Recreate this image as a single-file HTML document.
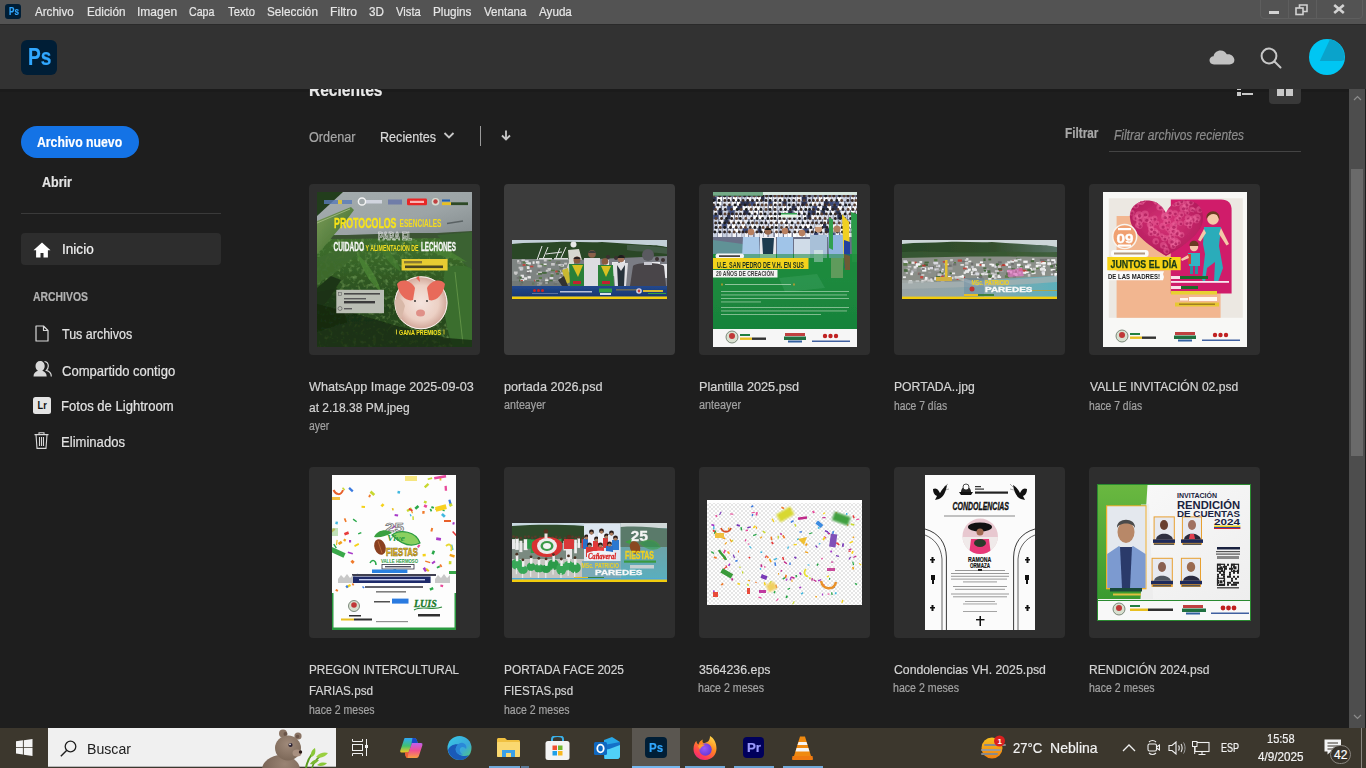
<!DOCTYPE html>
<html><head><meta charset="utf-8">
<style>
*{margin:0;padding:0;box-sizing:border-box}
html,body{width:1366px;height:768px;overflow:hidden;background:#1e1e1e;font-family:"Liberation Sans",sans-serif;position:relative}
.a{position:absolute}
.t{position:absolute;white-space:nowrap;line-height:1;transform-origin:0 0;-webkit-text-stroke:0.2px currentColor}
/* menu */
#menu{z-index:6;left:0;top:0;width:1366px;height:24px;background:#535353}
#menu .t{color:#e8e8e8;font-size:12px;top:6px}
#hdr{z-index:5;left:0;top:24px;width:1366px;height:65px;background:#323232;border-top:1px solid #2a2a2a}
.card{position:absolute;width:171px;height:171px;background:#2e2e2e;border-radius:4px;overflow:hidden}
.card.hov{background:#3c3c3c}
.img{position:absolute;overflow:hidden}
.fn{position:absolute;color:#d6d6d6;font-size:12.6px;line-height:21px;white-space:nowrap}
.meta{position:absolute;color:#9a9a9a;font-size:11.5px;white-space:nowrap;line-height:1}
.side{color:#e2e2e2;font-size:13px}
#tb{left:0;top:728px;width:1366px;height:40px;background:#3c372d}
</style></head><body>

<!-- MENU BAR -->
<div id="menu" class="a">
  <div class="a" style="left:5px;top:4px;width:16px;height:15px;background:#001e36;border-radius:3px"></div>
  <!-- window controls -->
  <div class="a" style="left:1260px;top:-2px;width:103px;height:21px;border:1px solid #5e5e5e;border-radius:0 0 4px 4px"></div>
  <div class="a" style="left:1288px;top:0;width:1px;height:18px;background:#5e5e5e"></div>
  <div class="a" style="left:1316px;top:0;width:1px;height:18px;background:#5e5e5e"></div>
  <div class="a" style="left:1269px;top:11px;width:10px;height:3px;background:#d2d2d2"></div>
  <svg class="a" style="left:1295px;top:4px" width="14" height="12" viewBox="0 0 14 12"><rect x="1" y="4" width="7" height="6.5" fill="none" stroke="#d2d2d2" stroke-width="1.6"/><path d="M4.5 4V1h7.5v6.5H8" fill="none" stroke="#d2d2d2" stroke-width="1.6"/></svg>
  <svg class="a" style="left:1333px;top:4px" width="12" height="10" viewBox="0 0 12 10"><path d="M1.2 1l9.6 8M10.8 1L1.2 9" stroke="#d2d2d2" stroke-width="2.6"/></svg>
</div>

<!-- HEADER -->
<div id="hdr" class="a">
  <div class="a" style="left:21px;top:15px;width:36px;height:35px;background:#001e36;border-radius:6px"></div>
  <!-- cloud -->
  <svg class="a" style="left:1209px;top:23px" width="26" height="17" viewBox="0 0 26 17"><path d="M5 16.5C2 16.5 0.5 14.5 0.5 12.3 0.5 10 2.3 8.3 4.6 8.2 5.2 4.8 8 2.5 11.6 2.5c2.8 0 5 1.5 6.2 3.8 0.5-0.1 0.9-0.1 1.3-0.1 3.5 0 6.3 2.7 6.3 5.9 0 2.9-2.1 4.4-4.8 4.4z" fill="#c2c2c2"/></svg>
  <!-- search -->
  <svg class="a" style="left:1259px;top:21px" width="24" height="24" viewBox="0 0 24 24"><circle cx="10" cy="10" r="7.4" fill="none" stroke="#c8c8c8" stroke-width="2"/><path d="M15.5 15.5L21.5 21.5" stroke="#c8c8c8" stroke-width="2" stroke-linecap="round"/></svg>
  <!-- avatar -->
  <svg class="a" style="left:1309px;top:14px" width="36" height="36" viewBox="0 0 36 36"><circle cx="18" cy="18" r="18" fill="#00c6f3"/><path d="M21 0.3L10.8 22H32.5L35 21A18 18 0 0 0 21 0.3z" fill="#0aa3cb"/></svg>
</div>

<!-- CONTENT -->
<div id="content">
  <div class="a" style="left:0;top:89px;width:1349px;height:3px;background:#1b1b1b"></div>
  <!-- title partially hidden -->
  <!-- list/grid icons -->
  <div class="a" style="left:1237px;top:92px;width:4px;height:4px;background:#c8c8c8"></div>
  <div class="a" style="left:1242px;top:93px;width:11px;height:2px;background:#c8c8c8"></div>
  <div class="a" style="left:1237px;top:87px;width:4px;height:3px;background:#c8c8c8"></div>
  <div class="a" style="left:1269px;top:80px;width:32px;height:24px;background:#383838;border-radius:4px"></div>
  <div class="a" style="left:1277px;top:89px;width:7px;height:7px;background:#c8c8c8"></div>
  <div class="a" style="left:1286px;top:89px;width:7px;height:7px;background:#c8c8c8"></div>

  <!-- sidebar -->
  <div class="a" style="left:21px;top:126px;width:118px;height:32px;background:#1473e6;border-radius:16px"></div>
  <div class="a" style="left:21px;top:213px;width:200px;height:1px;background:#3a3a3a"></div>
  <div class="a" style="left:21px;top:233px;width:200px;height:32px;background:#2d2d2d;border-radius:4px"></div>
  <svg class="a" style="left:33px;top:242px" width="18" height="16" viewBox="0 0 18 16"><path d="M9 0.5L0.5 8.2h2.6V15.5h4.4v-4.6h3v4.6h4.4V8.2h2.6z" fill="#fff"/></svg>
  <svg class="a" style="left:35px;top:325px" width="14" height="17" viewBox="0 0 14 17"><path d="M1 1h7.5L13 5.5V16H1z M8.5 1v4.5H13" fill="none" stroke="#d8d8d8" stroke-width="1.2" stroke-linejoin="round"/></svg>
  <svg class="a" style="left:33px;top:360px" width="19" height="17" viewBox="0 0 19 17"><path d="M0.5 16.5c0-3.5 2-5 4.5-5.8-1.6-1-2.5-2.8-2.5-4.8 0-3 2-5 4.6-5s4.6 2 4.6 5c0 2-0.9 3.8-2.5 4.8 2.5 0.8 4.5 2.3 4.5 5.8z" fill="#d8d8d8"/><path d="M11.5 1.5c2.3 0.3 3.8 2.2 3.8 4.6 0 1.8-0.8 3.3-2 4.3 2.6 0.8 5 2.5 5 6" fill="none" stroke="#d8d8d8" stroke-width="1.2"/></svg>
  <svg class="a" style="left:33px;top:397px" width="18" height="17" viewBox="0 0 18 17"><rect x="0" y="0" width="18" height="17" rx="2.5" fill="#e4e4e4"/><text x="4.6" y="11.8" font-family="Liberation Sans" font-weight="700" font-size="10" fill="#111" textLength="9.2" lengthAdjust="spacingAndGlyphs">Lr</text></svg>
  <svg class="a" style="left:34px;top:432px" width="15" height="17" viewBox="0 0 15 17"><path d="M0.5 2.6h14M5 2.5V0.8h5v1.7M2 2.6l1 13.8h9l1-13.8M5.5 5v9M7.5 5v9M9.5 5v9" fill="none" stroke="#d8d8d8" stroke-width="1.1"/></svg>

  <!-- toolbar -->
  <svg class="a" style="left:443px;top:131px" width="12" height="9" viewBox="0 0 12 9"><path d="M1.5 2l4.5 4.5 4.5-4.5" fill="none" stroke="#c8c8c8" stroke-width="1.8"/></svg>
  <div class="a" style="left:480px;top:126px;width:1px;height:20px;background:#9a9a9a"></div>
  <svg class="a" style="left:501px;top:130px" width="10" height="11" viewBox="0 0 10 11"><path d="M5 0.5v9M1 5.5l4 4 4-4" fill="none" stroke="#c8c8c8" stroke-width="1.8"/></svg>
  <div class="a" style="left:1109px;top:151px;width:192px;height:1px;background:#444"></div>

  <!-- scrollbar -->
  <div class="a" style="left:1349px;top:89px;width:16px;height:639px;background:#4d4d4d"></div>
  <div class="a" style="left:1351px;top:169px;width:12px;height:287px;background:#6a6a6a"></div>
  <svg class="a" style="left:1353px;top:95px" width="9" height="6" viewBox="0 0 9 6"><path d="M1 5l3.5-3.5L8 5" fill="none" stroke="#8c8c8c" stroke-width="1.2"/></svg>
  <svg class="a" style="left:1353px;top:714px" width="9" height="6" viewBox="0 0 9 6"><path d="M1 1l3.5 3.5L8 1" fill="none" stroke="#8c8c8c" stroke-width="1.2"/></svg>

  <!-- ROW 1 -->
  <div class="card" style="left:309px;top:184px"></div>
  <div class="card hov" style="left:504px;top:184px"></div>
  <div class="card" style="left:699px;top:184px"></div>
  <div class="card" style="left:894px;top:184px"></div>
  <div class="card" style="left:1089px;top:184px"></div>
  <div id="t1" class="img" style="left:317px;top:192px;width:155px;height:155px;background:#2a4020"><svg width="155" height="155" viewBox="0 0 155 155">
<defs>
<linearGradient id="t1sky" x1="0" y1="0" x2="1" y2="1"><stop offset="0" stop-color="#a4acae"/><stop offset="0.6" stop-color="#9ca4a6"/><stop offset="1" stop-color="#848c8e"/></linearGradient>
<linearGradient id="t1gr" x1="0" y1="0" x2="0" y2="1"><stop offset="0" stop-color="#4a7434"/><stop offset="0.4" stop-color="#3a6a2a"/><stop offset="0.75" stop-color="#24441a"/><stop offset="1" stop-color="#2e5222"/></linearGradient>
<linearGradient id="t1leaf" x1="0" y1="0" x2="1" y2="1"><stop offset="0" stop-color="#7a9a58"/><stop offset="1" stop-color="#3a6a2a"/></linearGradient>
<radialGradient id="t1pig" cx="0.5" cy="0.5" r="0.55"><stop offset="0" stop-color="#f4e4de"/><stop offset="0.6" stop-color="#ecd0c4"/><stop offset="1" stop-color="#c8988a"/></radialGradient>
<filter id="t1n" x="0" y="0" width="100%" height="100%"><feTurbulence type="fractalNoise" baseFrequency="0.25" numOctaves="2" seed="3"/><feColorMatrix values="0 0 0 0 0.35  0 0 0 0 0.6  0 0 0 0 0.2  0 0 0 -2.2 1.1"/></filter>
<filter id="t1b"><feGaussianBlur stdDeviation="0.35"/></filter>
</defs>
<g filter="url(#t1b)">
<rect width="155" height="155" fill="url(#t1gr)"/>
<rect width="155" height="155" filter="url(#t1n)" opacity="0.55"/>
<rect width="155" height="43" fill="url(#t1sky)"/>
<path d="M0 44 L30 43 L60 42 L90 41 L120 41 L155 39 L155 46 L0 47z" fill="#3a5232"/>
<path d="M0 0H26L0 24z" fill="#243c1e"/>
<path d="M0 29 L34 15 L37 18 L28 30 L16 44 L6 56 L0 62z" fill="url(#t1leaf)"/>
<path d="M0 31 L33 17" stroke="#a8c088" stroke-width="0.8"/>
<path d="M0 66 L30 54 L40 62 L22 78 L0 92z" fill="#3e6a2e" opacity="0.9"/>
<path d="M0 96 L14 84 L24 88 L10 110 L0 118z" fill="#1e3618"/>
<path d="M120 43 L155 40 L155 80 L140 64z" fill="#3a6230"/>
<path d="M90 48 C110 50 130 56 150 70 C130 66 110 60 90 48z" fill="#4a8234" opacity="0.8"/>
<path d="M40 62 C50 70 60 84 64 100 C54 92 46 80 40 62z" fill="#4e8a36" opacity="0.7"/>
<path d="M60 50 C70 56 80 66 84 80 C74 74 66 64 60 50z" fill="#467e30" opacity="0.7"/>
<path d="M0 100 L20 96 L30 130 L0 140z" fill="#1a3214" opacity="0.7"/>
<path d="M128 76 C138 72 155 74 155 78 L155 155 L136 155 C126 128 124 100 128 76z" fill="#3a6e2e"/>
<path d="M138 80 L146 152" stroke="#6a9a4a" stroke-width="0.8"/>
<path d="M0 112 L40 122 L80 134 L130 146 L155 148 V155 H0z" fill="#16280f" opacity="0.75"/>
<!-- logos -->
<rect x="7" y="8" width="28" height="4" fill="#5a7ab8" opacity="0.8"/>
<rect x="21" y="8" width="4" height="4" fill="#d8c040"/>
<circle cx="45" cy="9.5" r="3.6" fill="none" stroke="#f4f4f4" stroke-width="1.5"/>
<rect x="49" y="8" width="16" height="3.5" fill="#d8dce8" opacity="0.85"/>
<rect x="71" y="7.5" width="14" height="5" fill="#5060a8" opacity="0.6"/>
<rect x="90" y="6.6" width="20" height="6.6" rx="1.2" fill="#e82828"/>
<rect x="93" y="8.8" width="14" height="2.2" fill="#ffd8d8" opacity="0.8"/>
<circle cx="118.5" cy="9.8" r="3.8" fill="#d8dcd0"/><circle cx="118.5" cy="9.5" r="2.2" fill="#c04040"/>
<rect x="125" y="7.5" width="8" height="2" fill="#2060b0"/>
<rect x="125" y="10.3" width="9" height="2.8" fill="#e8c020"/>
<rect x="134" y="10.3" width="17" height="2.8" fill="#2e4a28"/>
<!-- title -->
<text x="17" y="35.5" font-family="Liberation Sans" font-weight="700" font-size="15.5" fill="#f8e41a" stroke="#f8e41a" stroke-width="0.3" textLength="62.5" lengthAdjust="spacingAndGlyphs">PROTOCOLOS</text>
<text x="82.5" y="35" font-family="Liberation Sans" font-weight="700" font-size="11.5" fill="#f4dc20" textLength="42" lengthAdjust="spacingAndGlyphs">ESENCIALES</text>
<text x="61" y="48" font-family="Liberation Sans" font-weight="700" font-size="11" fill="none" stroke="#e8e8e8" stroke-width="0.7" textLength="34" lengthAdjust="spacingAndGlyphs">PARA EL</text>
<path d="M130 31.5 L146 29" stroke="#5a6264" stroke-width="1.6"/>
<text x="16.5" y="58.8" font-family="Liberation Sans" font-weight="700" font-size="12" fill="#f8f8f8" stroke="#f8f8f8" stroke-width="0.3" textLength="30.5" lengthAdjust="spacingAndGlyphs">CUIDADO</text>
<text x="48.5" y="58.5" font-family="Liberation Sans" font-weight="700" font-size="8.5" fill="#f4dc20" textLength="53" lengthAdjust="spacingAndGlyphs">Y ALIMENTACIÓN DE</text>
<text x="104" y="58.8" font-family="Liberation Sans" font-weight="700" font-size="12" fill="#f8f8f8" stroke="#f8f8f8" stroke-width="0.3" textLength="35" lengthAdjust="spacingAndGlyphs">LECHONES</text>
<!-- yellow box -->
<rect x="84.6" y="67" width="46" height="11.5" fill="#e8cc30"/>
<rect x="87" y="69" width="18" height="2.4" fill="#8a7a30"/>
<rect x="88" y="73.5" width="38" height="2.6" fill="#4a4420"/>
<!-- grey box -->
<rect x="19.3" y="97.8" width="47.7" height="23.4" fill="#babeb4"/>
<rect x="21.5" y="100.5" width="3" height="3" fill="none" stroke="#666" stroke-width="0.6"/>
<rect x="27" y="101" width="36" height="1.6" fill="#4a4a4a"/>
<rect x="27" y="106" width="22" height="1.4" fill="#5a5a5a"/>
<rect x="27" y="109" width="31" height="2.4" fill="#3a3a3a"/>
<circle cx="23" cy="116.5" r="2" fill="none" stroke="#555" stroke-width="0.6"/>
<rect x="27" y="116" width="8" height="1.4" fill="#5a5a5a"/>
<!-- pig -->
<circle cx="104" cy="110.8" r="26.5" fill="url(#t1pig)"/>
<circle cx="104" cy="110.8" r="26" fill="none" stroke="#f8f4f0" stroke-width="1"/>
<path d="M80 92 C84 86 94 88 98 96 L96 108 C90 110 82 104 80 92z" fill="#e86a5a"/>
<path d="M128 92 C124 86 114 88 110 96 L112 108 C118 110 126 104 128 92z" fill="#e86a5a"/>
<path d="M99 86 L102 84 L103 90z" fill="#e86050"/>
<path d="M78 108 C82 104 86 108 88 114 L84 128 C80 124 78 116 78 108z" fill="#d8b8a8"/>
<ellipse cx="103.5" cy="121" rx="4.5" ry="3.5" fill="#e09088"/>
<circle cx="98" cy="109" r="0.9" fill="#222"/>
<circle cx="110" cy="109" r="0.9" fill="#222"/>
<!-- gana premios -->
<rect x="79" y="137.5" width="1" height="5" fill="#c8c030"/><rect x="126.5" y="137.5" width="1" height="5" fill="#c8c030"/>
<text x="82" y="143.3" font-family="Liberation Sans" font-weight="700" font-size="8" fill="#f4e020" textLength="42" lengthAdjust="spacingAndGlyphs">GANA PREMIOS</text>
</g>
</svg>
</div>
  <div id="t2" class="img" style="left:512px;top:240px;width:155px;height:59px;background:#5a6a60"><svg width="155" height="59" viewBox="0 0 155 59">
<defs>
<linearGradient id="t2band" x1="0" y1="0" x2="0" y2="1"><stop offset="0" stop-color="#22488e"/><stop offset="1" stop-color="#183670"/></linearGradient>
<filter id="t2b"><feGaussianBlur stdDeviation="0.4"/></filter>
<filter id="t2n" x="0" y="0" width="100%" height="100%"><feTurbulence type="fractalNoise" baseFrequency="0.5" numOctaves="2" seed="5"/><feColorMatrix values="0 0 0 0 0.95  0 0 0 0 0.95  0 0 0 0 0.95  0 0 0 -1.6 1.0"/></filter>
</defs>
<g filter="url(#t2b)">
<rect width="155" height="59" fill="#8a9088"/>
<rect width="155" height="8" fill="#c4d0d8"/>
<path d="M0 4 C15 2 30 3 45 2 C60 1 75 3 90 2 C105 3 120 4 135 5 C145 5 150 6 155 7 V24 H0z" fill="#2c4628"/>
<path d="M115 5 C130 5 140 6 155 8 V14 C140 12 128 12 115 10z" fill="#5a6e62" opacity="0.5"/>
<rect y="19" width="60" height="27" fill="#7e8482"/>
<rect x="15.5" y="36.1" width="3.4" height="2.4" fill="#e8e8e8"/><rect x="13.8" y="22.7" width="2.5" height="2.3" fill="#e8e8e8"/><rect x="31.9" y="24.3" width="2.6" height="2.0" fill="#5a7a48"/><rect x="36.5" y="19.4" width="2.6" height="1.7" fill="#5a7a48"/><rect x="48.6" y="39.2" width="3.7" height="2.3" fill="#d8d8e0"/><rect x="47.6" y="25.4" width="3.7" height="2.0" fill="#4a6a40"/><rect x="33.8" y="29.7" width="2.7" height="2.0" fill="#c8c8c8"/><rect x="7.0" y="39.5" width="3.6" height="2.6" fill="#4a6a40"/><rect x="33.3" y="37.7" width="2.3" height="2.2" fill="#a0a0a0"/><rect x="10.6" y="24.1" width="3.0" height="1.8" fill="#c04840"/><rect x="36.3" y="28.9" width="2.3" height="2.0" fill="#c8c8c8"/><rect x="14.1" y="23.9" width="2.7" height="1.6" fill="#4a6a40"/><rect x="57.2" y="28.7" width="3.4" height="2.5" fill="#e8e8e8"/><rect x="8.5" y="39.2" width="3.7" height="2.2" fill="#e8e8e8"/><rect x="24.8" y="40.7" width="3.8" height="2.4" fill="#c8c8c8"/><rect x="51.2" y="28.4" width="3.4" height="1.7" fill="#d8d8e0"/><rect x="36.2" y="37.1" width="2.4" height="2.2" fill="#707070"/><rect x="35.5" y="28.0" width="3.5" height="1.9" fill="#c8c8c8"/><rect x="9.9" y="36.1" width="2.2" height="1.7" fill="#e8e8e8"/><rect x="38.6" y="32.9" width="3.1" height="1.5" fill="#a0a0a0"/><rect x="20.6" y="21.3" width="2.0" height="2.6" fill="#e8e8e8"/><rect x="18.1" y="25.7" width="3.2" height="1.6" fill="#c04840"/><rect x="22.0" y="39.9" width="2.0" height="1.9" fill="#c04840"/><rect x="58.2" y="31.9" width="2.9" height="2.2" fill="#c8c8c8"/><rect x="1.9" y="31.5" width="3.8" height="2.3" fill="#c8c8c8"/><rect x="41.0" y="40.2" width="2.5" height="2.1" fill="#a0a0a0"/><rect x="14.7" y="26.2" width="2.4" height="1.9" fill="#e8e8e8"/><rect x="23.9" y="21.2" width="3.5" height="2.2" fill="#e8e8e8"/><rect x="46.4" y="23.8" width="3.0" height="2.1" fill="#c8c8c8"/><rect x="17.4" y="29.9" width="2.3" height="2.4" fill="#e8e8e8"/><rect x="49.4" y="24.5" width="2.6" height="1.9" fill="#e8e8e8"/><rect x="7.7" y="28.0" width="2.9" height="2.5" fill="#d8d8e0"/><rect x="2.6" y="32.4" width="2.3" height="2.4" fill="#c8c8c8"/><rect x="53.6" y="32.6" width="2.3" height="1.5" fill="#c8c8c8"/><rect x="52.1" y="22.7" width="3.0" height="1.9" fill="#c8c8c8"/><rect x="48.1" y="24.3" width="3.4" height="2.2" fill="#d8d8e0"/><rect x="31.2" y="42.0" width="2.9" height="2.1" fill="#707070"/><rect x="50.4" y="41.4" width="2.2" height="1.7" fill="#c04840"/><rect x="48.7" y="32.3" width="2.6" height="2.6" fill="#c8c8c8"/><rect x="5.2" y="20.3" width="2.1" height="2.3" fill="#e8e8e8"/><rect x="43.0" y="40.7" width="4.0" height="2.4" fill="#a0a0a0"/><rect x="37.3" y="39.8" width="3.4" height="1.8" fill="#4a6a40"/><rect x="6.6" y="26.7" width="4.0" height="2.0" fill="#c8c8c8"/><rect x="47.1" y="30.3" width="2.0" height="1.5" fill="#c8c8c8"/><rect x="19.9" y="42.4" width="2.5" height="2.4" fill="#5a7a48"/><rect x="25.0" y="43.8" width="3.5" height="2.0" fill="#c8c8c8"/><rect x="27.7" y="41.6" width="3.1" height="1.7" fill="#a0a0a0"/><rect x="28.6" y="23.8" width="3.1" height="1.5" fill="#5a7a48"/><rect x="10.7" y="21.6" width="3.2" height="1.8" fill="#5a7a48"/><rect x="29.8" y="32.0" width="3.7" height="1.7" fill="#4a6a40"/><rect x="38.9" y="29.7" width="3.9" height="1.5" fill="#5a7a48"/><rect x="8.6" y="40.0" width="2.3" height="1.6" fill="#c04840"/><rect x="55.6" y="25.4" width="3.0" height="2.2" fill="#c8c8c8"/><rect x="31.8" y="19.2" width="2.9" height="2.3" fill="#c8c8c8"/><rect x="13.2" y="20.3" width="3.4" height="2.0" fill="#d8d8e0"/><rect x="44.4" y="21.5" width="3.8" height="2.5" fill="#5a7a48"/><rect x="49.9" y="36.0" width="3.4" height="2.2" fill="#707070"/><rect x="15.4" y="22.3" width="3.5" height="2.2" fill="#e8e8e8"/><rect x="38.5" y="34.3" width="3.0" height="2.4" fill="#5a7a48"/><rect x="22.9" y="39.4" width="3.0" height="2.1" fill="#a0a0a0"/><rect x="56.0" y="30.1" width="3.9" height="1.9" fill="#4a6a40"/><rect x="54.8" y="36.1" width="2.8" height="1.6" fill="#c04840"/><rect x="24.9" y="39.4" width="3.6" height="2.6" fill="#a0a0a0"/><rect x="24.6" y="33.1" width="3.5" height="1.6" fill="#c8c8c8"/><rect x="8.7" y="27.1" width="2.6" height="2.6" fill="#c8c8c8"/><rect x="56.0" y="26.4" width="2.4" height="2.6" fill="#e8e8e8"/><rect x="6.8" y="22.2" width="2.1" height="1.9" fill="#c8c8c8"/><rect x="9.5" y="19.4" width="3.4" height="1.6" fill="#c8c8c8"/><rect x="33.9" y="41.1" width="3.3" height="2.3" fill="#4a6a40"/><rect x="47.8" y="40.3" width="2.3" height="1.6" fill="#707070"/><rect x="31.1" y="32.0" width="3.6" height="1.7" fill="#4a6a40"/><rect x="25.6" y="29.5" width="2.5" height="1.8" fill="#707070"/><rect x="33.2" y="41.7" width="2.6" height="2.3" fill="#e8e8e8"/><rect x="39.1" y="23.0" width="3.7" height="2.6" fill="#c8c8c8"/><rect x="48.5" y="24.5" width="2.6" height="1.6" fill="#a0a0a0"/><rect x="6.3" y="36.6" width="3.2" height="2.0" fill="#4a6a40"/><rect x="14.0" y="27.3" width="2.7" height="1.5" fill="#5a7a48"/><rect x="5.3" y="21.5" width="3.6" height="2.4" fill="#a0a0a0"/><rect x="25.3" y="22.5" width="2.0" height="2.1" fill="#c8c8c8"/><rect x="9.1" y="41.6" width="2.0" height="1.9" fill="#4a6a40"/><rect x="44.8" y="21.7" width="3.5" height="2.1" fill="#707070"/><rect x="56.6" y="39.0" width="3.2" height="2.3" fill="#c04840"/><rect x="33.1" y="39.4" width="3.2" height="1.9" fill="#e8e8e8"/><rect x="47.4" y="27.5" width="2.9" height="1.8" fill="#707070"/><rect x="24.1" y="39.9" width="3.2" height="2.1" fill="#4a6a40"/><rect x="26.4" y="32.4" width="3.5" height="2.3" fill="#4a6a40"/><rect x="53.5" y="33.0" width="3.1" height="1.7" fill="#c8c8c8"/><rect x="26.1" y="31.5" width="3.8" height="1.5" fill="#c8c8c8"/><rect x="44.4" y="30.5" width="3.7" height="1.7" fill="#4a6a40"/><rect x="25.9" y="33.2" width="2.1" height="1.9" fill="#5a7a48"/><rect x="44.1" y="33.1" width="2.8" height="1.5" fill="#4a6a40"/><rect x="26.8" y="37.1" width="3.2" height="1.9" fill="#5a7a48"/><rect x="7.9" y="43.0" width="2.2" height="2.6" fill="#707070"/><rect x="26.9" y="42.4" width="3.0" height="2.1" fill="#e8e8e8"/><rect x="47.9" y="35.0" width="2.5" height="1.6" fill="#a0a0a0"/><rect x="56.1" y="40.8" width="2.9" height="1.5" fill="#5a7a48"/><rect x="12.1" y="37.3" width="3.0" height="2.6" fill="#e8e8e8"/><rect x="47.6" y="37.0" width="2.0" height="2.1" fill="#c8c8c8"/><rect x="41.7" y="43.0" width="3.3" height="2.0" fill="#707070"/><rect x="14.9" y="30.7" width="2.2" height="2.3" fill="#e8e8e8"/><rect x="31.6" y="23.5" width="3.1" height="1.6" fill="#e8e8e8"/><rect x="37.5" y="37.0" width="3.8" height="2.2" fill="#d8d8e0"/><rect x="8.6" y="34.7" width="3.3" height="1.7" fill="#e8e8e8"/><rect x="14.4" y="32.1" width="3.6" height="2.3" fill="#707070"/><rect x="4.7" y="37.0" width="3.0" height="1.7" fill="#707070"/><rect x="14.7" y="26.7" width="2.9" height="2.3" fill="#e8e8e8"/><rect x="26.5" y="24.9" width="3.3" height="2.4" fill="#c8c8c8"/><rect x="43.2" y="30.6" width="2.4" height="1.8" fill="#c04840"/><rect x="48.4" y="34.0" width="2.0" height="2.4" fill="#707070"/><rect x="25.4" y="25.0" width="2.9" height="2.3" fill="#c8c8c8"/><rect y="41" width="60" height="5" fill="#6a7270" opacity="0.6"/>
<!-- signature -->
<path d="M25 20 L30 6 M31 19 L36 7 M34 14 C40 13 44 13 50 12 M44 18 L48 8 M49 18 L54 7" stroke="#e8e8e8" stroke-width="1" fill="none"/>
<rect x="27" y="18" width="13" height="1.5" fill="#dddddd"/><rect x="42" y="18" width="14" height="1.5" fill="#dddddd"/>
<!-- cyclist -->
<circle cx="61.5" cy="4.5" r="3" fill="#e8e8e8"/>
<path d="M56 10 L67 9 L70 20 L64 28 L52 36 L57 22z" fill="#d8d8d0"/>
<path d="M50 30 L56 28 L59 42 L54 44z" fill="#c8b830"/>
<path d="M46 40 L52 36 L56 46 L50 46z" fill="#303030"/>
<!-- crowd bg -->
<path d="M62 20 L155 16 V46 H62z" fill="#7a7c84"/>
<g fill="#e8e8ec"><rect x="100" y="22" width="6" height="14"/><rect x="108" y="20" width="5" height="12"/><rect x="92" y="20" width="5" height="10"/><rect x="140" y="22" width="8" height="14"/><rect x="148" y="24" width="7" height="14"/></g>
<g fill="#3a3030"><circle cx="96" cy="17" r="2"/><circle cx="104" cy="18" r="2"/><circle cx="111" cy="17" r="2"/><circle cx="145" cy="19" r="2"/><circle cx="151" cy="20" r="2"/></g>
<!-- people -->
<path d="M57 24 L73 24 L74 46 L58 46z" fill="#2a8038"/>
<path d="M60 25 L66 37 L71 25z" fill="#d8c020"/>
<circle cx="65" cy="20" r="3.5" fill="#8a5a40"/><path d="M61.5 19 C62 16 68 16 68.5 19z" fill="#2a2020"/>
<rect x="61" y="41" width="8" height="3" fill="#c02030"/>
<path d="M72 18 L88 18 L89 46 L72 46z" fill="#dcdce0"/>
<circle cx="80" cy="14" r="3.8" fill="#8a6048"/><path d="M76 13 C77 10 83 10 84 13z" fill="#3a3a3a"/>
<path d="M86 25 L101 25 L102 46 L86 46z" fill="#2a8038"/>
<path d="M89 26 L94 37 L99 26z" fill="#d8c020"/>
<circle cx="93" cy="21.5" r="3.3" fill="#8a5a40"/>
<rect x="90" y="41" width="8" height="3" fill="#c02030"/>
<path d="M101 23 L116 23 L114 46 L103 46z" fill="#e0e0e4"/>
<path d="M105 25 L109 31 L113 25 L112 46 L106 46z" fill="#28303a"/>
<circle cx="109" cy="19" r="3.2" fill="#a07058"/><path d="M105.5 18 C106 14 112 14 112.5 18z" fill="#1a1a1a"/>
<path d="M121 26 C124 22 148 22 152 26 L154 46 H118z" fill="#4a4448"/>
<circle cx="136" cy="15" r="6" fill="#5a5a60"/>
<rect x="132" y="22" width="8" height="3" fill="#c8c8d0"/>
<!-- band -->
<rect y="46" width="155" height="10.6" fill="url(#t2band)"/>
<circle cx="22.5" cy="50.5" r="1.5" fill="#d02020"/><circle cx="26.5" cy="50.5" r="1.5" fill="#d02020"/><circle cx="30.5" cy="50.5" r="1.5" fill="#d02020"/>
<rect x="20" y="53" width="26" height="1" fill="#5a70a0"/>
<rect x="48" y="51" width="32" height="1.5" fill="#b8c0d8"/>
<rect x="87" y="48.5" width="13" height="4" fill="#30a040"/>
<rect x="88" y="53" width="11" height="2" fill="#d8e0f0"/>
<rect x="104" y="49.5" width="24" height="0.8" fill="#b09030"/>
<circle cx="127" cy="51" r="2.8" fill="#d8d8e8"/><circle cx="127" cy="51" r="1.4" fill="#c04040"/>
<rect x="131" y="50" width="20" height="2" fill="#d8b830"/><rect x="136" y="53" width="18" height="1" fill="#30a040"/>
<rect y="56.6" width="155" height="2.4" fill="#f2cc10"/>
</g>
</svg>
</div>
  <div id="t3" class="img" style="left:713px;top:192px;width:144px;height:155px;background:#2a8a40"><svg width="144" height="155" viewBox="0 0 144 155">
<defs>
<linearGradient id="t3g" x1="0" y1="0" x2="0" y2="1"><stop offset="0" stop-color="#48a860"/><stop offset="0.45" stop-color="#1e8c40"/><stop offset="1" stop-color="#168038"/></linearGradient>
<filter id="t3b"><feGaussianBlur stdDeviation="0.35"/></filter>
</defs>
<g filter="url(#t3b)">
<rect width="144" height="155" fill="url(#t3g)"/>
<rect width="144" height="62" fill="#6a7088"/><rect x="-1.5" y="5.0" width="4.4" height="4" fill="#2a3050"/><circle cx="0.7" cy="4.0" r="1.4" fill="#5a4030"/><rect x="4.1" y="5.0" width="5.0" height="4" fill="#ffffff"/><circle cx="6.6" cy="4.0" r="1.4" fill="#3a2a20"/><rect x="9.9" y="5.0" width="3.5" height="4" fill="#f4f4f8"/><circle cx="11.6" cy="4.0" r="1.4" fill="#1a1a1a"/><rect x="14.7" y="5.0" width="3.9" height="4" fill="#f4f4f8"/><circle cx="16.7" cy="4.0" r="1.4" fill="#3a2a20"/><rect x="20.0" y="5.0" width="4.4" height="4" fill="#ffffff"/><circle cx="22.2" cy="4.0" r="1.4" fill="#5a4030"/><rect x="25.3" y="5.0" width="3.1" height="4" fill="#e8ecf4"/><circle cx="26.8" cy="4.0" r="1.4" fill="#5a4030"/><rect x="29.4" y="5.0" width="4.3" height="4" fill="#c8d0e0"/><circle cx="31.6" cy="4.0" r="1.4" fill="#2a2020"/><rect x="33.9" y="5.0" width="4.6" height="4" fill="#f4f4f8"/><circle cx="36.3" cy="4.0" r="1.4" fill="#2a2020"/><rect x="39.3" y="5.0" width="4.1" height="4" fill="#e8ecf4"/><circle cx="41.3" cy="4.0" r="1.4" fill="#5a4030"/><rect x="43.6" y="5.0" width="4.3" height="4" fill="#ffffff"/><circle cx="45.7" cy="4.0" r="1.4" fill="#3a2a20"/><rect x="48.0" y="5.0" width="3.4" height="4" fill="#2a3050"/><circle cx="49.7" cy="4.0" r="1.4" fill="#2a2020"/><rect x="51.6" y="5.0" width="4.0" height="4" fill="#d8dce8"/><circle cx="53.6" cy="4.0" r="1.4" fill="#3a2a20"/><rect x="56.1" y="5.0" width="3.3" height="4" fill="#ffffff"/><circle cx="57.7" cy="4.0" r="1.4" fill="#1a1a1a"/><rect x="59.9" y="5.0" width="3.9" height="4" fill="#e8ecf4"/><circle cx="61.9" cy="4.0" r="1.4" fill="#5a4030"/><rect x="64.4" y="5.0" width="3.1" height="4" fill="#f4f4f8"/><circle cx="65.9" cy="4.0" r="1.4" fill="#5a4030"/><rect x="67.4" y="5.0" width="3.1" height="4" fill="#ffffff"/><circle cx="69.0" cy="4.0" r="1.4" fill="#3a2a20"/><rect x="71.4" y="5.0" width="3.6" height="4" fill="#c8d0e0"/><circle cx="73.3" cy="4.0" r="1.4" fill="#2a2020"/><rect x="75.4" y="5.0" width="3.3" height="4" fill="#e8ecf4"/><circle cx="77.0" cy="4.0" r="1.4" fill="#1a1a1a"/><rect x="79.2" y="5.0" width="4.2" height="4" fill="#e8ecf4"/><circle cx="81.3" cy="4.0" r="1.4" fill="#2a2020"/><rect x="83.7" y="5.0" width="4.8" height="4" fill="#f4f4f8"/><circle cx="86.1" cy="4.0" r="1.4" fill="#5a4030"/><rect x="89.1" y="5.0" width="4.4" height="4" fill="#2a3050"/><circle cx="91.3" cy="4.0" r="1.4" fill="#3a2a20"/><rect x="94.0" y="5.0" width="5.0" height="4" fill="#c8d0e0"/><circle cx="96.5" cy="4.0" r="1.4" fill="#2a2020"/><rect x="100.4" y="5.0" width="4.0" height="4" fill="#e8ecf4"/><circle cx="102.3" cy="4.0" r="1.4" fill="#3a2a20"/><rect x="105.7" y="5.0" width="3.5" height="4" fill="#ffffff"/><circle cx="107.5" cy="4.0" r="1.4" fill="#5a4030"/><rect x="110.4" y="5.0" width="4.5" height="4" fill="#ffffff"/><circle cx="112.7" cy="4.0" r="1.4" fill="#1a1a1a"/><rect x="115.1" y="5.0" width="3.5" height="4" fill="#e8ecf4"/><circle cx="116.8" cy="4.0" r="1.4" fill="#5a4030"/><rect x="119.0" y="5.0" width="3.8" height="4" fill="#d8dce8"/><circle cx="120.8" cy="4.0" r="1.4" fill="#3a2a20"/><rect x="124.2" y="5.0" width="4.5" height="4" fill="#ffffff"/><circle cx="126.5" cy="4.0" r="1.4" fill="#1a1a1a"/><rect x="128.9" y="5.0" width="4.3" height="4" fill="#c8d0e0"/><circle cx="131.1" cy="4.0" r="1.4" fill="#5a4030"/><rect x="133.3" y="5.0" width="3.4" height="4" fill="#d8dce8"/><circle cx="135.0" cy="4.0" r="1.4" fill="#3a2a20"/><rect x="138.0" y="5.0" width="4.2" height="4" fill="#e8ecf4"/><circle cx="140.1" cy="4.0" r="1.4" fill="#5a4030"/><rect x="142.7" y="5.0" width="4.1" height="4" fill="#e8ecf4"/><circle cx="144.7" cy="4.0" r="1.4" fill="#2a2020"/><rect x="-1.6" y="9.5" width="4.4" height="4" fill="#e8ecf4"/><circle cx="0.6" cy="8.5" r="1.4" fill="#1a1a1a"/><rect x="3.8" y="9.5" width="4.7" height="4" fill="#ffffff"/><circle cx="6.1" cy="8.5" r="1.4" fill="#1a1a1a"/><rect x="9.5" y="9.5" width="4.5" height="4" fill="#d8dce8"/><circle cx="11.8" cy="8.5" r="1.4" fill="#3a2a20"/><rect x="14.2" y="9.5" width="3.2" height="4" fill="#f4f4f8"/><circle cx="15.8" cy="8.5" r="1.4" fill="#2a2020"/><rect x="18.4" y="9.5" width="4.6" height="4" fill="#f4f4f8"/><circle cx="20.6" cy="8.5" r="1.4" fill="#2a2020"/><rect x="23.9" y="9.5" width="3.3" height="4" fill="#ffffff"/><circle cx="25.5" cy="8.5" r="1.4" fill="#1a1a1a"/><rect x="27.8" y="9.5" width="4.8" height="4" fill="#2a3050"/><circle cx="30.1" cy="8.5" r="1.4" fill="#3a2a20"/><rect x="32.8" y="9.5" width="3.8" height="4" fill="#2a3050"/><circle cx="34.7" cy="8.5" r="1.4" fill="#2a2020"/><rect x="37.5" y="9.5" width="4.0" height="4" fill="#3a4a7a"/><circle cx="39.5" cy="8.5" r="1.4" fill="#2a2020"/><rect x="42.7" y="9.5" width="3.0" height="4" fill="#ffffff"/><circle cx="44.2" cy="8.5" r="1.4" fill="#2a2020"/><rect x="46.3" y="9.5" width="4.1" height="4" fill="#d8dce8"/><circle cx="48.4" cy="8.5" r="1.4" fill="#3a2a20"/><rect x="50.8" y="9.5" width="4.4" height="4" fill="#e8ecf4"/><circle cx="53.0" cy="8.5" r="1.4" fill="#2a2020"/><rect x="55.6" y="9.5" width="3.3" height="4" fill="#3a4a7a"/><circle cx="57.2" cy="8.5" r="1.4" fill="#1a1a1a"/><rect x="60.1" y="9.5" width="4.6" height="4" fill="#ffffff"/><circle cx="62.4" cy="8.5" r="1.4" fill="#2a2020"/><rect x="65.5" y="9.5" width="3.1" height="4" fill="#ffffff"/><circle cx="67.1" cy="8.5" r="1.4" fill="#1a1a1a"/><rect x="70.1" y="9.5" width="3.6" height="4" fill="#2a3050"/><circle cx="71.9" cy="8.5" r="1.4" fill="#3a2a20"/><rect x="73.8" y="9.5" width="4.6" height="4" fill="#c8d0e0"/><circle cx="76.1" cy="8.5" r="1.4" fill="#1a1a1a"/><rect x="78.5" y="9.5" width="4.3" height="4" fill="#e8ecf4"/><circle cx="80.7" cy="8.5" r="1.4" fill="#2a2020"/><rect x="83.8" y="9.5" width="4.3" height="4" fill="#d8dce8"/><circle cx="86.0" cy="8.5" r="1.4" fill="#5a4030"/><rect x="88.8" y="9.5" width="4.9" height="4" fill="#2a3050"/><circle cx="91.3" cy="8.5" r="1.4" fill="#5a4030"/><rect x="94.4" y="9.5" width="4.0" height="4" fill="#d8dce8"/><circle cx="96.5" cy="8.5" r="1.4" fill="#2a2020"/><rect x="98.8" y="9.5" width="3.1" height="4" fill="#ffffff"/><circle cx="100.4" cy="8.5" r="1.4" fill="#3a2a20"/><rect x="102.3" y="9.5" width="4.2" height="4" fill="#e8ecf4"/><circle cx="104.4" cy="8.5" r="1.4" fill="#5a4030"/><rect x="107.2" y="9.5" width="3.5" height="4" fill="#e8ecf4"/><circle cx="108.9" cy="8.5" r="1.4" fill="#5a4030"/><rect x="111.0" y="9.5" width="4.8" height="4" fill="#2a3050"/><circle cx="113.4" cy="8.5" r="1.4" fill="#2a2020"/><rect x="116.5" y="9.5" width="4.0" height="4" fill="#3a4a7a"/><circle cx="118.5" cy="8.5" r="1.4" fill="#3a2a20"/><rect x="121.7" y="9.5" width="4.3" height="4" fill="#3a4a7a"/><circle cx="123.8" cy="8.5" r="1.4" fill="#1a1a1a"/><rect x="126.3" y="9.5" width="4.8" height="4" fill="#e8ecf4"/><circle cx="128.7" cy="8.5" r="1.4" fill="#5a4030"/><rect x="132.4" y="9.5" width="4.9" height="4" fill="#c8d0e0"/><circle cx="134.8" cy="8.5" r="1.4" fill="#2a2020"/><rect x="137.6" y="9.5" width="3.4" height="4" fill="#d8dce8"/><circle cx="139.3" cy="8.5" r="1.4" fill="#3a2a20"/><rect x="141.1" y="9.5" width="3.4" height="4" fill="#ffffff"/><circle cx="142.8" cy="8.5" r="1.4" fill="#5a4030"/><rect x="145.6" y="9.5" width="3.9" height="4" fill="#f4f4f8"/><circle cx="147.5" cy="8.5" r="1.4" fill="#3a2a20"/><rect x="-1.4" y="14.0" width="3.7" height="4" fill="#2a3050"/><circle cx="0.5" cy="13.0" r="1.4" fill="#3a2a20"/><rect x="2.7" y="14.0" width="4.9" height="4" fill="#e8ecf4"/><circle cx="5.1" cy="13.0" r="1.4" fill="#1a1a1a"/><rect x="9.0" y="14.0" width="4.9" height="4" fill="#d8dce8"/><circle cx="11.5" cy="13.0" r="1.4" fill="#3a2a20"/><rect x="14.3" y="14.0" width="4.4" height="4" fill="#3a4a7a"/><circle cx="16.5" cy="13.0" r="1.4" fill="#3a2a20"/><rect x="20.1" y="14.0" width="3.9" height="4" fill="#ffffff"/><circle cx="22.0" cy="13.0" r="1.4" fill="#1a1a1a"/><rect x="25.0" y="14.0" width="4.3" height="4" fill="#2a3050"/><circle cx="27.2" cy="13.0" r="1.4" fill="#2a2020"/><rect x="29.6" y="14.0" width="4.9" height="4" fill="#f4f4f8"/><circle cx="32.1" cy="13.0" r="1.4" fill="#1a1a1a"/><rect x="34.6" y="14.0" width="4.0" height="4" fill="#f4f4f8"/><circle cx="36.6" cy="13.0" r="1.4" fill="#5a4030"/><rect x="39.6" y="14.0" width="3.5" height="4" fill="#f4f4f8"/><circle cx="41.4" cy="13.0" r="1.4" fill="#3a2a20"/><rect x="43.3" y="14.0" width="3.6" height="4" fill="#ffffff"/><circle cx="45.1" cy="13.0" r="1.4" fill="#2a2020"/><rect x="47.4" y="14.0" width="3.3" height="4" fill="#d8dce8"/><circle cx="49.1" cy="13.0" r="1.4" fill="#5a4030"/><rect x="51.5" y="14.0" width="3.1" height="4" fill="#f4f4f8"/><circle cx="53.0" cy="13.0" r="1.4" fill="#5a4030"/><rect x="55.9" y="14.0" width="3.5" height="4" fill="#ffffff"/><circle cx="57.7" cy="13.0" r="1.4" fill="#5a4030"/><rect x="60.7" y="14.0" width="3.0" height="4" fill="#ffffff"/><circle cx="62.3" cy="13.0" r="1.4" fill="#2a2020"/><rect x="64.4" y="14.0" width="4.7" height="4" fill="#c8d0e0"/><circle cx="66.8" cy="13.0" r="1.4" fill="#3a2a20"/><rect x="69.3" y="14.0" width="4.0" height="4" fill="#ffffff"/><circle cx="71.3" cy="13.0" r="1.4" fill="#5a4030"/><rect x="74.0" y="14.0" width="4.6" height="4" fill="#e8ecf4"/><circle cx="76.3" cy="13.0" r="1.4" fill="#1a1a1a"/><rect x="78.8" y="14.0" width="3.6" height="4" fill="#2a3050"/><circle cx="80.6" cy="13.0" r="1.4" fill="#2a2020"/><rect x="83.8" y="14.0" width="3.1" height="4" fill="#f4f4f8"/><circle cx="85.3" cy="13.0" r="1.4" fill="#2a2020"/><rect x="87.9" y="14.0" width="3.4" height="4" fill="#e8ecf4"/><circle cx="89.6" cy="13.0" r="1.4" fill="#2a2020"/><rect x="91.5" y="14.0" width="4.2" height="4" fill="#e8ecf4"/><circle cx="93.6" cy="13.0" r="1.4" fill="#5a4030"/><rect x="95.9" y="14.0" width="3.2" height="4" fill="#c8d0e0"/><circle cx="97.6" cy="13.0" r="1.4" fill="#1a1a1a"/><rect x="99.8" y="14.0" width="4.4" height="4" fill="#3a4a7a"/><circle cx="102.0" cy="13.0" r="1.4" fill="#5a4030"/><rect x="104.3" y="14.0" width="4.7" height="4" fill="#f4f4f8"/><circle cx="106.6" cy="13.0" r="1.4" fill="#2a2020"/><rect x="110.0" y="14.0" width="4.2" height="4" fill="#2a3050"/><circle cx="112.1" cy="13.0" r="1.4" fill="#3a2a20"/><rect x="114.3" y="14.0" width="3.7" height="4" fill="#ffffff"/><circle cx="116.1" cy="13.0" r="1.4" fill="#5a4030"/><rect x="119.2" y="14.0" width="4.8" height="4" fill="#2a3050"/><circle cx="121.6" cy="13.0" r="1.4" fill="#3a2a20"/><rect x="125.0" y="14.0" width="4.3" height="4" fill="#ffffff"/><circle cx="127.2" cy="13.0" r="1.4" fill="#2a2020"/><rect x="130.8" y="14.0" width="3.8" height="4" fill="#c8d0e0"/><circle cx="132.7" cy="13.0" r="1.4" fill="#1a1a1a"/><rect x="134.6" y="14.0" width="3.7" height="4" fill="#ffffff"/><circle cx="136.4" cy="13.0" r="1.4" fill="#2a2020"/><rect x="139.4" y="14.0" width="4.3" height="4" fill="#f4f4f8"/><circle cx="141.6" cy="13.0" r="1.4" fill="#5a4030"/><rect x="144.0" y="14.0" width="5.0" height="4" fill="#ffffff"/><circle cx="146.5" cy="13.0" r="1.4" fill="#5a4030"/><rect x="0.6" y="18.5" width="3.7" height="4" fill="#f4f4f8"/><circle cx="2.5" cy="17.5" r="1.4" fill="#5a4030"/><rect x="5.3" y="18.5" width="3.7" height="4" fill="#2a3050"/><circle cx="7.1" cy="17.5" r="1.4" fill="#1a1a1a"/><rect x="9.8" y="18.5" width="5.0" height="4" fill="#c8d0e0"/><circle cx="12.3" cy="17.5" r="1.4" fill="#2a2020"/><rect x="16.3" y="18.5" width="4.5" height="4" fill="#3a4a7a"/><circle cx="18.5" cy="17.5" r="1.4" fill="#3a2a20"/><rect x="22.2" y="18.5" width="4.0" height="4" fill="#d8dce8"/><circle cx="24.2" cy="17.5" r="1.4" fill="#1a1a1a"/><rect x="26.4" y="18.5" width="3.5" height="4" fill="#e8ecf4"/><circle cx="28.1" cy="17.5" r="1.4" fill="#5a4030"/><rect x="31.0" y="18.5" width="4.5" height="4" fill="#2a3050"/><circle cx="33.3" cy="17.5" r="1.4" fill="#1a1a1a"/><rect x="35.8" y="18.5" width="4.7" height="4" fill="#f4f4f8"/><circle cx="38.1" cy="17.5" r="1.4" fill="#5a4030"/><rect x="40.9" y="18.5" width="4.1" height="4" fill="#ffffff"/><circle cx="42.9" cy="17.5" r="1.4" fill="#2a2020"/><rect x="46.1" y="18.5" width="3.7" height="4" fill="#ffffff"/><circle cx="48.0" cy="17.5" r="1.4" fill="#1a1a1a"/><rect x="50.9" y="18.5" width="4.5" height="4" fill="#c8d0e0"/><circle cx="53.1" cy="17.5" r="1.4" fill="#5a4030"/><rect x="55.6" y="18.5" width="3.1" height="4" fill="#d8dce8"/><circle cx="57.1" cy="17.5" r="1.4" fill="#1a1a1a"/><rect x="59.5" y="18.5" width="5.0" height="4" fill="#f4f4f8"/><circle cx="62.0" cy="17.5" r="1.4" fill="#3a2a20"/><rect x="65.8" y="18.5" width="4.1" height="4" fill="#d8dce8"/><circle cx="67.9" cy="17.5" r="1.4" fill="#2a2020"/><rect x="70.0" y="18.5" width="4.8" height="4" fill="#f4f4f8"/><circle cx="72.4" cy="17.5" r="1.4" fill="#1a1a1a"/><rect x="75.5" y="18.5" width="3.8" height="4" fill="#2a3050"/><circle cx="77.4" cy="17.5" r="1.4" fill="#2a2020"/><rect x="80.6" y="18.5" width="4.5" height="4" fill="#e8ecf4"/><circle cx="82.8" cy="17.5" r="1.4" fill="#1a1a1a"/><rect x="86.2" y="18.5" width="3.9" height="4" fill="#f4f4f8"/><circle cx="88.1" cy="17.5" r="1.4" fill="#3a2a20"/><rect x="91.0" y="18.5" width="3.7" height="4" fill="#d8dce8"/><circle cx="92.8" cy="17.5" r="1.4" fill="#1a1a1a"/><rect x="95.0" y="18.5" width="3.3" height="4" fill="#3a4a7a"/><circle cx="96.6" cy="17.5" r="1.4" fill="#1a1a1a"/><rect x="98.4" y="18.5" width="4.2" height="4" fill="#2a3050"/><circle cx="100.5" cy="17.5" r="1.4" fill="#3a2a20"/><rect x="102.9" y="18.5" width="4.5" height="4" fill="#ffffff"/><circle cx="105.1" cy="17.5" r="1.4" fill="#2a2020"/><rect x="108.4" y="18.5" width="3.7" height="4" fill="#2a3050"/><circle cx="110.3" cy="17.5" r="1.4" fill="#1a1a1a"/><rect x="112.1" y="18.5" width="4.7" height="4" fill="#e8ecf4"/><circle cx="114.5" cy="17.5" r="1.4" fill="#1a1a1a"/><rect x="117.9" y="18.5" width="3.8" height="4" fill="#f4f4f8"/><circle cx="119.8" cy="17.5" r="1.4" fill="#2a2020"/><rect x="123.2" y="18.5" width="3.5" height="4" fill="#2a3050"/><circle cx="124.9" cy="17.5" r="1.4" fill="#5a4030"/><rect x="127.4" y="18.5" width="4.9" height="4" fill="#e8ecf4"/><circle cx="129.9" cy="17.5" r="1.4" fill="#2a2020"/><rect x="133.3" y="18.5" width="3.7" height="4" fill="#e8ecf4"/><circle cx="135.1" cy="17.5" r="1.4" fill="#5a4030"/><rect x="138.0" y="18.5" width="3.9" height="4" fill="#ffffff"/><circle cx="139.9" cy="17.5" r="1.4" fill="#3a2a20"/><rect x="142.5" y="18.5" width="3.5" height="4" fill="#d8dce8"/><circle cx="144.3" cy="17.5" r="1.4" fill="#5a4030"/><rect x="0.3" y="23.0" width="4.8" height="4" fill="#3a4a7a"/><circle cx="2.7" cy="22.0" r="1.4" fill="#1a1a1a"/><rect x="5.9" y="23.0" width="3.3" height="4" fill="#d8dce8"/><circle cx="7.5" cy="22.0" r="1.4" fill="#1a1a1a"/><rect x="10.2" y="23.0" width="3.6" height="4" fill="#c8d0e0"/><circle cx="12.0" cy="22.0" r="1.4" fill="#5a4030"/><rect x="14.1" y="23.0" width="3.3" height="4" fill="#2a3050"/><circle cx="15.8" cy="22.0" r="1.4" fill="#3a2a20"/><rect x="17.7" y="23.0" width="3.2" height="4" fill="#ffffff"/><circle cx="19.4" cy="22.0" r="1.4" fill="#2a2020"/><rect x="21.9" y="23.0" width="3.2" height="4" fill="#f4f4f8"/><circle cx="23.5" cy="22.0" r="1.4" fill="#3a2a20"/><rect x="26.0" y="23.0" width="3.2" height="4" fill="#e8ecf4"/><circle cx="27.5" cy="22.0" r="1.4" fill="#2a2020"/><rect x="29.5" y="23.0" width="3.9" height="4" fill="#d8dce8"/><circle cx="31.4" cy="22.0" r="1.4" fill="#2a2020"/><rect x="34.0" y="23.0" width="4.9" height="4" fill="#d8dce8"/><circle cx="36.4" cy="22.0" r="1.4" fill="#1a1a1a"/><rect x="40.2" y="23.0" width="3.8" height="4" fill="#ffffff"/><circle cx="42.1" cy="22.0" r="1.4" fill="#2a2020"/><rect x="45.4" y="23.0" width="4.5" height="4" fill="#ffffff"/><circle cx="47.7" cy="22.0" r="1.4" fill="#3a2a20"/><rect x="50.0" y="23.0" width="4.3" height="4" fill="#d8dce8"/><circle cx="52.1" cy="22.0" r="1.4" fill="#1a1a1a"/><rect x="55.4" y="23.0" width="4.4" height="4" fill="#ffffff"/><circle cx="57.6" cy="22.0" r="1.4" fill="#3a2a20"/><rect x="60.3" y="23.0" width="3.7" height="4" fill="#ffffff"/><circle cx="62.2" cy="22.0" r="1.4" fill="#1a1a1a"/><rect x="64.6" y="23.0" width="4.6" height="4" fill="#f4f4f8"/><circle cx="66.9" cy="22.0" r="1.4" fill="#1a1a1a"/><rect x="70.1" y="23.0" width="4.0" height="4" fill="#d8dce8"/><circle cx="72.1" cy="22.0" r="1.4" fill="#3a2a20"/><rect x="75.2" y="23.0" width="3.3" height="4" fill="#e8ecf4"/><circle cx="76.9" cy="22.0" r="1.4" fill="#2a2020"/><rect x="78.9" y="23.0" width="4.4" height="4" fill="#c8d0e0"/><circle cx="81.1" cy="22.0" r="1.4" fill="#2a2020"/><rect x="83.8" y="23.0" width="4.7" height="4" fill="#e8ecf4"/><circle cx="86.2" cy="22.0" r="1.4" fill="#2a2020"/><rect x="89.5" y="23.0" width="3.9" height="4" fill="#ffffff"/><circle cx="91.5" cy="22.0" r="1.4" fill="#1a1a1a"/><rect x="94.5" y="23.0" width="3.1" height="4" fill="#2a3050"/><circle cx="96.1" cy="22.0" r="1.4" fill="#1a1a1a"/><rect x="98.3" y="23.0" width="4.5" height="4" fill="#f4f4f8"/><circle cx="100.6" cy="22.0" r="1.4" fill="#3a2a20"/><rect x="103.1" y="23.0" width="3.4" height="4" fill="#f4f4f8"/><circle cx="104.8" cy="22.0" r="1.4" fill="#1a1a1a"/><rect x="106.5" y="23.0" width="4.5" height="4" fill="#d8dce8"/><circle cx="108.8" cy="22.0" r="1.4" fill="#5a4030"/><rect x="111.4" y="23.0" width="3.7" height="4" fill="#d8dce8"/><circle cx="113.3" cy="22.0" r="1.4" fill="#3a2a20"/><rect x="115.6" y="23.0" width="4.2" height="4" fill="#d8dce8"/><circle cx="117.7" cy="22.0" r="1.4" fill="#1a1a1a"/><rect x="120.5" y="23.0" width="3.7" height="4" fill="#d8dce8"/><circle cx="122.3" cy="22.0" r="1.4" fill="#3a2a20"/><rect x="124.6" y="23.0" width="4.5" height="4" fill="#2a3050"/><circle cx="126.8" cy="22.0" r="1.4" fill="#2a2020"/><rect x="130.4" y="23.0" width="3.5" height="4" fill="#c8d0e0"/><circle cx="132.1" cy="22.0" r="1.4" fill="#1a1a1a"/><rect x="134.7" y="23.0" width="4.6" height="4" fill="#d8dce8"/><circle cx="137.0" cy="22.0" r="1.4" fill="#5a4030"/><rect x="139.4" y="23.0" width="4.2" height="4" fill="#c8d0e0"/><circle cx="141.5" cy="22.0" r="1.4" fill="#3a2a20"/><rect x="144.8" y="23.0" width="4.2" height="4" fill="#3a4a7a"/><circle cx="146.9" cy="22.0" r="1.4" fill="#2a2020"/><rect x="0.7" y="27.5" width="4.6" height="4" fill="#c8d0e0"/><circle cx="3.0" cy="26.5" r="1.4" fill="#5a4030"/><rect x="6.3" y="27.5" width="4.3" height="4" fill="#f4f4f8"/><circle cx="8.5" cy="26.5" r="1.4" fill="#3a2a20"/><rect x="11.6" y="27.5" width="3.9" height="4" fill="#2a3050"/><circle cx="13.5" cy="26.5" r="1.4" fill="#1a1a1a"/><rect x="16.6" y="27.5" width="4.0" height="4" fill="#f4f4f8"/><circle cx="18.7" cy="26.5" r="1.4" fill="#2a2020"/><rect x="21.8" y="27.5" width="3.3" height="4" fill="#f4f4f8"/><circle cx="23.5" cy="26.5" r="1.4" fill="#5a4030"/><rect x="25.2" y="27.5" width="4.3" height="4" fill="#f4f4f8"/><circle cx="27.3" cy="26.5" r="1.4" fill="#1a1a1a"/><rect x="30.5" y="27.5" width="4.7" height="4" fill="#e8ecf4"/><circle cx="32.8" cy="26.5" r="1.4" fill="#5a4030"/><rect x="36.6" y="27.5" width="4.1" height="4" fill="#e8ecf4"/><circle cx="38.7" cy="26.5" r="1.4" fill="#2a2020"/><rect x="41.8" y="27.5" width="4.7" height="4" fill="#c8d0e0"/><circle cx="44.1" cy="26.5" r="1.4" fill="#1a1a1a"/><rect x="47.2" y="27.5" width="4.8" height="4" fill="#d8dce8"/><circle cx="49.6" cy="26.5" r="1.4" fill="#1a1a1a"/><rect x="53.2" y="27.5" width="3.3" height="4" fill="#e8ecf4"/><circle cx="54.9" cy="26.5" r="1.4" fill="#1a1a1a"/><rect x="56.8" y="27.5" width="3.3" height="4" fill="#f4f4f8"/><circle cx="58.5" cy="26.5" r="1.4" fill="#3a2a20"/><rect x="60.1" y="27.5" width="3.7" height="4" fill="#f4f4f8"/><circle cx="62.0" cy="26.5" r="1.4" fill="#1a1a1a"/><rect x="64.9" y="27.5" width="4.0" height="4" fill="#f4f4f8"/><circle cx="66.9" cy="26.5" r="1.4" fill="#2a2020"/><rect x="69.1" y="27.5" width="4.1" height="4" fill="#ffffff"/><circle cx="71.2" cy="26.5" r="1.4" fill="#3a2a20"/><rect x="74.6" y="27.5" width="4.2" height="4" fill="#f4f4f8"/><circle cx="76.7" cy="26.5" r="1.4" fill="#3a2a20"/><rect x="78.9" y="27.5" width="4.9" height="4" fill="#e8ecf4"/><circle cx="81.4" cy="26.5" r="1.4" fill="#1a1a1a"/><rect x="84.3" y="27.5" width="4.5" height="4" fill="#e8ecf4"/><circle cx="86.5" cy="26.5" r="1.4" fill="#1a1a1a"/><rect x="89.9" y="27.5" width="4.5" height="4" fill="#e8ecf4"/><circle cx="92.1" cy="26.5" r="1.4" fill="#1a1a1a"/><rect x="94.7" y="27.5" width="4.6" height="4" fill="#d8dce8"/><circle cx="97.0" cy="26.5" r="1.4" fill="#3a2a20"/><rect x="100.8" y="27.5" width="3.2" height="4" fill="#c8d0e0"/><circle cx="102.4" cy="26.5" r="1.4" fill="#5a4030"/><rect x="104.7" y="27.5" width="4.4" height="4" fill="#d8dce8"/><circle cx="106.9" cy="26.5" r="1.4" fill="#3a2a20"/><rect x="110.1" y="27.5" width="3.9" height="4" fill="#f4f4f8"/><circle cx="112.1" cy="26.5" r="1.4" fill="#5a4030"/><rect x="115.4" y="27.5" width="3.2" height="4" fill="#3a4a7a"/><circle cx="117.0" cy="26.5" r="1.4" fill="#5a4030"/><rect x="119.9" y="27.5" width="4.9" height="4" fill="#d8dce8"/><circle cx="122.3" cy="26.5" r="1.4" fill="#2a2020"/><rect x="125.7" y="27.5" width="3.0" height="4" fill="#d8dce8"/><circle cx="127.2" cy="26.5" r="1.4" fill="#1a1a1a"/><rect x="129.5" y="27.5" width="4.4" height="4" fill="#f4f4f8"/><circle cx="131.7" cy="26.5" r="1.4" fill="#2a2020"/><rect x="135.2" y="27.5" width="5.0" height="4" fill="#c8d0e0"/><circle cx="137.7" cy="26.5" r="1.4" fill="#2a2020"/><rect x="141.1" y="27.5" width="3.7" height="4" fill="#ffffff"/><circle cx="142.9" cy="26.5" r="1.4" fill="#5a4030"/><rect x="146.0" y="27.5" width="4.0" height="4" fill="#e8ecf4"/><circle cx="148.0" cy="26.5" r="1.4" fill="#1a1a1a"/><rect x="0.9" y="32.0" width="3.6" height="4" fill="#c8d0e0"/><circle cx="2.7" cy="31.0" r="1.4" fill="#3a2a20"/><rect x="4.8" y="32.0" width="3.8" height="4" fill="#e8ecf4"/><circle cx="6.7" cy="31.0" r="1.4" fill="#1a1a1a"/><rect x="9.7" y="32.0" width="3.8" height="4" fill="#3a4a7a"/><circle cx="11.6" cy="31.0" r="1.4" fill="#1a1a1a"/><rect x="14.3" y="32.0" width="3.1" height="4" fill="#f4f4f8"/><circle cx="15.9" cy="31.0" r="1.4" fill="#3a2a20"/><rect x="18.8" y="32.0" width="3.9" height="4" fill="#ffffff"/><circle cx="20.7" cy="31.0" r="1.4" fill="#3a2a20"/><rect x="23.7" y="32.0" width="3.9" height="4" fill="#d8dce8"/><circle cx="25.6" cy="31.0" r="1.4" fill="#1a1a1a"/><rect x="28.1" y="32.0" width="4.2" height="4" fill="#ffffff"/><circle cx="30.2" cy="31.0" r="1.4" fill="#5a4030"/><rect x="33.4" y="32.0" width="4.3" height="4" fill="#c8d0e0"/><circle cx="35.5" cy="31.0" r="1.4" fill="#1a1a1a"/><rect x="38.0" y="32.0" width="3.4" height="4" fill="#ffffff"/><circle cx="39.6" cy="31.0" r="1.4" fill="#3a2a20"/><rect x="41.5" y="32.0" width="4.4" height="4" fill="#e8ecf4"/><circle cx="43.7" cy="31.0" r="1.4" fill="#5a4030"/><rect x="46.5" y="32.0" width="4.1" height="4" fill="#e8ecf4"/><circle cx="48.6" cy="31.0" r="1.4" fill="#1a1a1a"/><rect x="50.7" y="32.0" width="4.2" height="4" fill="#d8dce8"/><circle cx="52.9" cy="31.0" r="1.4" fill="#2a2020"/><rect x="56.2" y="32.0" width="4.1" height="4" fill="#f4f4f8"/><circle cx="58.3" cy="31.0" r="1.4" fill="#3a2a20"/><rect x="61.4" y="32.0" width="4.0" height="4" fill="#ffffff"/><circle cx="63.4" cy="31.0" r="1.4" fill="#3a2a20"/><rect x="66.4" y="32.0" width="4.4" height="4" fill="#c8d0e0"/><circle cx="68.6" cy="31.0" r="1.4" fill="#5a4030"/><rect x="71.2" y="32.0" width="4.4" height="4" fill="#ffffff"/><circle cx="73.4" cy="31.0" r="1.4" fill="#2a2020"/><rect x="76.6" y="32.0" width="4.9" height="4" fill="#e8ecf4"/><circle cx="79.1" cy="31.0" r="1.4" fill="#1a1a1a"/><rect x="83.0" y="32.0" width="4.3" height="4" fill="#d8dce8"/><circle cx="85.1" cy="31.0" r="1.4" fill="#5a4030"/><rect x="87.6" y="32.0" width="4.5" height="4" fill="#f4f4f8"/><circle cx="89.9" cy="31.0" r="1.4" fill="#1a1a1a"/><rect x="92.5" y="32.0" width="4.9" height="4" fill="#ffffff"/><circle cx="94.9" cy="31.0" r="1.4" fill="#2a2020"/><rect x="97.8" y="32.0" width="3.3" height="4" fill="#d8dce8"/><circle cx="99.5" cy="31.0" r="1.4" fill="#3a2a20"/><rect x="101.3" y="32.0" width="4.3" height="4" fill="#c8d0e0"/><circle cx="103.4" cy="31.0" r="1.4" fill="#3a2a20"/><rect x="106.7" y="32.0" width="3.3" height="4" fill="#ffffff"/><circle cx="108.4" cy="31.0" r="1.4" fill="#2a2020"/><rect x="110.1" y="32.0" width="3.1" height="4" fill="#2a3050"/><circle cx="111.7" cy="31.0" r="1.4" fill="#3a2a20"/><rect x="113.5" y="32.0" width="3.8" height="4" fill="#d8dce8"/><circle cx="115.4" cy="31.0" r="1.4" fill="#5a4030"/><rect x="118.5" y="32.0" width="5.0" height="4" fill="#f4f4f8"/><circle cx="120.9" cy="31.0" r="1.4" fill="#5a4030"/><rect x="124.4" y="32.0" width="3.9" height="4" fill="#e8ecf4"/><circle cx="126.3" cy="31.0" r="1.4" fill="#5a4030"/><rect x="128.8" y="32.0" width="4.3" height="4" fill="#f4f4f8"/><circle cx="131.0" cy="31.0" r="1.4" fill="#3a2a20"/><rect x="133.3" y="32.0" width="5.0" height="4" fill="#f4f4f8"/><circle cx="135.8" cy="31.0" r="1.4" fill="#5a4030"/><rect x="139.5" y="32.0" width="3.7" height="4" fill="#e8ecf4"/><circle cx="141.3" cy="31.0" r="1.4" fill="#5a4030"/><rect x="143.5" y="32.0" width="4.6" height="4" fill="#c8d0e0"/><circle cx="145.9" cy="31.0" r="1.4" fill="#2a2020"/><rect x="0.9" y="36.5" width="4.0" height="4" fill="#e8ecf4"/><circle cx="3.0" cy="35.5" r="1.4" fill="#1a1a1a"/><rect x="5.7" y="36.5" width="3.2" height="4" fill="#d8dce8"/><circle cx="7.3" cy="35.5" r="1.4" fill="#5a4030"/><rect x="9.5" y="36.5" width="4.3" height="4" fill="#d8dce8"/><circle cx="11.7" cy="35.5" r="1.4" fill="#1a1a1a"/><rect x="15.2" y="36.5" width="4.6" height="4" fill="#e8ecf4"/><circle cx="17.5" cy="35.5" r="1.4" fill="#2a2020"/><rect x="20.9" y="36.5" width="4.5" height="4" fill="#ffffff"/><circle cx="23.2" cy="35.5" r="1.4" fill="#3a2a20"/><rect x="26.1" y="36.5" width="3.5" height="4" fill="#d8dce8"/><circle cx="27.9" cy="35.5" r="1.4" fill="#5a4030"/><rect x="30.0" y="36.5" width="4.9" height="4" fill="#3a4a7a"/><circle cx="32.4" cy="35.5" r="1.4" fill="#5a4030"/><rect x="35.5" y="36.5" width="3.7" height="4" fill="#c8d0e0"/><circle cx="37.3" cy="35.5" r="1.4" fill="#3a2a20"/><rect x="39.6" y="36.5" width="4.7" height="4" fill="#e8ecf4"/><circle cx="41.9" cy="35.5" r="1.4" fill="#1a1a1a"/><rect x="45.3" y="36.5" width="3.1" height="4" fill="#2a3050"/><circle cx="46.8" cy="35.5" r="1.4" fill="#1a1a1a"/><rect x="48.5" y="36.5" width="3.2" height="4" fill="#ffffff"/><circle cx="50.1" cy="35.5" r="1.4" fill="#5a4030"/><rect x="52.2" y="36.5" width="4.7" height="4" fill="#e8ecf4"/><circle cx="54.5" cy="35.5" r="1.4" fill="#5a4030"/><rect x="57.2" y="36.5" width="3.5" height="4" fill="#d8dce8"/><circle cx="59.0" cy="35.5" r="1.4" fill="#3a2a20"/><rect x="61.0" y="36.5" width="4.5" height="4" fill="#f4f4f8"/><circle cx="63.3" cy="35.5" r="1.4" fill="#1a1a1a"/><rect x="66.4" y="36.5" width="4.1" height="4" fill="#c8d0e0"/><circle cx="68.5" cy="35.5" r="1.4" fill="#5a4030"/><rect x="71.2" y="36.5" width="4.8" height="4" fill="#3a4a7a"/><circle cx="73.6" cy="35.5" r="1.4" fill="#3a2a20"/><rect x="76.2" y="36.5" width="4.2" height="4" fill="#c8d0e0"/><circle cx="78.3" cy="35.5" r="1.4" fill="#5a4030"/><rect x="80.7" y="36.5" width="4.6" height="4" fill="#f4f4f8"/><circle cx="83.0" cy="35.5" r="1.4" fill="#3a2a20"/><rect x="85.3" y="36.5" width="4.3" height="4" fill="#f4f4f8"/><circle cx="87.5" cy="35.5" r="1.4" fill="#1a1a1a"/><rect x="90.5" y="36.5" width="4.2" height="4" fill="#3a4a7a"/><circle cx="92.6" cy="35.5" r="1.4" fill="#2a2020"/><rect x="96.1" y="36.5" width="3.6" height="4" fill="#f4f4f8"/><circle cx="97.9" cy="35.5" r="1.4" fill="#1a1a1a"/><rect x="101.0" y="36.5" width="4.5" height="4" fill="#f4f4f8"/><circle cx="103.2" cy="35.5" r="1.4" fill="#3a2a20"/><rect x="106.9" y="36.5" width="4.6" height="4" fill="#e8ecf4"/><circle cx="109.2" cy="35.5" r="1.4" fill="#2a2020"/><rect x="112.0" y="36.5" width="4.0" height="4" fill="#2a3050"/><circle cx="114.0" cy="35.5" r="1.4" fill="#2a2020"/><rect x="116.0" y="36.5" width="4.8" height="4" fill="#f4f4f8"/><circle cx="118.4" cy="35.5" r="1.4" fill="#5a4030"/><rect x="121.6" y="36.5" width="4.2" height="4" fill="#e8ecf4"/><circle cx="123.7" cy="35.5" r="1.4" fill="#5a4030"/><rect x="126.9" y="36.5" width="4.8" height="4" fill="#ffffff"/><circle cx="129.3" cy="35.5" r="1.4" fill="#1a1a1a"/><rect x="132.9" y="36.5" width="4.4" height="4" fill="#e8ecf4"/><circle cx="135.1" cy="35.5" r="1.4" fill="#1a1a1a"/><rect x="137.8" y="36.5" width="4.4" height="4" fill="#f4f4f8"/><circle cx="140.0" cy="35.5" r="1.4" fill="#3a2a20"/><rect x="143.1" y="36.5" width="4.7" height="4" fill="#ffffff"/><circle cx="145.4" cy="35.5" r="1.4" fill="#3a2a20"/><rect x="-0.4" y="41.0" width="4.6" height="4" fill="#c8d0e0"/><circle cx="1.9" cy="40.0" r="1.4" fill="#1a1a1a"/><rect x="4.8" y="41.0" width="4.3" height="4" fill="#f4f4f8"/><circle cx="6.9" cy="40.0" r="1.4" fill="#1a1a1a"/><rect x="9.6" y="41.0" width="4.0" height="4" fill="#c8d0e0"/><circle cx="11.6" cy="40.0" r="1.4" fill="#2a2020"/><rect x="14.3" y="41.0" width="4.3" height="4" fill="#d8dce8"/><circle cx="16.5" cy="40.0" r="1.4" fill="#3a2a20"/><rect x="19.4" y="41.0" width="3.7" height="4" fill="#f4f4f8"/><circle cx="21.2" cy="40.0" r="1.4" fill="#5a4030"/><rect x="24.1" y="41.0" width="4.3" height="4" fill="#e8ecf4"/><circle cx="26.3" cy="40.0" r="1.4" fill="#3a2a20"/><rect x="28.4" y="41.0" width="3.0" height="4" fill="#c8d0e0"/><circle cx="29.9" cy="40.0" r="1.4" fill="#2a2020"/><rect x="31.6" y="41.0" width="3.5" height="4" fill="#f4f4f8"/><circle cx="33.4" cy="40.0" r="1.4" fill="#3a2a20"/><rect x="35.9" y="41.0" width="4.3" height="4" fill="#d8dce8"/><circle cx="38.0" cy="40.0" r="1.4" fill="#3a2a20"/><rect x="41.6" y="41.0" width="4.7" height="4" fill="#e8ecf4"/><circle cx="43.9" cy="40.0" r="1.4" fill="#3a2a20"/><rect x="46.5" y="41.0" width="3.7" height="4" fill="#e8ecf4"/><circle cx="48.3" cy="40.0" r="1.4" fill="#1a1a1a"/><rect x="50.6" y="41.0" width="3.8" height="4" fill="#f4f4f8"/><circle cx="52.5" cy="40.0" r="1.4" fill="#3a2a20"/><rect x="55.7" y="41.0" width="4.7" height="4" fill="#d8dce8"/><circle cx="58.1" cy="40.0" r="1.4" fill="#2a2020"/><rect x="61.8" y="41.0" width="3.5" height="4" fill="#ffffff"/><circle cx="63.5" cy="40.0" r="1.4" fill="#5a4030"/><rect x="65.6" y="41.0" width="4.2" height="4" fill="#e8ecf4"/><circle cx="67.7" cy="40.0" r="1.4" fill="#2a2020"/><rect x="70.9" y="41.0" width="3.1" height="4" fill="#f4f4f8"/><circle cx="72.5" cy="40.0" r="1.4" fill="#5a4030"/><rect x="74.3" y="41.0" width="4.3" height="4" fill="#ffffff"/><circle cx="76.4" cy="40.0" r="1.4" fill="#3a2a20"/><rect x="79.9" y="41.0" width="4.0" height="4" fill="#ffffff"/><circle cx="81.9" cy="40.0" r="1.4" fill="#3a2a20"/><rect x="84.1" y="41.0" width="4.7" height="4" fill="#ffffff"/><circle cx="86.5" cy="40.0" r="1.4" fill="#2a2020"/><rect x="89.4" y="41.0" width="3.2" height="4" fill="#ffffff"/><circle cx="91.0" cy="40.0" r="1.4" fill="#5a4030"/><rect x="93.1" y="41.0" width="3.9" height="4" fill="#f4f4f8"/><circle cx="95.0" cy="40.0" r="1.4" fill="#2a2020"/><rect x="97.3" y="41.0" width="3.6" height="4" fill="#d8dce8"/><circle cx="99.1" cy="40.0" r="1.4" fill="#3a2a20"/><rect x="101.0" y="41.0" width="3.7" height="4" fill="#3a4a7a"/><circle cx="102.9" cy="40.0" r="1.4" fill="#1a1a1a"/><rect x="105.4" y="41.0" width="5.0" height="4" fill="#d8dce8"/><circle cx="107.9" cy="40.0" r="1.4" fill="#1a1a1a"/><rect x="111.4" y="41.0" width="4.0" height="4" fill="#d8dce8"/><circle cx="113.4" cy="40.0" r="1.4" fill="#3a2a20"/><rect x="116.8" y="41.0" width="4.6" height="4" fill="#3a4a7a"/><circle cx="119.1" cy="40.0" r="1.4" fill="#5a4030"/><rect x="122.7" y="41.0" width="3.2" height="4" fill="#f4f4f8"/><circle cx="124.3" cy="40.0" r="1.4" fill="#1a1a1a"/><rect x="127.2" y="41.0" width="4.6" height="4" fill="#d8dce8"/><circle cx="129.5" cy="40.0" r="1.4" fill="#1a1a1a"/><rect x="132.7" y="41.0" width="5.0" height="4" fill="#ffffff"/><circle cx="135.2" cy="40.0" r="1.4" fill="#1a1a1a"/><rect x="137.8" y="41.0" width="3.8" height="4" fill="#ffffff"/><circle cx="139.7" cy="40.0" r="1.4" fill="#3a2a20"/><rect x="142.3" y="41.0" width="4.6" height="4" fill="#e8ecf4"/><circle cx="144.6" cy="40.0" r="1.4" fill="#1a1a1a"/><rect width="144" height="3" fill="#d8e8e0"/>
<rect x="0" y="0" width="50" height="4" fill="#5a9a70" opacity="0.8"/>
<rect x="68" y="21.5" width="16" height="4" fill="#e8f4e8"/>
<rect x="68" y="21" width="16" height="1.5" fill="#30a050"/>
<path d="M0 48 L30 52 L30 62 L0 62z" fill="#5aa8a0" opacity="0.6"/>
<!-- officials -->
<g>
<path d="M30 45 L46 45 L47 66 L29 66z" fill="#a8c8e8"/><circle cx="38" cy="40" r="3.3" fill="#b88060"/>
<path d="M47 45 L63 45 L63 66 L47 66z" fill="#e8e8ec"/><path d="M49 46 L61 46 L60 62 L50 62z" fill="#1e3a50"/><circle cx="55" cy="39.5" r="3.3" fill="#9a6a50"/><path d="M51.5 38 C52 35 58 35 58.5 38z" fill="#1a1a1a"/>
<path d="M64 45 L80 45 L80 66 L64 66z" fill="#a0c4e8"/><circle cx="72" cy="39" r="3.3" fill="#b88060"/>
<path d="M81 47 L97 47 L97 66 L81 66z" fill="#d0dce8"/><circle cx="89" cy="41" r="3.3" fill="#b88060"/>
<path d="M97 43 L114 43 L114 66 L97 66z" fill="#a8c0d8"/><circle cx="105.5" cy="37" r="3.6" fill="#c89878"/><path d="M102 35 C102 32 109 32 109 35z" fill="#e0e0e0"/>
<path d="M115 43 L133 43 L132 66 L116 66z" fill="#90b4e0"/><circle cx="124" cy="37" r="3.6" fill="#b08060"/>
<rect x="118" y="66" width="12" height="20" fill="#b0b080"/>
<rect x="101" y="58" width="9" height="12" fill="#c8dce0"/>
<path d="M129 22 L136 30 L137 76 L131 76z" fill="#f0d020"/>
<path d="M131 48 L137 50 L137 76 L131 76z" fill="#2040a0"/>
<path d="M131 62 L137 64 L137 78 L132 78z" fill="#d02030"/>
<path d="M116 25 L120 28 L120 58 L116 56z" fill="#30a050"/>
<path d="M138 20 L144 22 L144 70 L139 70z" fill="#2a9a48"/>
</g>
<path d="M0 62 H144 V86 H0z" fill="#1e8a3c" opacity="0.55"/>
<rect x="2.5" y="61.6" width="28.5" height="5" rx="2.5" fill="#f4f4f4"/>
<rect x="6" y="63.3" width="21" height="1.6" fill="#303030"/>
<rect x="0" y="66" width="95.5" height="11" fill="#f2d21e"/>
<text x="4" y="75.5" font-family="Liberation Sans" font-weight="700" font-size="9.5" fill="#1a3020" textLength="87" lengthAdjust="spacingAndGlyphs">U.E. SAN PEDRO DE  V.H. EN SUS</text>
<rect x="0" y="78" width="64.5" height="7.5" fill="#f4f4f4"/>
<text x="3" y="84.3" font-family="Liberation Sans" font-weight="700" font-size="6.8" fill="#3a3a3a" textLength="58" lengthAdjust="spacingAndGlyphs">20 AÑOS DE CREACIÓN</text>
<path d="M66 86 L104 82 L112 96 L72 100z" fill="#40a060" opacity="0.45"/>
<g fill="#d8ecd8" opacity="0.6">
<rect x="8" y="91.5" width="2" height="2" fill="#f0a020"/><rect x="12" y="92" width="66" height="1"/><rect x="80" y="91.5" width="2" height="2" fill="#f0a020"/>
<rect x="8" y="99" width="128" height="0.9"/><rect x="8" y="102.5" width="126" height="0.9"/><rect x="8" y="106" width="128" height="0.9"/><rect x="8" y="109.5" width="40" height="0.9"/>
<rect x="8" y="115" width="128" height="0.9"/><rect x="8" y="118.5" width="126" height="0.9"/><rect x="8" y="122" width="100" height="0.9"/>
</g>
<rect y="137" width="144" height="18" fill="#f6f6f6"/>
<circle cx="19" cy="145" r="6" fill="#d8e0d0" stroke="#607060" stroke-width="0.8"/><circle cx="19" cy="144" r="3" fill="#c03838"/>
<rect x="27" y="142" width="10" height="2" fill="#208040"/><rect x="27" y="145.5" width="12" height="2.4" fill="#e8c020"/><rect x="39" y="145.5" width="14" height="2.4" fill="#303030"/>
<rect x="72" y="141" width="20" height="3" fill="#c04040"/><rect x="71" y="144.5" width="22" height="3.5" fill="#207040"/><rect x="75" y="148.5" width="14" height="2" fill="#3060a0"/>
<circle cx="112" cy="144" r="2.2" fill="#c02020"/><circle cx="117.5" cy="144" r="2.2" fill="#c02020"/><circle cx="123" cy="144" r="2.2" fill="#c02020"/>
<rect x="99" y="148.5" width="38" height="1.5" fill="#4060a0"/>
</g>
</svg></div>
  <div id="t4" class="img" style="left:902px;top:240px;width:155px;height:59px;background:#607a70"><svg width="155" height="59" viewBox="0 0 155 59">
<defs>
<linearGradient id="t4w" x1="0" y1="0" x2="1" y2="0"><stop offset="0" stop-color="#98a2a4"/><stop offset="0.5" stop-color="#8ca6ac"/><stop offset="1" stop-color="#5cb0bc"/></linearGradient>
<linearGradient id="t4h" x1="0" y1="0" x2="1" y2="0"><stop offset="0" stop-color="#2a4828"/><stop offset="0.6" stop-color="#34502e"/><stop offset="1" stop-color="#5a7468"/></linearGradient>
<filter id="t4b"><feGaussianBlur stdDeviation="0.3"/></filter>
</defs>
<g filter="url(#t4b)">
<rect width="155" height="59" fill="url(#t4w)"/>
<rect width="155" height="7" fill="#ccd6d8"/>
<path d="M0 4 C15 2 30 3 45 2 C60 1 75 3 90 2 C105 3 120 4 135 5 C145 5 150 6 155 7 V24 H0z" fill="url(#t4h)"/>
<path d="M0 12 C30 10 60 14 90 12 C110 11 130 13 155 12 V24 H0z" fill="#3a5a32" opacity="0.8"/>
<path d="M0 18 C40 17 80 16 155 17 V36 C110 38 60 42 0 43z" fill="#8a8e88"/>
<rect x="73.6" y="31.6" width="2.4" height="1.5" fill="#c8c8c8"/><rect x="42.5" y="33.3" width="3.5" height="2.2" fill="#707070"/><rect x="22.5" y="21.6" width="4.3" height="1.6" fill="#4a6a40"/><rect x="11.6" y="26.1" width="3.0" height="2.6" fill="#e8e8e8"/><rect x="9.4" y="30.4" width="2.2" height="2.8" fill="#d8d8e0"/><rect x="17.4" y="21.0" width="2.8" height="2.3" fill="#e8e8e8"/><rect x="108.0" y="20.4" width="4.0" height="2.0" fill="#c8c8c8"/><rect x="92.4" y="25.4" width="2.1" height="2.4" fill="#d8d8e0"/><rect x="151.3" y="24.0" width="2.9" height="2.4" fill="#707070"/><rect x="17.6" y="26.1" width="3.3" height="2.6" fill="#a0a0a0"/><rect x="4.4" y="28.6" width="3.3" height="1.8" fill="#c8c8c8"/><rect x="60.2" y="20.6" width="3.4" height="1.7" fill="#707070"/><rect x="5.7" y="25.9" width="3.6" height="1.6" fill="#c8c8c8"/><rect x="32.4" y="28.4" width="4.4" height="2.1" fill="#d8d8e0"/><rect x="26.0" y="26.8" width="2.5" height="2.5" fill="#5a7a48"/><rect x="1.0" y="36.3" width="2.9" height="1.8" fill="#e8e8e8"/><rect x="6.2" y="41.3" width="4.5" height="2.2" fill="#e8e8e8"/><rect x="50.0" y="35.9" width="3.6" height="1.8" fill="#a0a0a0"/><rect x="74.0" y="23.5" width="4.4" height="2.7" fill="#e8e8e8"/><rect x="45.2" y="24.6" width="4.4" height="2.2" fill="#707070"/><rect x="109.2" y="22.8" width="2.6" height="2.4" fill="#707070"/><rect x="20.4" y="28.1" width="2.6" height="2.1" fill="#d8d8e0"/><rect x="86.8" y="36.0" width="4.4" height="2.5" fill="#c8c8c8"/><rect x="91.2" y="33.4" width="3.5" height="2.0" fill="#c8c8c8"/><rect x="114.1" y="18.4" width="3.8" height="2.7" fill="#4a6a40"/><rect x="139.1" y="27.4" width="4.0" height="2.0" fill="#e8e8e8"/><rect x="54.7" y="37.8" width="3.7" height="2.2" fill="#b83830"/><rect x="19.3" y="34.1" width="3.0" height="1.8" fill="#c8c8c8"/><rect x="50.2" y="21.4" width="2.2" height="1.9" fill="#707070"/><rect x="117.7" y="34.8" width="2.9" height="1.5" fill="#a0a0a0"/><rect x="68.8" y="31.4" width="2.9" height="1.8" fill="#f4f4f4"/><rect x="146.3" y="23.3" width="2.7" height="1.8" fill="#c8c8c8"/><rect x="34.2" y="29.6" width="3.7" height="1.7" fill="#a0a0a0"/><rect x="94.0" y="23.3" width="3.1" height="2.6" fill="#4a6a40"/><rect x="35.3" y="34.9" width="3.0" height="2.4" fill="#707070"/><rect x="150.7" y="29.1" width="2.9" height="2.5" fill="#f4f4f4"/><rect x="77.5" y="24.0" width="2.3" height="1.8" fill="#c04840"/><rect x="39.0" y="35.5" width="2.7" height="2.7" fill="#c04840"/><rect x="60.3" y="36.8" width="2.8" height="1.7" fill="#b83830"/><rect x="130.6" y="31.6" width="3.0" height="2.3" fill="#f4f4f4"/><rect x="63.1" y="25.8" width="3.0" height="2.5" fill="#e8e8e8"/><rect x="31.8" y="39.7" width="3.3" height="1.6" fill="#4a6a40"/><rect x="135.4" y="24.5" width="3.8" height="1.9" fill="#e8e8e8"/><rect x="134.1" y="22.1" width="4.2" height="1.5" fill="#f4f4f4"/><rect x="2.0" y="21.4" width="3.8" height="1.9" fill="#e8e8e8"/><rect x="28.5" y="37.4" width="3.5" height="1.6" fill="#707070"/><rect x="83.1" y="28.3" width="3.6" height="2.5" fill="#a0a0a0"/><rect x="98.5" y="30.0" width="3.0" height="2.0" fill="#a0a0a0"/><rect x="110.8" y="34.9" width="3.2" height="2.6" fill="#707070"/><rect x="148.2" y="25.2" width="3.0" height="2.3" fill="#4a6a40"/><rect x="130.1" y="18.4" width="2.3" height="1.6" fill="#e8e8e8"/><rect x="1.3" y="20.3" width="3.7" height="2.3" fill="#d8d8e0"/><rect x="148.9" y="33.5" width="2.1" height="1.8" fill="#d8d8e0"/><rect x="73.7" y="33.1" width="3.1" height="2.2" fill="#f4f4f4"/><rect x="37.5" y="31.1" width="4.4" height="2.8" fill="#4a6a40"/><rect x="144.7" y="22.7" width="4.3" height="2.3" fill="#707070"/><rect x="1.9" y="29.2" width="3.8" height="2.6" fill="#4a6a40"/><rect x="52.7" y="36.3" width="4.5" height="2.1" fill="#f4f4f4"/><rect x="96.8" y="24.9" width="2.6" height="2.0" fill="#c04840"/><rect x="19.7" y="39.9" width="3.9" height="1.8" fill="#c8c8c8"/><rect x="15.9" y="32.8" width="2.4" height="2.2" fill="#c04840"/><rect x="89.5" y="23.8" width="2.9" height="2.8" fill="#f4f4f4"/><rect x="77.9" y="21.4" width="3.0" height="1.8" fill="#f4f4f4"/><rect x="56.9" y="37.7" width="2.7" height="1.9" fill="#707070"/><rect x="61.6" y="31.5" width="2.2" height="2.4" fill="#e8e8e8"/><rect x="38.8" y="39.8" width="3.7" height="1.7" fill="#c8c8c8"/><rect x="43.8" y="23.6" width="2.5" height="2.3" fill="#b83830"/><rect x="91.4" y="36.5" width="3.1" height="2.7" fill="#c8c8c8"/><rect x="72.1" y="32.4" width="3.9" height="1.8" fill="#a0a0a0"/><rect x="112.6" y="30.0" width="3.5" height="2.4" fill="#c8c8c8"/><rect x="47.5" y="37.1" width="4.0" height="2.0" fill="#d8d8e0"/><rect x="139.9" y="31.9" width="3.1" height="1.9" fill="#f4f4f4"/><rect x="64.1" y="18.2" width="2.3" height="1.9" fill="#e8e8e8"/><rect x="18.9" y="27.2" width="3.2" height="2.3" fill="#d8d8e0"/><rect x="22.6" y="37.6" width="4.3" height="2.7" fill="#a0a0a0"/><rect x="56.9" y="37.1" width="3.9" height="2.2" fill="#4a6a40"/><rect x="40.4" y="37.9" width="2.3" height="2.3" fill="#e8e8e8"/><rect x="129.9" y="29.4" width="3.1" height="1.5" fill="#a0a0a0"/><rect x="55.7" y="19.5" width="4.3" height="2.2" fill="#c04840"/><rect x="130.6" y="27.8" width="3.4" height="2.6" fill="#c8c8c8"/><rect x="139.6" y="31.2" width="3.3" height="2.3" fill="#d8d8e0"/><rect x="34.1" y="35.7" width="3.9" height="2.2" fill="#4a6a40"/><rect x="105.0" y="30.3" width="2.9" height="1.9" fill="#e8e8e8"/><rect x="19.1" y="40.4" width="2.4" height="2.3" fill="#e8e8e8"/><rect x="149.8" y="20.9" width="4.1" height="2.6" fill="#d8d8e0"/><rect x="34.6" y="32.6" width="2.7" height="2.2" fill="#707070"/><rect x="116.5" y="31.7" width="2.7" height="2.5" fill="#c8c8c8"/><rect x="26.3" y="31.7" width="2.9" height="1.6" fill="#a0a0a0"/><rect x="64.3" y="29.6" width="3.3" height="2.2" fill="#d8d8e0"/><rect x="140.2" y="32.6" width="2.8" height="2.7" fill="#e8e8e8"/><rect x="49.3" y="32.5" width="3.8" height="1.8" fill="#e8e8e8"/><rect x="148.8" y="20.1" width="3.1" height="2.6" fill="#707070"/><rect x="154.8" y="25.3" width="4.3" height="1.9" fill="#e8e8e8"/><rect x="148.7" y="29.0" width="3.2" height="1.8" fill="#f4f4f4"/><rect x="10.5" y="28.8" width="4.2" height="2.7" fill="#a0a0a0"/><rect x="104.4" y="32.4" width="3.8" height="2.8" fill="#4a6a40"/><rect x="105.1" y="21.3" width="3.2" height="2.1" fill="#e8e8e8"/><rect x="31.3" y="21.8" width="3.6" height="1.9" fill="#d8d8e0"/><rect x="106.0" y="26.1" width="3.0" height="1.8" fill="#d8d8e0"/><rect x="141.6" y="29.0" width="2.4" height="2.2" fill="#e8e8e8"/><rect x="50.3" y="21.8" width="2.6" height="2.4" fill="#a0a0a0"/><rect x="137.9" y="18.9" width="4.3" height="2.3" fill="#707070"/><rect x="86.2" y="37.1" width="3.2" height="2.7" fill="#e8e8e8"/><rect x="42.7" y="23.5" width="4.1" height="1.8" fill="#e8e8e8"/><rect x="25.3" y="39.5" width="4.2" height="2.4" fill="#c8c8c8"/><rect x="6.4" y="21.6" width="2.5" height="2.1" fill="#5a7a48"/><rect x="28.3" y="38.4" width="2.0" height="2.5" fill="#e8e8e8"/><rect x="46.3" y="27.2" width="4.3" height="2.6" fill="#a0a0a0"/><rect x="13.6" y="24.4" width="4.0" height="2.7" fill="#e8e8e8"/><rect x="51.8" y="22.0" width="2.2" height="1.8" fill="#5a7a48"/><rect x="40.8" y="21.0" width="3.6" height="1.7" fill="#c04840"/><rect x="115.1" y="26.3" width="4.5" height="2.0" fill="#d8d8e0"/><rect x="141.7" y="20.7" width="2.7" height="2.4" fill="#5a7a48"/><rect x="39.8" y="28.7" width="2.0" height="1.6" fill="#e8e8e8"/><rect x="35.4" y="33.3" width="4.2" height="2.7" fill="#c8c8c8"/><rect x="107.9" y="30.8" width="2.2" height="2.7" fill="#e8e8e8"/><rect x="69.0" y="33.3" width="4.1" height="1.9" fill="#f4f4f4"/><rect x="112.8" y="33.8" width="2.8" height="2.0" fill="#f4f4f4"/><rect x="110.6" y="19.9" width="2.2" height="1.7" fill="#b83830"/><rect x="153.3" y="24.9" width="2.9" height="1.9" fill="#f4f4f4"/><rect x="16.7" y="24.0" width="2.1" height="1.7" fill="#d8d8e0"/><rect x="111.3" y="33.0" width="3.8" height="1.8" fill="#e8e8e8"/><rect x="152.5" y="29.8" width="2.4" height="2.5" fill="#a0a0a0"/><rect x="13.6" y="40.5" width="3.6" height="1.6" fill="#e8e8e8"/><rect x="116.3" y="26.4" width="2.3" height="1.7" fill="#a0a0a0"/><rect x="66.2" y="20.6" width="3.1" height="1.6" fill="#e8e8e8"/><rect x="73.4" y="32.6" width="3.9" height="2.4" fill="#d8d8e0"/><rect x="25.7" y="27.3" width="2.2" height="2.6" fill="#e8e8e8"/><rect x="152.4" y="33.9" width="2.2" height="2.7" fill="#d8d8e0"/><rect x="120.6" y="29.6" width="3.2" height="2.6" fill="#c04840"/><rect x="84.9" y="30.3" width="3.5" height="2.7" fill="#4a6a40"/><rect x="51.1" y="23.3" width="3.2" height="2.2" fill="#707070"/><rect x="11.2" y="21.7" width="3.5" height="1.7" fill="#c04840"/><rect x="136.7" y="21.7" width="3.5" height="2.0" fill="#c8c8c8"/><rect x="27.6" y="26.0" width="4.5" height="2.1" fill="#707070"/><rect x="143.3" y="19.3" width="4.3" height="1.6" fill="#d8d8e0"/><rect x="122.3" y="30.5" width="3.4" height="2.1" fill="#b83830"/><rect x="70.8" y="32.2" width="2.0" height="2.3" fill="#707070"/><rect x="134.3" y="27.3" width="2.4" height="1.8" fill="#5a7a48"/><rect x="9.6" y="21.6" width="3.0" height="2.3" fill="#e8e8e8"/><rect x="69.3" y="26.2" width="2.4" height="1.6" fill="#d8d8e0"/><rect x="16.2" y="32.9" width="2.7" height="2.2" fill="#707070"/><rect x="32.2" y="38.6" width="2.5" height="2.1" fill="#c8c8c8"/><rect x="120.6" y="31.7" width="3.6" height="2.2" fill="#e8e8e8"/><rect x="89.0" y="32.6" width="2.9" height="1.7" fill="#c8c8c8"/><rect x="128.8" y="29.6" width="2.1" height="1.8" fill="#f4f4f4"/><rect x="75.1" y="37.0" width="2.8" height="1.5" fill="#f4f4f4"/><rect x="77.8" y="34.3" width="2.2" height="2.8" fill="#5a7a48"/><rect x="79.8" y="24.3" width="2.4" height="1.5" fill="#d8d8e0"/><rect x="138.0" y="28.1" width="3.2" height="2.4" fill="#e8e8e8"/><rect x="116.9" y="28.4" width="3.6" height="2.6" fill="#c04840"/><rect x="27.6" y="26.8" width="3.4" height="2.5" fill="#d8d8e0"/><rect x="16.1" y="25.2" width="4.1" height="2.0" fill="#5a7a48"/><rect x="123.0" y="31.4" width="3.7" height="1.7" fill="#f4f4f4"/><rect x="21.0" y="27.5" width="2.8" height="2.4" fill="#d8d8e0"/><rect x="21.9" y="23.5" width="4.0" height="2.5" fill="#4a6a40"/><rect x="90.4" y="34.4" width="2.3" height="2.3" fill="#d8d8e0"/><rect x="41.6" y="32.8" width="3.6" height="1.9" fill="#c8c8c8"/><rect x="138.9" y="21.3" width="3.7" height="2.6" fill="#c04840"/><rect x="138.6" y="22.5" width="4.2" height="1.8" fill="#e8e8e8"/><rect x="23.0" y="36.9" width="2.5" height="2.5" fill="#f4f4f4"/><rect x="96.3" y="28.6" width="3.9" height="2.2" fill="#b83830"/><rect x="18.2" y="36.0" width="2.9" height="2.5" fill="#c04840"/><rect x="125.2" y="23.7" width="4.0" height="2.6" fill="#c8c8c8"/><rect x="111.4" y="28.4" width="2.8" height="2.1" fill="#f4f4f4"/><rect x="138.6" y="28.4" width="3.3" height="2.1" fill="#e8e8e8"/><rect x="100.3" y="24.4" width="3.3" height="1.7" fill="#b83830"/><rect x="121.3" y="20.6" width="4.4" height="2.3" fill="#f4f4f4"/><rect x="14.0" y="23.2" width="4.2" height="2.4" fill="#f4f4f4"/><rect x="63.1" y="22.0" width="3.4" height="2.6" fill="#c8c8c8"/><rect x="149.2" y="19.2" width="4.1" height="2.0" fill="#f4f4f4"/><rect x="68.9" y="22.7" width="2.3" height="2.3" fill="#707070"/><rect x="86.9" y="34.7" width="3.1" height="2.2" fill="#5a7a48"/><rect x="20.7" y="27.7" width="3.6" height="1.8" fill="#f4f4f4"/><rect x="35.2" y="24.7" width="4.3" height="2.6" fill="#707070"/><rect x="63.0" y="30.2" width="4.0" height="2.7" fill="#e8e8e8"/><rect x="118.0" y="25.7" width="2.9" height="1.5" fill="#5a7a48"/><rect x="32.1" y="19.1" width="3.3" height="2.4" fill="#5a7a48"/><rect x="102.9" y="35.3" width="4.2" height="2.5" fill="#5a7a48"/><rect x="129.5" y="31.4" width="2.1" height="2.8" fill="#e8e8e8"/><rect x="66.0" y="28.6" width="2.8" height="2.2" fill="#f4f4f4"/><rect x="102.6" y="23.8" width="3.6" height="2.1" fill="#e8e8e8"/><rect x="71.2" y="29.0" width="3.8" height="2.0" fill="#d8d8e0"/><rect x="81.4" y="30.6" width="4.0" height="2.0" fill="#d8d8e0"/><rect x="153.2" y="32.7" width="2.9" height="1.9" fill="#5a7a48"/><rect x="128.0" y="27.8" width="2.0" height="2.2" fill="#e8e8e8"/><rect x="81.6" y="29.8" width="2.4" height="1.9" fill="#4a6a40"/><rect x="89.8" y="37.1" width="2.1" height="2.0" fill="#707070"/><rect x="90.1" y="35.5" width="2.2" height="2.2" fill="#f4f4f4"/><rect x="92.9" y="30.1" width="4.0" height="2.2" fill="#c8c8c8"/><rect x="86.2" y="35.8" width="3.0" height="2.1" fill="#4a6a40"/><rect x="129.2" y="30.6" width="3.3" height="2.1" fill="#4a6a40"/><rect x="96.2" y="28.3" width="3.7" height="2.0" fill="#4a6a40"/><rect x="114.9" y="23.8" width="3.7" height="2.2" fill="#f4f4f4"/><rect x="46.1" y="35.9" width="2.7" height="2.0" fill="#f4f4f4"/><rect x="86.3" y="34.9" width="2.2" height="1.9" fill="#4a6a40"/><rect x="123.0" y="25.4" width="4.5" height="2.8" fill="#f4f4f4"/><rect x="115.3" y="18.8" width="4.2" height="1.7" fill="#d8d8e0"/><rect x="70.0" y="28.1" width="4.3" height="2.5" fill="#e8e8e8"/><rect x="3.7" y="32.2" width="2.3" height="1.6" fill="#c8c8c8"/><rect x="8.3" y="32.7" width="2.6" height="2.5" fill="#f4f4f4"/><rect x="56.5" y="35.9" width="2.1" height="2.6" fill="#e8e8e8"/><rect x="150.5" y="30.2" width="3.3" height="2.4" fill="#707070"/><rect x="22.6" y="38.7" width="2.5" height="1.8" fill="#e8e8e8"/><rect x="110.6" y="19.2" width="4.2" height="1.6" fill="#a0a0a0"/><rect x="79.7" y="24.1" width="3.2" height="2.5" fill="#f4f4f4"/><rect x="36.1" y="24.6" width="2.3" height="2.7" fill="#d8d8e0"/><rect x="33.2" y="37.5" width="2.8" height="1.9" fill="#e8e8e8"/><rect x="20.1" y="29.5" width="4.2" height="2.1" fill="#f4f4f4"/><rect x="61.0" y="27.6" width="3.7" height="1.7" fill="#c04840"/><rect x="154.7" y="23.4" width="3.6" height="1.6" fill="#e8e8e8"/><rect x="125.3" y="29.1" width="3.4" height="2.0" fill="#4a6a40"/><rect x="79.8" y="32.8" width="2.8" height="2.6" fill="#c8c8c8"/><rect x="95.5" y="36.2" width="3.6" height="1.8" fill="#e8e8e8"/><rect x="128.7" y="20.2" width="3.4" height="2.0" fill="#4a6a40"/><rect x="27.9" y="39.6" width="2.4" height="2.0" fill="#c8c8c8"/><rect x="20.2" y="24.7" width="3.4" height="1.7" fill="#b83830"/><rect x="58.0" y="35.8" width="3.9" height="2.1" fill="#f4f4f4"/><rect x="79.0" y="33.2" width="3.7" height="1.5" fill="#e8e8e8"/><rect x="154.4" y="26.3" width="2.3" height="2.5" fill="#4a6a40"/><rect x="48.1" y="19.1" width="2.8" height="2.2" fill="#c8c8c8"/><rect x="1.3" y="23.0" width="4.1" height="2.8" fill="#5a7a48"/><rect x="76.5" y="35.9" width="3.9" height="2.3" fill="#707070"/><rect x="145.3" y="22.3" width="3.8" height="2.7" fill="#f4f4f4"/><rect x="59.6" y="34.9" width="2.1" height="2.5" fill="#f4f4f4"/><rect x="19.6" y="28.1" width="3.1" height="1.7" fill="#707070"/><rect x="28.8" y="40.5" width="2.8" height="1.5" fill="#e8e8e8"/><rect x="82.9" y="33.3" width="3.0" height="1.8" fill="#e8e8e8"/><rect x="153.7" y="29.1" width="2.6" height="2.1" fill="#4a6a40"/><rect x="100.2" y="24.3" width="4.0" height="1.6" fill="#b83830"/><rect x="109.4" y="28.2" width="4.3" height="1.9" fill="#4a6a40"/><rect x="112.0" y="19.7" width="3.7" height="2.0" fill="#e8e8e8"/><rect x="140.7" y="25.5" width="2.8" height="1.6" fill="#f4f4f4"/><rect x="95.0" y="32.3" width="2.4" height="1.9" fill="#4a6a40"/><rect x="81.3" y="27.4" width="3.1" height="1.5" fill="#4a6a40"/><rect x="140.3" y="22.0" width="3.6" height="2.4" fill="#f4f4f4"/><rect x="58.4" y="24.1" width="3.5" height="1.6" fill="#e8e8e8"/><rect x="6.7" y="40.0" width="3.4" height="2.1" fill="#e8e8e8"/><rect x="86.4" y="18.6" width="2.8" height="1.8" fill="#4a6a40"/><rect x="87.4" y="23.6" width="3.0" height="1.6" fill="#f4f4f4"/><rect x="153.9" y="23.6" width="3.6" height="2.7" fill="#4a6a40"/><rect x="81.4" y="18.4" width="2.2" height="2.6" fill="#4a6a40"/><rect x="108.6" y="21.0" width="3.4" height="1.5" fill="#e8e8e8"/><rect x="96.0" y="25.3" width="2.9" height="2.6" fill="#c8c8c8"/><rect x="31.8" y="21.8" width="4.4" height="2.7" fill="#d8d8e0"/><rect x="95.9" y="21.3" width="3.8" height="2.1" fill="#707070"/><rect x="32.4" y="37.1" width="2.7" height="2.6" fill="#e8e8e8"/><rect x="103.2" y="21.9" width="2.2" height="1.8" fill="#a0a0a0"/><rect x="125.8" y="34.0" width="2.6" height="2.7" fill="#c8c8c8"/><rect x="103.3" y="23.4" width="2.7" height="2.1" fill="#f4f4f4"/><rect x="113.0" y="30.3" width="2.1" height="2.5" fill="#4a6a40"/><rect x="152.5" y="33.0" width="3.0" height="2.2" fill="#f4f4f4"/><rect x="39.0" y="30.3" width="2.6" height="2.2" fill="#c8c8c8"/><rect x="34.0" y="25.3" width="2.1" height="1.8" fill="#c8c8c8"/><rect x="95.7" y="34.8" width="2.2" height="2.7" fill="#e8e8e8"/><rect x="47.7" y="32.4" width="2.2" height="1.8" fill="#4a6a40"/><rect x="142.3" y="18.8" width="2.9" height="2.0" fill="#707070"/><rect x="146.0" y="23.6" width="2.6" height="1.6" fill="#e8e8e8"/><rect x="133.7" y="24.8" width="2.6" height="2.6" fill="#f4f4f4"/><rect x="62.8" y="19.3" width="2.9" height="1.8" fill="#c8c8c8"/>
<rect x="43" y="20" width="2.5" height="20" fill="#e0c030"/><rect x="34" y="37" width="16" height="4" fill="#d0b040"/>
<path d="M0 40 C40 42 70 44 155 36 V42 C100 46 50 48 0 49z" fill="#a8b0b0" opacity="0.7"/>
<path d="M55 36 L80 44 L75 46 L52 38z" fill="#c0c4c4" opacity="0.7"/>
<path d="M105 30 L120 28 L122 36 L106 37z" fill="#e070c0" opacity="0.7"/>
<rect x="62" y="38" width="20" height="19" fill="#4a7aa0" opacity="0.3"/>
<text x="69.5" y="44.8" font-family="Liberation Sans" font-weight="700" font-size="7" fill="#f0d020" textLength="12" lengthAdjust="spacingAndGlyphs">MSc.</text>
<text x="83" y="45" font-family="Liberation Sans" font-weight="700" font-size="8" fill="#f0d020" stroke="#f0d020" stroke-width="0.2" textLength="24" lengthAdjust="spacingAndGlyphs">PATRICIO</text>
<text x="83" y="51.5" font-family="Liberation Sans" font-weight="700" font-size="8" fill="#f8f8f8" stroke="#f8f8f8" stroke-width="0.35" textLength="47.5" lengthAdjust="spacingAndGlyphs">PAREDES</text>
<circle cx="70" cy="49" r="2.5" fill="#c03030"/>
<rect x="62" y="54" width="14" height="2" fill="#e8c020"/><rect x="76" y="54" width="16" height="2" fill="#3a8040"/>
<rect x="130" y="50" width="25" height="0.8" fill="#c0a030"/>
<rect y="56.6" width="155" height="2.4" fill="#f2cc10"/>
</g>
</svg></div>
  <div id="t5" class="img" style="left:1103px;top:192px;width:144px;height:155px;background:#f0d8c8"><svg width="144" height="155" viewBox="0 0 144 155">
<defs>
<radialGradient id="t5h" cx="0.5" cy="0.4" r="0.6"><stop offset="0" stop-color="#d83478"/><stop offset="1" stop-color="#b01a5a"/></radialGradient>
<clipPath id="t5hc"><path d="M63 64 C50 56 28 42 27 26 C26 14 36 8 46 8.5 C54 9 60 15 63 21 C66 14 72 8.5 82 8.5 C94 8 101 16 100 28 C99 42 78 56 63 64z"/></clipPath>
<filter id="t5b"><feGaussianBlur stdDeviation="0.3"/></filter>
</defs>
<g filter="url(#t5b)">
<rect width="144" height="155" fill="#f8f8f6"/>
<rect x="5.8" y="6.3" width="134" height="119.5" fill="#ece8e2"/>
<rect x="13.6" y="24" width="104" height="101.8" fill="#f2b690"/>
<path d="M67.8 7.4 H118 Q128.6 7.4 128.6 18 V101.5 H67.8z" fill="#d01c6a"/>
<path d="M63 64 C50 56 28 42 27 26 C26 14 36 8 46 8.5 C54 9 60 15 63 21 C66 14 72 8.5 82 8.5 C94 8 101 16 100 28 C99 42 78 56 63 64z" fill="url(#t5h)"/>
<g clip-path="url(#t5hc)"><circle cx="72.1" cy="49.0" r="3.6" fill="#f06aa0" opacity="0.45"/><circle cx="72.6" cy="49.8" r="1.6" fill="#a01050" opacity="0.6"/><circle cx="34.4" cy="33.2" r="2.5" fill="#f06aa0" opacity="0.45"/><circle cx="34.9" cy="34.0" r="1.1" fill="#a01050" opacity="0.6"/><circle cx="66.2" cy="39.3" r="2.0" fill="#f06aa0" opacity="0.45"/><circle cx="66.7" cy="40.1" r="0.9" fill="#a01050" opacity="0.6"/><circle cx="42.0" cy="22.2" r="3.8" fill="#f06aa0" opacity="0.45"/><circle cx="42.5" cy="23.0" r="1.7" fill="#a01050" opacity="0.6"/><circle cx="82.7" cy="15.3" r="3.6" fill="#f06aa0" opacity="0.45"/><circle cx="83.2" cy="16.1" r="1.6" fill="#a01050" opacity="0.6"/><circle cx="90.5" cy="18.1" r="2.4" fill="#f06aa0" opacity="0.45"/><circle cx="91.0" cy="18.9" r="1.1" fill="#a01050" opacity="0.6"/><circle cx="65.9" cy="45.3" r="2.4" fill="#f06aa0" opacity="0.45"/><circle cx="66.4" cy="46.1" r="1.1" fill="#a01050" opacity="0.6"/><circle cx="48.1" cy="26.9" r="2.3" fill="#f06aa0" opacity="0.45"/><circle cx="48.6" cy="27.7" r="1.0" fill="#a01050" opacity="0.6"/><circle cx="36.8" cy="9.8" r="2.6" fill="#f06aa0" opacity="0.45"/><circle cx="37.3" cy="10.6" r="1.2" fill="#a01050" opacity="0.6"/><circle cx="76.2" cy="25.6" r="2.6" fill="#f06aa0" opacity="0.45"/><circle cx="76.7" cy="26.4" r="1.2" fill="#a01050" opacity="0.6"/><circle cx="86.6" cy="33.9" r="2.6" fill="#f06aa0" opacity="0.45"/><circle cx="87.1" cy="34.7" r="1.2" fill="#a01050" opacity="0.6"/><circle cx="61.6" cy="46.9" r="2.1" fill="#f06aa0" opacity="0.45"/><circle cx="62.1" cy="47.7" r="1.0" fill="#a01050" opacity="0.6"/><circle cx="53.1" cy="39.6" r="2.0" fill="#f06aa0" opacity="0.45"/><circle cx="53.6" cy="40.4" r="0.9" fill="#a01050" opacity="0.6"/><circle cx="96.7" cy="17.4" r="3.5" fill="#f06aa0" opacity="0.45"/><circle cx="97.2" cy="18.2" r="1.6" fill="#a01050" opacity="0.6"/><circle cx="51.5" cy="26.6" r="3.0" fill="#f06aa0" opacity="0.45"/><circle cx="52.0" cy="27.4" r="1.4" fill="#a01050" opacity="0.6"/><circle cx="83.4" cy="12.3" r="3.5" fill="#f06aa0" opacity="0.45"/><circle cx="83.9" cy="13.1" r="1.6" fill="#a01050" opacity="0.6"/><circle cx="32.7" cy="25.8" r="3.2" fill="#f06aa0" opacity="0.45"/><circle cx="33.2" cy="26.6" r="1.4" fill="#a01050" opacity="0.6"/><circle cx="93.9" cy="25.7" r="3.8" fill="#f06aa0" opacity="0.45"/><circle cx="94.4" cy="26.5" r="1.7" fill="#a01050" opacity="0.6"/><circle cx="66.3" cy="24.1" r="2.6" fill="#f06aa0" opacity="0.45"/><circle cx="66.8" cy="24.9" r="1.2" fill="#a01050" opacity="0.6"/><circle cx="39.1" cy="10.5" r="2.3" fill="#f06aa0" opacity="0.45"/><circle cx="39.6" cy="11.3" r="1.0" fill="#a01050" opacity="0.6"/><circle cx="38.0" cy="8.8" r="4.0" fill="#f06aa0" opacity="0.45"/><circle cx="38.5" cy="9.6" r="1.8" fill="#a01050" opacity="0.6"/><circle cx="65.5" cy="29.5" r="2.5" fill="#f06aa0" opacity="0.45"/><circle cx="66.0" cy="30.3" r="1.1" fill="#a01050" opacity="0.6"/><circle cx="70.0" cy="53.9" r="2.9" fill="#f06aa0" opacity="0.45"/><circle cx="70.5" cy="54.7" r="1.3" fill="#a01050" opacity="0.6"/><circle cx="62.5" cy="54.6" r="2.3" fill="#f06aa0" opacity="0.45"/><circle cx="63.0" cy="55.4" r="1.0" fill="#a01050" opacity="0.6"/><circle cx="72.6" cy="51.7" r="2.2" fill="#f06aa0" opacity="0.45"/><circle cx="73.1" cy="52.5" r="1.0" fill="#a01050" opacity="0.6"/><circle cx="58.2" cy="14.7" r="3.7" fill="#f06aa0" opacity="0.45"/><circle cx="58.7" cy="15.5" r="1.7" fill="#a01050" opacity="0.6"/><circle cx="47.8" cy="32.3" r="4.0" fill="#f06aa0" opacity="0.45"/><circle cx="48.3" cy="33.1" r="1.8" fill="#a01050" opacity="0.6"/><circle cx="59.6" cy="34.3" r="3.5" fill="#f06aa0" opacity="0.45"/><circle cx="60.1" cy="35.1" r="1.6" fill="#a01050" opacity="0.6"/><circle cx="61.4" cy="22.9" r="2.8" fill="#f06aa0" opacity="0.45"/><circle cx="61.9" cy="23.7" r="1.3" fill="#a01050" opacity="0.6"/><circle cx="36.8" cy="27.9" r="4.0" fill="#f06aa0" opacity="0.45"/><circle cx="37.3" cy="28.7" r="1.8" fill="#a01050" opacity="0.6"/><circle cx="62.9" cy="25.6" r="2.2" fill="#f06aa0" opacity="0.45"/><circle cx="63.4" cy="26.4" r="1.0" fill="#a01050" opacity="0.6"/><circle cx="90.2" cy="27.0" r="3.6" fill="#f06aa0" opacity="0.45"/><circle cx="90.7" cy="27.8" r="1.6" fill="#a01050" opacity="0.6"/><circle cx="75.1" cy="50.1" r="2.7" fill="#f06aa0" opacity="0.45"/><circle cx="75.6" cy="50.9" r="1.2" fill="#a01050" opacity="0.6"/><circle cx="78.1" cy="22.3" r="3.0" fill="#f06aa0" opacity="0.45"/><circle cx="78.6" cy="23.1" r="1.3" fill="#a01050" opacity="0.6"/><circle cx="74.1" cy="39.7" r="2.0" fill="#f06aa0" opacity="0.45"/><circle cx="74.6" cy="40.5" r="0.9" fill="#a01050" opacity="0.6"/><circle cx="66.5" cy="20.5" r="3.3" fill="#f06aa0" opacity="0.45"/><circle cx="67.0" cy="21.3" r="1.5" fill="#a01050" opacity="0.6"/><circle cx="60.3" cy="53.4" r="3.3" fill="#f06aa0" opacity="0.45"/><circle cx="60.8" cy="54.2" r="1.5" fill="#a01050" opacity="0.6"/><circle cx="85.0" cy="26.2" r="3.3" fill="#f06aa0" opacity="0.45"/><circle cx="85.5" cy="27.0" r="1.5" fill="#a01050" opacity="0.6"/><circle cx="64.3" cy="36.7" r="2.3" fill="#f06aa0" opacity="0.45"/><circle cx="64.8" cy="37.5" r="1.0" fill="#a01050" opacity="0.6"/><circle cx="61.3" cy="46.1" r="3.4" fill="#f06aa0" opacity="0.45"/><circle cx="61.8" cy="46.9" r="1.5" fill="#a01050" opacity="0.6"/><circle cx="80.0" cy="16.0" r="3.6" fill="#f06aa0" opacity="0.45"/><circle cx="80.5" cy="16.8" r="1.6" fill="#a01050" opacity="0.6"/><circle cx="69.0" cy="44.6" r="2.8" fill="#f06aa0" opacity="0.45"/><circle cx="69.5" cy="45.4" r="1.3" fill="#a01050" opacity="0.6"/><circle cx="72.2" cy="50.9" r="3.3" fill="#f06aa0" opacity="0.45"/><circle cx="72.7" cy="51.7" r="1.5" fill="#a01050" opacity="0.6"/><circle cx="79.3" cy="7.6" r="2.3" fill="#f06aa0" opacity="0.45"/><circle cx="79.8" cy="8.4" r="1.0" fill="#a01050" opacity="0.6"/><circle cx="58.6" cy="43.7" r="2.4" fill="#f06aa0" opacity="0.45"/><circle cx="59.1" cy="44.5" r="1.1" fill="#a01050" opacity="0.6"/><circle cx="76.8" cy="42.6" r="2.1" fill="#f06aa0" opacity="0.45"/><circle cx="77.3" cy="43.4" r="0.9" fill="#a01050" opacity="0.6"/><circle cx="60.9" cy="19.1" r="2.1" fill="#f06aa0" opacity="0.45"/><circle cx="61.4" cy="19.9" r="0.9" fill="#a01050" opacity="0.6"/><circle cx="35.9" cy="24.4" r="2.4" fill="#f06aa0" opacity="0.45"/><circle cx="36.4" cy="25.2" r="1.1" fill="#a01050" opacity="0.6"/><circle cx="40.3" cy="8.1" r="2.9" fill="#f06aa0" opacity="0.45"/><circle cx="40.8" cy="8.9" r="1.3" fill="#a01050" opacity="0.6"/><circle cx="54.1" cy="41.5" r="3.2" fill="#f06aa0" opacity="0.45"/><circle cx="54.6" cy="42.3" r="1.4" fill="#a01050" opacity="0.6"/><circle cx="46.6" cy="29.8" r="2.2" fill="#f06aa0" opacity="0.45"/><circle cx="47.1" cy="30.6" r="1.0" fill="#a01050" opacity="0.6"/><circle cx="87.5" cy="27.7" r="2.1" fill="#f06aa0" opacity="0.45"/><circle cx="88.0" cy="28.5" r="0.9" fill="#a01050" opacity="0.6"/><circle cx="71.4" cy="11.5" r="3.1" fill="#f06aa0" opacity="0.45"/><circle cx="71.9" cy="12.3" r="1.4" fill="#a01050" opacity="0.6"/><circle cx="51.1" cy="39.7" r="3.9" fill="#f06aa0" opacity="0.45"/><circle cx="51.6" cy="40.5" r="1.8" fill="#a01050" opacity="0.6"/><circle cx="86.6" cy="30.3" r="3.6" fill="#f06aa0" opacity="0.45"/><circle cx="87.1" cy="31.1" r="1.6" fill="#a01050" opacity="0.6"/><circle cx="73.5" cy="27.4" r="2.3" fill="#f06aa0" opacity="0.45"/><circle cx="74.0" cy="28.2" r="1.0" fill="#a01050" opacity="0.6"/><circle cx="70.1" cy="38.7" r="3.9" fill="#f06aa0" opacity="0.45"/><circle cx="70.6" cy="39.5" r="1.8" fill="#a01050" opacity="0.6"/><circle cx="67.9" cy="41.7" r="2.3" fill="#f06aa0" opacity="0.45"/><circle cx="68.4" cy="42.5" r="1.0" fill="#a01050" opacity="0.6"/><circle cx="53.8" cy="31.0" r="2.5" fill="#f06aa0" opacity="0.45"/><circle cx="54.3" cy="31.8" r="1.1" fill="#a01050" opacity="0.6"/><circle cx="62.7" cy="30.1" r="2.6" fill="#f06aa0" opacity="0.45"/><circle cx="63.2" cy="30.9" r="1.2" fill="#a01050" opacity="0.6"/><circle cx="47.2" cy="33.7" r="2.2" fill="#f06aa0" opacity="0.45"/><circle cx="47.7" cy="34.5" r="1.0" fill="#a01050" opacity="0.6"/><circle cx="72.0" cy="31.7" r="2.6" fill="#f06aa0" opacity="0.45"/><circle cx="72.5" cy="32.5" r="1.2" fill="#a01050" opacity="0.6"/><circle cx="83.9" cy="20.2" r="2.5" fill="#f06aa0" opacity="0.45"/><circle cx="84.4" cy="21.0" r="1.1" fill="#a01050" opacity="0.6"/><circle cx="47.7" cy="41.3" r="2.9" fill="#f06aa0" opacity="0.45"/><circle cx="48.2" cy="42.1" r="1.3" fill="#a01050" opacity="0.6"/><circle cx="73.7" cy="41.0" r="3.5" fill="#f06aa0" opacity="0.45"/><circle cx="74.2" cy="41.8" r="1.6" fill="#a01050" opacity="0.6"/><circle cx="48.3" cy="36.9" r="2.7" fill="#f06aa0" opacity="0.45"/><circle cx="48.8" cy="37.7" r="1.2" fill="#a01050" opacity="0.6"/><circle cx="48.0" cy="36.7" r="2.9" fill="#f06aa0" opacity="0.45"/><circle cx="48.5" cy="37.5" r="1.3" fill="#a01050" opacity="0.6"/><circle cx="52.7" cy="49.2" r="3.2" fill="#f06aa0" opacity="0.45"/><circle cx="53.2" cy="50.0" r="1.4" fill="#a01050" opacity="0.6"/><circle cx="28.7" cy="20.6" r="2.9" fill="#f06aa0" opacity="0.45"/><circle cx="29.2" cy="21.4" r="1.3" fill="#a01050" opacity="0.6"/><circle cx="83.6" cy="30.8" r="3.2" fill="#f06aa0" opacity="0.45"/><circle cx="84.1" cy="31.6" r="1.4" fill="#a01050" opacity="0.6"/><circle cx="78.4" cy="42.7" r="3.0" fill="#f06aa0" opacity="0.45"/><circle cx="78.9" cy="43.5" r="1.3" fill="#a01050" opacity="0.6"/><circle cx="93.5" cy="28.4" r="2.8" fill="#f06aa0" opacity="0.45"/><circle cx="94.0" cy="29.2" r="1.3" fill="#a01050" opacity="0.6"/><circle cx="89.0" cy="17.4" r="2.6" fill="#f06aa0" opacity="0.45"/><circle cx="89.5" cy="18.2" r="1.2" fill="#a01050" opacity="0.6"/><circle cx="87.4" cy="9.8" r="3.7" fill="#f06aa0" opacity="0.45"/><circle cx="87.9" cy="10.6" r="1.7" fill="#a01050" opacity="0.6"/><circle cx="77.4" cy="31.1" r="2.6" fill="#f06aa0" opacity="0.45"/><circle cx="77.9" cy="31.9" r="1.2" fill="#a01050" opacity="0.6"/><circle cx="36.6" cy="33.7" r="3.1" fill="#f06aa0" opacity="0.45"/><circle cx="37.1" cy="34.5" r="1.4" fill="#a01050" opacity="0.6"/><circle cx="62.8" cy="25.2" r="2.3" fill="#f06aa0" opacity="0.45"/><circle cx="63.3" cy="26.0" r="1.0" fill="#a01050" opacity="0.6"/><circle cx="69.4" cy="53.1" r="2.1" fill="#f06aa0" opacity="0.45"/><circle cx="69.9" cy="53.9" r="1.0" fill="#a01050" opacity="0.6"/><circle cx="77.9" cy="8.8" r="3.7" fill="#f06aa0" opacity="0.45"/><circle cx="78.4" cy="9.6" r="1.7" fill="#a01050" opacity="0.6"/><circle cx="36.0" cy="23.0" r="3.8" fill="#f06aa0" opacity="0.45"/><circle cx="36.5" cy="23.8" r="1.7" fill="#a01050" opacity="0.6"/><circle cx="56.6" cy="15.3" r="3.2" fill="#f06aa0" opacity="0.45"/><circle cx="57.1" cy="16.1" r="1.5" fill="#a01050" opacity="0.6"/><circle cx="54.1" cy="10.2" r="2.1" fill="#f06aa0" opacity="0.45"/><circle cx="54.6" cy="11.0" r="1.0" fill="#a01050" opacity="0.6"/><circle cx="68.6" cy="49.1" r="3.8" fill="#f06aa0" opacity="0.45"/><circle cx="69.1" cy="49.9" r="1.7" fill="#a01050" opacity="0.6"/><circle cx="35.9" cy="31.0" r="2.6" fill="#f06aa0" opacity="0.45"/><circle cx="36.4" cy="31.8" r="1.2" fill="#a01050" opacity="0.6"/><circle cx="70.4" cy="34.4" r="3.9" fill="#f06aa0" opacity="0.45"/><circle cx="70.9" cy="35.2" r="1.7" fill="#a01050" opacity="0.6"/><circle cx="53.7" cy="9.2" r="3.4" fill="#f06aa0" opacity="0.45"/><circle cx="54.2" cy="10.0" r="1.5" fill="#a01050" opacity="0.6"/><circle cx="63.4" cy="58.8" r="3.1" fill="#f06aa0" opacity="0.45"/><circle cx="63.9" cy="59.6" r="1.4" fill="#a01050" opacity="0.6"/><circle cx="71.9" cy="21.3" r="3.1" fill="#f06aa0" opacity="0.45"/><circle cx="72.4" cy="22.1" r="1.4" fill="#a01050" opacity="0.6"/><circle cx="43.3" cy="27.5" r="3.5" fill="#f06aa0" opacity="0.45"/><circle cx="43.8" cy="28.3" r="1.6" fill="#a01050" opacity="0.6"/><circle cx="74.5" cy="10.9" r="3.3" fill="#f06aa0" opacity="0.45"/><circle cx="75.0" cy="11.7" r="1.5" fill="#a01050" opacity="0.6"/><circle cx="32.7" cy="13.2" r="3.2" fill="#f06aa0" opacity="0.45"/><circle cx="33.2" cy="14.0" r="1.4" fill="#a01050" opacity="0.6"/><circle cx="61.6" cy="24.8" r="3.6" fill="#f06aa0" opacity="0.45"/><circle cx="62.1" cy="25.6" r="1.6" fill="#a01050" opacity="0.6"/></g>
<!-- circle date -->
<circle cx="21.7" cy="44.5" r="12.7" fill="#f8f4ee"/>
<circle cx="21.7" cy="44.5" r="11.2" fill="#f0a070"/>
<text x="13.5" y="50.5" font-family="Liberation Sans" font-weight="700" font-size="12" fill="#ffffff" stroke="#fff" stroke-width="0.3" textLength="17" lengthAdjust="spacingAndGlyphs">09</text>
<rect x="15" y="36" width="13" height="2.2" fill="#fff"/><rect x="15" y="52.5" width="13" height="2.2" fill="#fff"/>
<rect x="8" y="58" width="37.6" height="7" rx="3" fill="#fbfbf8"/>
<rect x="11" y="60.5" width="31" height="2" fill="#b09880"/>
<!-- figures -->
<circle cx="110" cy="27" r="5.8" fill="#f4c8a8"/><path d="M103.5 27 C102 17 118 16 116.5 28 L114 23 C110 21 106 22 103.5 27z" fill="#6a3a20"/>
<path d="M101 35 L118 35 L116 54 L120 76 L115 90 L111 90 L112 70 L104 76 L102 90 L99 88 L102 62 L100 52z" fill="#2aacba"/>
<path d="M118 36 L126 52 L123.5 53.5 L116 42z" fill="#f4c8a8"/>
<path d="M101 37 L95 48 L97.5 49.5 L103 41z" fill="#f4c8a8"/>
<circle cx="91" cy="55" r="4.2" fill="#f4c8a8"/><path d="M86.5 54 C86 47 96 47 95.5 54z" fill="#6a3a20"/>
<path d="M85 61 L97 61 L97 74 L86 74z" fill="#30b4c4"/>
<rect x="85" y="62" width="3" height="10" fill="#d04030"/>
<rect x="87" y="74" width="3" height="8" fill="#2a90a0"/><rect x="92" y="74" width="3" height="8" fill="#2a90a0"/>
<path d="M85 63 L78 67 L79 69 L86 66z" fill="#f4c8a8"/>
<!-- banners -->
<rect x="4.3" y="65" width="73.4" height="13.2" fill="#f8d418"/>
<text x="7.5" y="76.3" font-family="Liberation Sans" font-weight="700" font-size="11" fill="#1a3a1a" stroke="#1a3a1a" stroke-width="0.25" textLength="67" lengthAdjust="spacingAndGlyphs">JUNTOS EL DÍA</text>
<path d="M2.5 79.3 L61 79.3 L60 82 L61 85 L60 88.2 L2.5 88.2 L3.5 84z" fill="#fafafa"/>
<text x="5" y="86.8" font-family="Liberation Sans" font-weight="700" font-size="8" fill="#222" textLength="52" lengthAdjust="spacingAndGlyphs">DE LAS MADRES!</text>
<rect x="68" y="84" width="9" height="3" fill="#f8e0e8"/><rect x="77" y="84" width="28" height="3" fill="#1a6a2a"/>
<rect x="68" y="89" width="58" height="1.8" fill="#f8e8f0"/>
<rect x="68" y="94" width="10" height="3" fill="#f8e0e8"/><rect x="78" y="94" width="17" height="3" fill="#1a6a2a"/>
<rect x="68" y="99" width="46" height="3.5" fill="#e8d030"/>
<rect x="77" y="106" width="8" height="2.5" fill="#fff8f0"/><rect x="86" y="105" width="28" height="4" fill="#fff8f0"/>
<rect x="72" y="110.5" width="44" height="4" fill="#e8c830"/>
<rect x="76" y="111.5" width="36" height="1.5" fill="#a08020"/>
<!-- footer logos -->
<circle cx="19" cy="144" r="6" fill="#d8e0d0" stroke="#607060" stroke-width="0.8"/><circle cx="19" cy="143" r="3" fill="#c03838"/>
<rect x="27" y="141" width="10" height="2" fill="#208040"/><rect x="27" y="144.5" width="12" height="2.4" fill="#e8c020"/><rect x="39" y="144.5" width="14" height="2.4" fill="#303030"/>
<rect x="72" y="140" width="20" height="3" fill="#c04040"/><rect x="71" y="143.5" width="22" height="3.5" fill="#207040"/><rect x="75" y="147.5" width="14" height="2" fill="#3060a0"/>
<circle cx="112" cy="143" r="2.2" fill="#c02020"/><circle cx="117.5" cy="143" r="2.2" fill="#c02020"/><circle cx="123" cy="143" r="2.2" fill="#c02020"/>
<rect x="99" y="147.5" width="38" height="1.5" fill="#4060a0"/>
</g>
</svg></div>


  <!-- ROW 2 -->
  <div class="card" style="left:309px;top:467px"></div>
  <div class="card" style="left:504px;top:467px"></div>
  <div class="card" style="left:699px;top:467px"></div>
  <div class="card" style="left:894px;top:467px"></div>
  <div class="card" style="left:1089px;top:467px"></div>
  <div id="u1" class="img" style="left:332px;top:475px;width:124px;height:155px;background:#f4f4f4"><svg width="124" height="155" viewBox="0 0 124 155">
<rect width="124" height="155" fill="#fdfdfd"/>
<rect x="64.7" y="93.6" width="3.0" height="2.4" fill="#40b8e0" transform="rotate(119 64.7 93.6)"/><rect x="92.6" y="29.3" width="3.1" height="2.6" fill="#e84a9a" transform="rotate(25 92.6 29.3)"/><rect x="68.3" y="16.2" width="2.7" height="2.6" fill="#40b8e0" transform="rotate(101 68.3 16.2)"/><rect x="118.4" y="24.4" width="5.1" height="2.2" fill="#3a7ae0" transform="rotate(74 118.4 24.4)"/><rect x="62.8" y="39.0" width="3.5" height="2.1" fill="#a83ac8" transform="rotate(9 62.8 39.0)"/><rect x="30.8" y="111.1" width="2.2" height="1.3" fill="#3a7ae0" transform="rotate(35 30.8 111.1)"/><rect x="16.1" y="76.4" width="5.2" height="1.7" fill="#a83ac8" transform="rotate(17 16.1 76.4)"/><rect x="6.3" y="114.9" width="2.1" height="2.4" fill="#f07a2a" transform="rotate(114 6.3 114.9)"/><rect x="90.4" y="35.9" width="2.3" height="2.8" fill="#f07a2a" transform="rotate(4 90.4 35.9)"/><rect x="104.4" y="62.3" width="4.8" height="2.7" fill="#a83ac8" transform="rotate(9 104.4 62.3)"/><rect x="114.8" y="10.8" width="4.9" height="2.3" fill="#e84a9a" transform="rotate(86 114.8 10.8)"/><rect x="67.2" y="63.0" width="2.8" height="2.7" fill="#c8d830" transform="rotate(29 67.2 63.0)"/><rect x="63.9" y="51.6" width="4.6" height="1.6" fill="#a83ac8" transform="rotate(148 63.9 51.6)"/><rect x="120.3" y="69.4" width="5.4" height="2.1" fill="#40b8e0" transform="rotate(76 120.3 69.4)"/><rect x="110.8" y="38.1" width="4.0" height="2.7" fill="#40b8e0" transform="rotate(42 110.8 38.1)"/><rect x="38.9" y="20.0" width="2.7" height="1.9" fill="#f07a2a" transform="rotate(106 38.9 20.0)"/><rect x="3.4" y="54.7" width="5.2" height="2.2" fill="#f2a21a" transform="rotate(140 3.4 54.7)"/><rect x="101.7" y="114.3" width="3.6" height="2.5" fill="#2aa84a" transform="rotate(156 101.7 114.3)"/><rect x="3.7" y="46.4" width="2.4" height="2.7" fill="#40b8e0" transform="rotate(11 3.7 46.4)"/><rect x="120.8" y="30.4" width="3.2" height="2.7" fill="#c8d830" transform="rotate(148 120.8 30.4)"/><rect x="120.9" y="47.0" width="2.0" height="2.4" fill="#a83ac8" transform="rotate(15 120.9 47.0)"/><rect x="92.9" y="92.1" width="4.2" height="2.6" fill="#a83ac8" transform="rotate(58 92.9 92.1)"/><rect x="61.3" y="32.9" width="2.4" height="1.6" fill="#e8c020" transform="rotate(76 61.3 32.9)"/><rect x="97.3" y="9.7" width="5.1" height="2.4" fill="#c8d830" transform="rotate(137 97.3 9.7)"/><rect x="19.1" y="64.9" width="2.6" height="2.1" fill="#a83ac8" transform="rotate(89 19.1 64.9)"/><rect x="108.3" y="32.7" width="5.3" height="1.3" fill="#2aa84a" transform="rotate(30 108.3 32.7)"/><rect x="99.1" y="33.5" width="2.8" height="1.6" fill="#2aa84a" transform="rotate(67 99.1 33.5)"/><rect x="78.8" y="38.9" width="2.3" height="1.3" fill="#40b8e0" transform="rotate(68 78.8 38.9)"/><rect x="21.1" y="108.0" width="2.3" height="1.7" fill="#f07a2a" transform="rotate(58 21.1 108.0)"/><rect x="119.5" y="86.2" width="3.1" height="2.6" fill="#c8d830" transform="rotate(93 119.5 86.2)"/><rect x="17.8" y="12.1" width="5.1" height="2.2" fill="#3a7ae0" transform="rotate(43 17.8 12.1)"/><rect x="26.4" y="100.6" width="4.9" height="1.9" fill="#3a7ae0" transform="rotate(170 26.4 100.6)"/><rect x="109.3" y="1.4" width="4.0" height="1.8" fill="#e8c020" transform="rotate(89 109.3 1.4)"/><rect x="52.5" y="30.1" width="3.1" height="2.6" fill="#f5d21a" transform="rotate(135 52.5 30.1)"/><rect x="108.6" y="109.4" width="2.8" height="2.2" fill="#e84a9a" transform="rotate(13 108.6 109.4)"/><rect x="81.7" y="41.2" width="3.8" height="1.4" fill="#c8d830" transform="rotate(87 81.7 41.2)"/><rect x="108.9" y="89.1" width="2.8" height="1.8" fill="#f07a2a" transform="rotate(60 108.9 89.1)"/><rect x="108.1" y="92.2" width="3.1" height="1.8" fill="#2aa84a" transform="rotate(154 108.1 92.2)"/><rect x="121.2" y="55.9" width="5.4" height="1.5" fill="#e83a3a" transform="rotate(48 121.2 55.9)"/><rect x="106.3" y="33.8" width="2.2" height="2.6" fill="#c8d830" transform="rotate(116 106.3 33.8)"/><rect x="100.3" y="3.9" width="4.5" height="1.7" fill="#c8d830" transform="rotate(165 100.3 3.9)"/><rect x="87.3" y="31.9" width="4.2" height="2.6" fill="#2aa84a" transform="rotate(138 87.3 31.9)"/><rect x="13.3" y="43.1" width="3.7" height="1.7" fill="#f07a2a" transform="rotate(66 13.3 43.1)"/><rect x="27.2" y="69.7" width="4.8" height="1.8" fill="#f5d21a" transform="rotate(153 27.2 69.7)"/><rect x="14.3" y="64.7" width="2.3" height="2.3" fill="#f2a21a" transform="rotate(122 14.3 64.7)"/><rect x="2.3" y="68.8" width="4.7" height="1.4" fill="#2aa84a" transform="rotate(56 2.3 68.8)"/><rect x="79.9" y="35.1" width="3.2" height="1.2" fill="#f2a21a" transform="rotate(69 79.9 35.1)"/><rect x="93.4" y="85.4" width="5.2" height="1.3" fill="#f07a2a" transform="rotate(17 93.4 85.4)"/><rect x="80.2" y="34.4" width="5.3" height="2.4" fill="#c8d830" transform="rotate(150 80.2 34.4)"/><rect x="19.1" y="111.0" width="4.4" height="2.3" fill="#f5d21a" transform="rotate(152 19.1 111.0)"/><rect x="118.1" y="78.7" width="5.1" height="2.4" fill="#f2a21a" transform="rotate(19 118.1 78.7)"/><rect x="94.9" y="92.9" width="3.7" height="1.9" fill="#e8c020" transform="rotate(47 94.9 92.9)"/><rect x="29.6" y="58.2" width="3.4" height="1.4" fill="#2aa84a" transform="rotate(156 29.6 58.2)"/><rect x="103.1" y="76.3" width="3.6" height="2.5" fill="#2aa84a" transform="rotate(112 103.1 76.3)"/><rect x="103.5" y="87.2" width="3.6" height="1.9" fill="#a83ac8" transform="rotate(146 103.5 87.2)"/><rect x="5.7" y="64.9" width="5.3" height="1.2" fill="#e8c020" transform="rotate(97 5.7 64.9)"/><rect x="93.8" y="81.3" width="3.1" height="2.5" fill="#f5d21a" transform="rotate(177 93.8 81.3)"/><rect x="29.6" y="30.8" width="3.5" height="1.9" fill="#f5d21a" transform="rotate(4 29.6 30.8)"/><rect x="17.1" y="58.9" width="4.5" height="2.7" fill="#e83a3a" transform="rotate(160 17.1 58.9)"/><rect x="21.5" y="43.6" width="4.4" height="1.4" fill="#2aa84a" transform="rotate(36 21.5 43.6)"/><rect x="88.4" y="70.4" width="3.1" height="2.0" fill="#e84a9a" transform="rotate(126 88.4 70.4)"/><rect x="11.1" y="12.2" width="3.1" height="1.6" fill="#c8d830" transform="rotate(46 11.1 12.2)"/><rect x="99.7" y="31.1" width="2.6" height="2.0" fill="#2aa84a" transform="rotate(19 99.7 31.1)"/><rect x="95.0" y="26.4" width="2.6" height="2.7" fill="#c8d830" transform="rotate(111 95.0 26.4)"/><rect x="101.2" y="53.3" width="3.5" height="2.0" fill="#f07a2a" transform="rotate(105 101.2 53.3)"/><rect x="77.4" y="33.0" width="4.0" height="1.8" fill="#e83a3a" transform="rotate(28 77.4 33.0)"/><rect x="20.3" y="84.7" width="3.2" height="2.8" fill="#f07a2a" transform="rotate(42 20.3 84.7)"/><rect x="16.5" y="112.0" width="2.1" height="2.4" fill="#3a7ae0" transform="rotate(142 16.5 112.0)"/><rect x="10.5" y="68.0" width="3.8" height="2.7" fill="#f2a21a" transform="rotate(146 10.5 68.0)"/><rect x="39.4" y="15.6" width="5.0" height="2.7" fill="#c8d830" transform="rotate(41 39.4 15.6)"/>
<path d="M1.5 15 C4 20 9 21 11 15" stroke="#e8602a" stroke-width="2" fill="none"/>
<rect x="73" y="1" width="12" height="5" fill="#f4e060" opacity="0.8"/>
<rect x="102" y="2" width="12" height="2.5" fill="#e84aa0" transform="rotate(-10 102 2)"/>
<rect x="103" y="32" width="11" height="5" fill="#f8d020" transform="rotate(-15 103 32)"/>
<rect x="0" y="72" width="15" height="5" fill="#3aa84a" transform="rotate(25 0 72)"/>
<rect x="0" y="53" width="6" height="8" fill="#9ad08a" opacity="0.6"/>
<path d="M114 71 C117 68 121 70 119 76" stroke="#e8d830" stroke-width="1.8" fill="none"/>
<rect x="117" y="96" width="7" height="3" fill="#3aa84a"/>
<rect x="0" y="22" width="8" height="3" fill="#f4c040"/>
<rect x="112" y="45" width="7" height="2" fill="#e8602a"/>
<path d="M38 88 C40 84 44 85 44 90" stroke="#2aa84a" stroke-width="1.5" fill="none"/>

<!-- logo -->
<text x="53" y="57" font-family="Liberation Sans" font-weight="700" font-size="13" fill="#e8e8e8" stroke="#707070" stroke-width="0.6" textLength="19" lengthAdjust="spacingAndGlyphs">25</text>
<path d="M42 62 C46 54 56 54 60 58 C54 61 48 63 42 62z" fill="#3aa040"/>
<path d="M60 60 C68 54 84 56 88 68 C80 72 70 70 60 60z" fill="#8ad060" stroke="#2a9a40" stroke-width="1.2"/>
<ellipse cx="48" cy="72" rx="5.5" ry="8" fill="#8a4020" transform="rotate(-20 48 72)"/>
<path d="M46 66 L50 78" stroke="#c07040" stroke-width="0.8"/>
<text x="55" y="66" font-family="Liberation Serif" font-style="italic" font-weight="700" font-size="8" fill="#2a9a40" textLength="18" lengthAdjust="spacingAndGlyphs">Vive</text>
<text x="54" y="81" font-family="Liberation Sans" font-weight="700" font-size="11" fill="#f4c820" stroke="#6a5010" stroke-width="0.5" textLength="32" lengthAdjust="spacingAndGlyphs">FIESTAS</text>
<text x="49" y="88" font-family="Liberation Sans" font-weight="700" font-size="5.5" fill="#2a9a40" textLength="37" lengthAdjust="spacingAndGlyphs">VALLE HERMOSO</text>
<rect x="50" y="89.5" width="32" height="4.5" fill="#ffffff" stroke="#303040" stroke-width="0.8"/>
<rect x="53" y="91" width="26" height="1.4" fill="#505060"/>
<rect x="40" y="94.5" width="35.4" height="3.5" fill="#2a80e0"/>
<rect x="20" y="99" width="84" height="2" fill="#404050"/>
<rect x="21" y="101.5" width="77.6" height="6.5" fill="#1e2a6a"/>
<rect x="27" y="104" width="66" height="1.4" fill="#c8d0f0"/>
<path d="M6 104 L9 100 L12 103 L15 99 L18 103 L21 100 V108 H6z" fill="#c8c8c8"/>
<path d="M103 104 L106 100 L109 103 L112 99 L115 103 L118 100 V108 H103z" fill="#c8c8c8"/>
<rect x="33" y="111" width="58" height="2" fill="#606068"/>
<rect x="44" y="116" width="30" height="1.6" fill="#808080"/>
<rect x="0" y="118" width="1.5" height="37" fill="#2a9a40"/><rect x="122.5" y="118" width="1.5" height="37" fill="#2a9a40"/>
<rect x="0" y="152.5" width="124" height="2.5" fill="#2a9a40"/>
<circle cx="22" cy="131" r="5.5" fill="#d8e0d0" stroke="#607060" stroke-width="0.8"/><circle cx="22" cy="130" r="2.8" fill="#c03838"/>
<rect x="17" y="140" width="12" height="1.5" fill="#303030"/><rect x="9" y="143.5" width="13" height="2" fill="#e8c020"/><rect x="22" y="143.5" width="18" height="2" fill="#303030"/>
<rect x="60" y="123.6" width="16.5" height="5" fill="#2a7ae0"/>
<rect x="42" y="126" width="16" height="1.5" fill="#505050"/>
<text x="82" y="132" font-family="Liberation Serif" font-style="italic" font-weight="700" font-size="10" fill="#1a7a2a" stroke="#1a7a2a" stroke-width="0.3">LUIS</text>
<path d="M82 135 C90 130 100 136 110 132" stroke="#2a8a3a" stroke-width="1.2" fill="none"/>
<rect x="86" y="139" width="22" height="2.5" fill="#303030"/>
<rect x="44" y="146" width="32" height="1.2" fill="#909090"/>
</svg></div>
  <div id="u2" class="img" style="left:512px;top:523px;width:155px;height:59px;background:#70806a"><svg width="155" height="59" viewBox="0 0 155 59">
<defs>
<linearGradient id="u2w" x1="0" y1="0" x2="0" y2="1"><stop offset="0" stop-color="#7a9a98"/><stop offset="1" stop-color="#58b0c0"/></linearGradient>
<filter id="u2b"><feGaussianBlur stdDeviation="0.4"/></filter>
</defs>
<g filter="url(#u2b)">
<rect width="155" height="59" fill="#b8bcbc"/>
<rect width="72" height="6" fill="#c8d8e0"/>
<path d="M0 3 C20 2 40 1 72 3 V24 H0z" fill="#2e4a2c"/>
<rect y="20" width="72" height="20" fill="#7a8a80"/>
<rect x="0.0" y="16.1" width="3.1" height="10.0" fill="#e8e8e8"/><circle cx="1.5" cy="13.6" r="1.3" fill="#5a3a2a"/><rect x="3.3" y="15.6" width="3.5" height="11.3" fill="#f0f0f0"/><circle cx="4.8" cy="14.4" r="1.3" fill="#5a3a2a"/><rect x="7.3" y="17.7" width="3.1" height="11.4" fill="#e8e8e8"/><circle cx="8.8" cy="15.0" r="1.3" fill="#5a3a2a"/><rect x="11.7" y="16.2" width="3.9" height="10.9" fill="#f0f0f0"/><circle cx="13.2" cy="13.7" r="1.3" fill="#5a3a2a"/><rect x="15.2" y="16.2" width="3.7" height="9.5" fill="#2a9a48"/><circle cx="16.7" cy="13.6" r="1.3" fill="#5a3a2a"/><rect x="18.7" y="16.5" width="3.5" height="13.5" fill="#2a9a48"/><circle cx="20.2" cy="14.7" r="1.3" fill="#5a3a2a"/><rect x="21.9" y="16.6" width="2.6" height="12.5" fill="#2a9a48"/><circle cx="23.4" cy="13.8" r="1.3" fill="#5a3a2a"/><rect x="26.7" y="17.2" width="3.8" height="10.4" fill="#30a050"/><circle cx="28.2" cy="14.2" r="1.3" fill="#5a3a2a"/><rect x="31.4" y="15.5" width="3.4" height="11.7" fill="#e8e8e8"/><circle cx="32.9" cy="14.1" r="1.3" fill="#5a3a2a"/><rect x="35.1" y="16.5" width="2.8" height="9.8" fill="#30a050"/><circle cx="36.6" cy="14.6" r="1.3" fill="#5a3a2a"/><rect x="39.1" y="17.4" width="3.8" height="13.6" fill="#2a9a48"/><circle cx="40.6" cy="14.6" r="1.3" fill="#5a3a2a"/><rect x="42.8" y="15.9" width="2.8" height="9.2" fill="#2a9a48"/><circle cx="44.3" cy="14.0" r="1.3" fill="#5a3a2a"/><rect x="46.4" y="15.5" width="3.1" height="9.8" fill="#30a050"/><circle cx="47.9" cy="14.8" r="1.3" fill="#5a3a2a"/><rect x="51.4" y="17.9" width="2.7" height="9.6" fill="#e8e8e8"/><circle cx="52.9" cy="15.1" r="1.3" fill="#5a3a2a"/><rect x="55.1" y="16.7" width="3.9" height="9.7" fill="#e8e8e8"/><circle cx="56.6" cy="14.6" r="1.3" fill="#5a3a2a"/><rect x="59.0" y="16.8" width="2.9" height="9.5" fill="#2a9a48"/><circle cx="60.5" cy="13.7" r="1.3" fill="#5a3a2a"/><rect x="62.2" y="16.6" width="2.7" height="13.7" fill="#f0f0f0"/><circle cx="63.7" cy="14.5" r="1.3" fill="#5a3a2a"/><rect x="65.5" y="15.2" width="2.5" height="9.7" fill="#f0f0f0"/><circle cx="67.0" cy="14.3" r="1.3" fill="#5a3a2a"/><rect x="69.6" y="16.1" width="3.9" height="9.0" fill="#d83838"/><circle cx="71.1" cy="15.2" r="1.3" fill="#5a3a2a"/>
<rect y="36" width="72" height="20" fill="#c4c4c0"/>
<!-- big dress -->
<path d="M20 20 C24 12 46 12 50 20 C52 28 46 34 35 34 C24 34 18 28 20 20z" fill="#d83030"/>
<ellipse cx="35" cy="23" rx="10" ry="8" fill="#ececec"/>
<ellipse cx="35" cy="23" rx="6.5" ry="5" fill="#3a9a48"/>
<ellipse cx="35" cy="23" rx="4" ry="3" fill="#f4f4f4"/>
<circle cx="34" cy="8.5" r="2.3" fill="#5a3020"/><rect x="32.5" y="10.5" width="3" height="5" fill="#f0e0e0"/>
<rect x="52" y="16" width="10" height="10" fill="#d83838"/><rect x="54" y="26" width="6" height="10" fill="#e8e8e8"/><circle cx="57" cy="14" r="2.2" fill="#5a3020"/>
<ellipse cx="4.8" cy="41.2" rx="5.9" ry="5.5" fill="#38a858"/><rect x="3.8" y="32.2" width="2.5" height="6" fill="#f0f0f0"/><circle cx="4.8" cy="31.2" r="1.4" fill="#4a3020"/><rect x="3.8" y="45.2" width="1.3" height="6" fill="#e8e8e8"/><ellipse cx="10.9" cy="46.8" rx="4.9" ry="4.2" fill="#38a858"/><rect x="9.9" y="37.8" width="2.5" height="6" fill="#f0f0f0"/><circle cx="10.9" cy="36.8" r="1.4" fill="#4a3020"/><rect x="9.9" y="50.8" width="1.3" height="6" fill="#e8e8e8"/><ellipse cx="19.0" cy="43.8" rx="4.3" ry="4.2" fill="#30a050"/><rect x="18.0" y="34.8" width="2.5" height="6" fill="#f0f0f0"/><circle cx="19.0" cy="33.8" r="1.4" fill="#4a3020"/><rect x="18.0" y="47.8" width="1.3" height="6" fill="#e8e8e8"/><ellipse cx="26.8" cy="45.3" rx="5.0" ry="4.2" fill="#30a050"/><rect x="25.8" y="36.3" width="2.5" height="6" fill="#f0f0f0"/><circle cx="26.8" cy="35.3" r="1.4" fill="#4a3020"/><rect x="25.8" y="49.3" width="1.3" height="6" fill="#e8e8e8"/><ellipse cx="34.1" cy="45.9" rx="4.9" ry="4.1" fill="#2a9a48"/><rect x="33.1" y="36.9" width="2.5" height="6" fill="#f0f0f0"/><circle cx="34.1" cy="35.9" r="1.4" fill="#4a3020"/><rect x="33.1" y="49.9" width="1.3" height="6" fill="#e8e8e8"/><ellipse cx="41.4" cy="41.6" rx="5.5" ry="5.4" fill="#2a9a48"/><rect x="40.4" y="32.6" width="2.5" height="6" fill="#f0f0f0"/><circle cx="41.4" cy="31.6" r="1.4" fill="#4a3020"/><rect x="40.4" y="45.6" width="1.3" height="6" fill="#e8e8e8"/><ellipse cx="49.3" cy="46.0" rx="5.1" ry="6.0" fill="#38a858"/><rect x="48.3" y="37.0" width="2.5" height="6" fill="#f0f0f0"/><circle cx="49.3" cy="36.0" r="1.4" fill="#4a3020"/><rect x="48.3" y="50.0" width="1.3" height="6" fill="#e8e8e8"/><ellipse cx="56.5" cy="42.9" rx="4.8" ry="5.0" fill="#38a858"/><rect x="55.5" y="33.9" width="2.5" height="6" fill="#f0f0f0"/><circle cx="56.5" cy="32.9" r="1.4" fill="#4a3020"/><rect x="55.5" y="46.9" width="1.3" height="6" fill="#e8e8e8"/><ellipse cx="63.0" cy="44.7" rx="5.8" ry="5.5" fill="#30a050"/><rect x="62.0" y="35.7" width="2.5" height="6" fill="#f0f0f0"/><circle cx="63.0" cy="34.7" r="1.4" fill="#4a3020"/><rect x="62.0" y="48.7" width="1.3" height="6" fill="#e8e8e8"/>
<!-- band photo -->
<rect x="72" y="0.7" width="36.7" height="37.3" fill="#dce6f0"/>
<rect x="71.0" y="16.0" width="7" height="10" fill="#2a70c8"/><circle cx="74.5" cy="14.0" r="2.4" fill="#2a1a18"/><circle cx="74.5" cy="15.0" r="1.6" fill="#b08060"/><rect x="76.0" y="11.0" width="7" height="10" fill="#f0f0f8"/><circle cx="79.5" cy="9.0" r="2.4" fill="#2a1a18"/><circle cx="79.5" cy="10.0" r="1.6" fill="#b08060"/><rect x="81.0" y="18.0" width="7" height="10" fill="#e03838"/><circle cx="84.5" cy="16.0" r="2.4" fill="#2a1a18"/><circle cx="84.5" cy="17.0" r="1.6" fill="#b08060"/><rect x="86.0" y="10.0" width="7" height="10" fill="#f4f4f8"/><circle cx="89.5" cy="8.0" r="2.4" fill="#2a1a18"/><circle cx="89.5" cy="9.0" r="1.6" fill="#b08060"/><rect x="91.0" y="15.0" width="7" height="10" fill="#d83838"/><circle cx="94.5" cy="13.0" r="2.4" fill="#2a1a18"/><circle cx="94.5" cy="14.0" r="1.6" fill="#b08060"/><rect x="96.0" y="12.0" width="7" height="10" fill="#e8ecf4"/><circle cx="99.5" cy="10.0" r="2.4" fill="#2a1a18"/><circle cx="99.5" cy="11.0" r="1.6" fill="#b08060"/><rect x="100.0" y="17.0" width="7" height="10" fill="#2a78d0"/><circle cx="103.5" cy="15.0" r="2.4" fill="#2a1a18"/><circle cx="103.5" cy="16.0" r="1.6" fill="#b08060"/><rect x="74.0" y="24.0" width="7" height="10" fill="#d83838"/><circle cx="77.5" cy="22.0" r="2.4" fill="#2a1a18"/><circle cx="77.5" cy="23.0" r="1.6" fill="#b08060"/><rect x="85.0" y="24.0" width="7" height="10" fill="#e84040"/><circle cx="88.5" cy="22.0" r="2.4" fill="#2a1a18"/><circle cx="88.5" cy="23.0" r="1.6" fill="#b08060"/><rect x="94.0" y="23.0" width="7" height="10" fill="#2a70c8"/><circle cx="97.5" cy="21.0" r="2.4" fill="#2a1a18"/><circle cx="97.5" cy="22.0" r="1.6" fill="#b08060"/>
<path d="M75 30 C80 27 96 27 104 30 L104 37 L75 37z" fill="#f0f4f8"/>
<text x="76" y="36" font-family="Liberation Serif" font-style="italic" font-weight="700" font-size="9" fill="#d82020" stroke="#d82020" stroke-width="0.3" textLength="28" lengthAdjust="spacingAndGlyphs">Cañaveral</text>
<!-- right -->
<rect x="108.7" y="0" width="46.3" height="59" fill="url(#u2w)"/>
<rect x="108.7" y="0" width="46.3" height="5" fill="#d0d8d8"/>
<path d="M108.7 4 C125 3 140 4 155 6 V24 H108.7z" fill="#5a7a6a"/>
<text x="118.5" y="17.5" font-family="Liberation Sans" font-weight="700" font-size="14" fill="#f4f4f4" stroke="#f4f4f4" stroke-width="0.3" textLength="17.5" lengthAdjust="spacingAndGlyphs">25</text>
<ellipse cx="123" cy="24.5" rx="5" ry="6.5" fill="#8a4a20" transform="rotate(-25 123 24.5)"/>
<path d="M113 19 L120 16 L118 21z" fill="#3aa040"/>
<path d="M128 20 C134 16 144 16 148 24 C142 28 134 26 128 20z" fill="#2a9a48" opacity="0.6" stroke="#3aa040" stroke-width="1.4"/>
<text x="113" y="35.5" font-family="Liberation Sans" font-weight="700" font-size="10.5" fill="#f2d020" stroke="#f2d020" stroke-width="0.3" textLength="29" lengthAdjust="spacingAndGlyphs">FIESTAS</text>
<rect x="112" y="37.5" width="32" height="2.2" fill="#3a9a40"/>
<rect x="118" y="42" width="24" height="3.5" fill="#e0d8d8" opacity="0.8"/>
<!-- bottom overlay -->
<rect x="70" y="38" width="38.7" height="19" fill="#7aaab8"/>
<text x="69.5" y="44.8" font-family="Liberation Sans" font-weight="700" font-size="7" fill="#f0d020" textLength="12" lengthAdjust="spacingAndGlyphs">MSc.</text>
<text x="83" y="45" font-family="Liberation Sans" font-weight="700" font-size="8" fill="#f0d020" textLength="24" lengthAdjust="spacingAndGlyphs">PATRICIO</text>
<text x="83" y="51.5" font-family="Liberation Sans" font-weight="700" font-size="8" fill="#f8f8f8" stroke="#f8f8f8" stroke-width="0.3" textLength="47.5" lengthAdjust="spacingAndGlyphs">PAREDES</text>
<rect x="62" y="54" width="14" height="2" fill="#e8c020"/><rect x="76" y="54" width="16" height="2" fill="#3a8040"/>
<rect x="0" y="55" width="155" height="1.6" fill="#50a8d8"/>
<rect y="56.6" width="155" height="2.4" fill="#f2cc10"/>
</g>
</svg></div>
  <div id="u3" class="img" style="left:707px;top:500px;width:155px;height:105px;background:#f2f2f2"><svg width="155" height="105" viewBox="0 0 155 105">
<defs><pattern id="u3ck" width="4" height="4" patternUnits="userSpaceOnUse"><rect width="4" height="4" fill="#ffffff"/><rect width="2" height="2" fill="#e6e6e6"/><rect x="2" y="2" width="2" height="2" fill="#e6e6e6"/></pattern>
<filter id="u3b"><feGaussianBlur stdDeviation="0.9"/></filter></defs>
<rect width="155" height="105" fill="url(#u3ck)"/>
<rect width="155" height="3" fill="#ffffff"/><rect x="70.3" y="58.9" width="3.6" height="1.4" fill="#40b8e0" transform="rotate(154 70.3 58.9)"/><rect x="30.7" y="82.8" width="2.6" height="1.5" fill="#f5d21a" transform="rotate(17 30.7 82.8)"/><rect x="47.8" y="12.9" width="3.1" height="1.0" fill="#e84a9a" transform="rotate(174 47.8 12.9)"/><rect x="100.7" y="64.3" width="1.9" height="1.0" fill="#40b8e0" transform="rotate(11 100.7 64.3)"/><rect x="7.4" y="90.2" width="2.9" height="1.6" fill="#a83ac8" transform="rotate(79 7.4 90.2)"/><rect x="129.2" y="54.9" width="3.0" height="1.4" fill="#7a3ab8" transform="rotate(15 129.2 54.9)"/><rect x="100.9" y="43.9" width="2.8" height="1.7" fill="#f2a21a" transform="rotate(127 100.9 43.9)"/><rect x="49.6" y="26.5" width="2.2" height="1.1" fill="#f2a21a" transform="rotate(72 49.6 26.5)"/><rect x="129.8" y="41.9" width="3.7" height="1.7" fill="#e83a3a" transform="rotate(38 129.8 41.9)"/><rect x="109.0" y="45.1" width="2.8" height="1.2" fill="#7a3ab8" transform="rotate(49 109.0 45.1)"/><rect x="15.2" y="36.6" width="3.7" height="1.6" fill="#f2a21a" transform="rotate(24 15.2 36.6)"/><rect x="75.5" y="70.8" width="1.9" height="1.4" fill="#c02a8a" transform="rotate(139 75.5 70.8)"/><rect x="65.3" y="41.6" width="2.4" height="1.8" fill="#e83a3a" transform="rotate(49 65.3 41.6)"/><rect x="148.6" y="82.7" width="2.2" height="1.7" fill="#2aa84a" transform="rotate(34 148.6 82.7)"/><rect x="152.4" y="63.0" width="2.8" height="1.0" fill="#f5d21a" transform="rotate(38 152.4 63.0)"/><rect x="41.0" y="79.7" width="2.3" height="1.2" fill="#f2a21a" transform="rotate(13 41.0 79.7)"/><rect x="33.5" y="66.4" width="1.5" height="1.3" fill="#c8d830" transform="rotate(82 33.5 66.4)"/><rect x="146.8" y="51.4" width="2.8" height="1.7" fill="#f5d21a" transform="rotate(113 146.8 51.4)"/><rect x="48.9" y="26.4" width="2.9" height="1.6" fill="#f5d21a" transform="rotate(133 48.9 26.4)"/><rect x="144.0" y="23.3" width="3.7" height="1.7" fill="#c8d830" transform="rotate(14 144.0 23.3)"/><rect x="9.2" y="14.7" width="2.1" height="1.6" fill="#e84a9a" transform="rotate(46 9.2 14.7)"/><rect x="126.4" y="62.5" width="2.2" height="1.1" fill="#c02a8a" transform="rotate(176 126.4 62.5)"/><rect x="21.1" y="51.0" width="3.0" height="1.5" fill="#f2a21a" transform="rotate(50 21.1 51.0)"/><rect x="140.5" y="24.0" width="1.5" height="1.2" fill="#f07a2a" transform="rotate(45 140.5 24.0)"/><rect x="9.0" y="31.6" width="2.7" height="1.8" fill="#f2a21a" transform="rotate(65 9.0 31.6)"/><rect x="136.5" y="100.1" width="3.1" height="1.5" fill="#f5d21a" transform="rotate(106 136.5 100.1)"/><rect x="141.5" y="50.5" width="2.3" height="1.2" fill="#e83a3a" transform="rotate(4 141.5 50.5)"/><rect x="98.1" y="51.3" width="3.2" height="1.3" fill="#f2a21a" transform="rotate(14 98.1 51.3)"/><rect x="84.5" y="76.2" width="3.6" height="1.6" fill="#c02a8a" transform="rotate(23 84.5 76.2)"/><rect x="147.5" y="37.5" width="1.7" height="1.4" fill="#f2a21a" transform="rotate(157 147.5 37.5)"/><rect x="65.0" y="81.5" width="3.5" height="1.5" fill="#c8d830" transform="rotate(119 65.0 81.5)"/><rect x="64.9" y="36.4" width="3.6" height="1.6" fill="#f07a2a" transform="rotate(79 64.9 36.4)"/><rect x="128.6" y="12.2" width="1.6" height="1.5" fill="#f07a2a" transform="rotate(4 128.6 12.2)"/><rect x="146.6" y="15.1" width="3.0" height="1.4" fill="#e83a3a" transform="rotate(66 146.6 15.1)"/><rect x="23.6" y="64.0" width="2.7" height="1.6" fill="#a83ac8" transform="rotate(119 23.6 64.0)"/><rect x="68.7" y="91.4" width="2.3" height="1.5" fill="#2aa84a" transform="rotate(114 68.7 91.4)"/><rect x="123.4" y="78.0" width="2.0" height="1.2" fill="#2aa84a" transform="rotate(105 123.4 78.0)"/><rect x="128.4" y="87.2" width="3.1" height="1.8" fill="#3a7ae0" transform="rotate(148 128.4 87.2)"/><rect x="19.0" y="50.2" width="3.6" height="1.7" fill="#e84a9a" transform="rotate(113 19.0 50.2)"/><rect x="76.6" y="34.9" width="3.4" height="1.8" fill="#f07a2a" transform="rotate(58 76.6 34.9)"/><rect x="127.1" y="31.3" width="2.9" height="1.5" fill="#3a7ae0" transform="rotate(103 127.1 31.3)"/><rect x="48.7" y="81.6" width="1.5" height="1.1" fill="#f07a2a" transform="rotate(34 48.7 81.6)"/><rect x="118.2" y="30.1" width="3.3" height="1.6" fill="#7a3ab8" transform="rotate(21 118.2 30.1)"/><rect x="18.5" y="56.5" width="3.0" height="1.3" fill="#f2a21a" transform="rotate(123 18.5 56.5)"/><rect x="32.1" y="50.6" width="1.9" height="1.0" fill="#f07a2a" transform="rotate(96 32.1 50.6)"/><rect x="7.5" y="26.2" width="3.3" height="1.4" fill="#40b8e0" transform="rotate(90 7.5 26.2)"/><rect x="152.5" y="19.6" width="3.1" height="1.2" fill="#e84a9a" transform="rotate(168 152.5 19.6)"/><rect x="96.5" y="93.2" width="2.4" height="1.5" fill="#40b8e0" transform="rotate(143 96.5 93.2)"/><rect x="144.6" y="49.4" width="3.0" height="1.2" fill="#c02a8a" transform="rotate(156 144.6 49.4)"/><rect x="122.5" y="94.6" width="1.8" height="1.2" fill="#e84a9a" transform="rotate(176 122.5 94.6)"/><rect x="149.6" y="56.6" width="3.3" height="1.3" fill="#c02a8a" transform="rotate(154 149.6 56.6)"/><rect x="85.1" y="79.3" width="2.6" height="1.0" fill="#f2a21a" transform="rotate(77 85.1 79.3)"/><rect x="7.3" y="56.2" width="3.1" height="1.7" fill="#f07a2a" transform="rotate(27 7.3 56.2)"/><rect x="80.0" y="74.9" width="3.4" height="1.6" fill="#f07a2a" transform="rotate(104 80.0 74.9)"/><rect x="106.0" y="78.3" width="2.5" height="1.4" fill="#c02a8a" transform="rotate(101 106.0 78.3)"/><rect x="26.8" y="54.4" width="3.6" height="1.2" fill="#7a3ab8" transform="rotate(69 26.8 54.4)"/><rect x="129.6" y="92.3" width="2.0" height="1.7" fill="#40b8e0" transform="rotate(94 129.6 92.3)"/><rect x="88.5" y="23.7" width="2.7" height="1.4" fill="#c8d830" transform="rotate(68 88.5 23.7)"/><rect x="83.3" y="8.3" width="2.8" height="1.8" fill="#f2a21a" transform="rotate(88 83.3 8.3)"/><rect x="106.3" y="10.5" width="2.5" height="1.8" fill="#e84a9a" transform="rotate(48 106.3 10.5)"/><rect x="125.2" y="92.3" width="2.6" height="1.3" fill="#2aa84a" transform="rotate(76 125.2 92.3)"/><rect x="6.4" y="29.5" width="3.1" height="1.8" fill="#e83a3a" transform="rotate(35 6.4 29.5)"/><rect x="36.3" y="71.3" width="2.2" height="1.3" fill="#c8d830" transform="rotate(90 36.3 71.3)"/><rect x="77.5" y="61.1" width="3.5" height="1.5" fill="#c02a8a" transform="rotate(36 77.5 61.1)"/><rect x="82.1" y="46.8" width="2.4" height="1.3" fill="#40b8e0" transform="rotate(111 82.1 46.8)"/><rect x="83.3" y="88.7" width="2.7" height="1.2" fill="#2aa84a" transform="rotate(153 83.3 88.7)"/><rect x="94.4" y="88.0" width="2.0" height="1.6" fill="#a83ac8" transform="rotate(162 94.4 88.0)"/><rect x="49.7" y="34.9" width="3.6" height="1.2" fill="#2aa84a" transform="rotate(160 49.7 34.9)"/><rect x="22.2" y="27.5" width="3.2" height="1.2" fill="#f2a21a" transform="rotate(78 22.2 27.5)"/><rect x="144.1" y="57.2" width="3.1" height="1.2" fill="#7a3ab8" transform="rotate(123 144.1 57.2)"/><rect x="4.7" y="23.7" width="3.1" height="1.7" fill="#a83ac8" transform="rotate(21 4.7 23.7)"/><rect x="78.4" y="78.3" width="2.7" height="1.5" fill="#2aa84a" transform="rotate(145 78.4 78.3)"/><rect x="74.8" y="6.4" width="2.9" height="1.7" fill="#f07a2a" transform="rotate(26 74.8 6.4)"/><rect x="29.9" y="24.0" width="3.4" height="1.8" fill="#7a3ab8" transform="rotate(17 29.9 24.0)"/><rect x="117.5" y="36.0" width="2.6" height="1.4" fill="#e84a9a" transform="rotate(38 117.5 36.0)"/><rect x="58.3" y="66.1" width="1.6" height="1.2" fill="#e84a9a" transform="rotate(82 58.3 66.1)"/><rect x="113.6" y="43.7" width="1.9" height="1.1" fill="#40b8e0" transform="rotate(143 113.6 43.7)"/><rect x="50.9" y="12.3" width="3.5" height="1.7" fill="#e84a9a" transform="rotate(103 50.9 12.3)"/><rect x="30.8" y="61.3" width="2.3" height="1.6" fill="#3a7ae0" transform="rotate(164 30.8 61.3)"/><rect x="114.4" y="80.2" width="3.4" height="1.3" fill="#a83ac8" transform="rotate(158 114.4 80.2)"/><rect x="106.9" y="79.2" width="3.3" height="1.3" fill="#c02a8a" transform="rotate(33 106.9 79.2)"/><rect x="122.4" y="33.6" width="1.7" height="1.7" fill="#7a3ab8" transform="rotate(162 122.4 33.6)"/><rect x="9.5" y="30.8" width="3.7" height="1.2" fill="#2aa84a" transform="rotate(119 9.5 30.8)"/><rect x="88.0" y="56.2" width="2.4" height="1.8" fill="#7a3ab8" transform="rotate(38 88.0 56.2)"/><rect x="20.1" y="42.7" width="2.8" height="1.1" fill="#f2a21a" transform="rotate(133 20.1 42.7)"/><rect x="40.8" y="43.4" width="1.6" height="1.2" fill="#e84a9a" transform="rotate(2 40.8 43.4)"/><rect x="41.0" y="31.0" width="2.3" height="1.4" fill="#e84a9a" transform="rotate(174 41.0 31.0)"/><rect x="87.8" y="101.5" width="3.4" height="1.1" fill="#c8d830" transform="rotate(120 87.8 101.5)"/><rect x="146.3" y="41.9" width="3.7" height="1.3" fill="#f5d21a" transform="rotate(154 146.3 41.9)"/><rect x="83.8" y="62.5" width="2.5" height="1.4" fill="#3a7ae0" transform="rotate(95 83.8 62.5)"/><rect x="92.3" y="39.8" width="2.2" height="1.5" fill="#40b8e0" transform="rotate(167 92.3 39.8)"/><rect x="102.2" y="77.3" width="1.6" height="1.6" fill="#c8d830" transform="rotate(8 102.2 77.3)"/><rect x="25.6" y="78.0" width="2.4" height="1.7" fill="#c02a8a" transform="rotate(72 25.6 78.0)"/><rect x="89.8" y="74.9" width="2.2" height="1.6" fill="#2aa84a" transform="rotate(77 89.8 74.9)"/><rect x="81.0" y="95.9" width="2.6" height="1.8" fill="#2aa84a" transform="rotate(109 81.0 95.9)"/><rect x="19.4" y="65.2" width="2.5" height="1.2" fill="#e83a3a" transform="rotate(64 19.4 65.2)"/><rect x="25.4" y="39.6" width="1.8" height="1.3" fill="#c8d830" transform="rotate(47 25.4 39.6)"/><rect x="89.9" y="45.1" width="3.3" height="1.4" fill="#f5d21a" transform="rotate(171 89.9 45.1)"/><rect x="112.9" y="27.4" width="1.8" height="1.7" fill="#40b8e0" transform="rotate(112 112.9 27.4)"/><rect x="56.2" y="30.6" width="3.1" height="1.5" fill="#c8d830" transform="rotate(34 56.2 30.6)"/><rect x="44.1" y="27.5" width="3.7" height="1.4" fill="#7a3ab8" transform="rotate(165 44.1 27.5)"/><rect x="42.9" y="45.7" width="2.9" height="1.1" fill="#40b8e0" transform="rotate(50 42.9 45.7)"/><rect x="116.1" y="93.5" width="1.9" height="1.2" fill="#a83ac8" transform="rotate(87 116.1 93.5)"/><rect x="55.5" y="37.1" width="2.6" height="1.1" fill="#f2a21a" transform="rotate(144 55.5 37.1)"/><rect x="69.5" y="84.6" width="3.4" height="1.6" fill="#f07a2a" transform="rotate(76 69.5 84.6)"/><rect x="41.0" y="83.4" width="2.3" height="1.5" fill="#c8d830" transform="rotate(59 41.0 83.4)"/><rect x="84.8" y="77.1" width="3.6" height="1.3" fill="#a83ac8" transform="rotate(105 84.8 77.1)"/><rect x="71.8" y="35.8" width="2.8" height="1.3" fill="#c8d830" transform="rotate(87 71.8 35.8)"/><rect x="105.5" y="33.3" width="3.3" height="1.1" fill="#2aa84a" transform="rotate(164 105.5 33.3)"/><rect x="93.2" y="72.1" width="2.6" height="1.6" fill="#a83ac8" transform="rotate(51 93.2 72.1)"/><rect x="23.6" y="39.1" width="3.2" height="1.3" fill="#f2a21a" transform="rotate(58 23.6 39.1)"/><rect x="68.6" y="62.3" width="3.6" height="1.5" fill="#3a7ae0" transform="rotate(79 68.6 62.3)"/><rect x="123.3" y="33.9" width="2.2" height="1.3" fill="#c02a8a" transform="rotate(161 123.3 33.9)"/><rect x="39.5" y="39.4" width="2.3" height="1.3" fill="#e84a9a" transform="rotate(105 39.5 39.4)"/><rect x="122.2" y="76.4" width="2.3" height="1.3" fill="#f5d21a" transform="rotate(151 122.2 76.4)"/><rect x="87.0" y="21.3" width="3.2" height="1.7" fill="#3a7ae0" transform="rotate(146 87.0 21.3)"/><rect x="46.7" y="6.2" width="2.5" height="1.5" fill="#3a7ae0" transform="rotate(142 46.7 6.2)"/><rect x="14.7" y="12.0" width="3.6" height="1.1" fill="#7a3ab8" transform="rotate(118 14.7 12.0)"/><rect x="16.7" y="84.0" width="2.5" height="1.6" fill="#f07a2a" transform="rotate(138 16.7 84.0)"/><rect x="80.8" y="78.9" width="2.4" height="1.3" fill="#a83ac8" transform="rotate(121 80.8 78.9)"/><rect x="76.5" y="56.7" width="3.2" height="1.6" fill="#e83a3a" transform="rotate(74 76.5 56.7)"/><rect x="126.8" y="69.3" width="3.5" height="1.6" fill="#f2a21a" transform="rotate(160 126.8 69.3)"/><rect x="146.6" y="66.7" width="2.7" height="1.6" fill="#f2a21a" transform="rotate(76 146.6 66.7)"/><rect x="65.5" y="18.3" width="3.8" height="1.3" fill="#f5d21a" transform="rotate(58 65.5 18.3)"/><rect x="60.8" y="55.8" width="2.1" height="1.7" fill="#f07a2a" transform="rotate(56 60.8 55.8)"/><rect x="19.3" y="67.5" width="3.3" height="1.1" fill="#e83a3a" transform="rotate(136 19.3 67.5)"/><rect x="4.6" y="51.1" width="3.3" height="1.3" fill="#2aa84a" transform="rotate(33 4.6 51.1)"/><rect x="34.8" y="27.1" width="3.1" height="1.5" fill="#2aa84a" transform="rotate(80 34.8 27.1)"/><rect x="137.1" y="43.4" width="3.6" height="1.7" fill="#7a3ab8" transform="rotate(99 137.1 43.4)"/><rect x="125.4" y="51.0" width="2.1" height="1.7" fill="#a83ac8" transform="rotate(119 125.4 51.0)"/><rect x="118.5" y="13.1" width="2.4" height="1.2" fill="#f5d21a" transform="rotate(144 118.5 13.1)"/><rect x="60.1" y="55.7" width="2.7" height="1.2" fill="#e83a3a" transform="rotate(118 60.1 55.7)"/><rect x="58.1" y="82.1" width="3.1" height="1.5" fill="#f5d21a" transform="rotate(75 58.1 82.1)"/><rect x="118.6" y="18.2" width="3.4" height="1.1" fill="#c02a8a" transform="rotate(179 118.6 18.2)"/><rect x="42.2" y="56.4" width="1.8" height="1.6" fill="#e83a3a" transform="rotate(37 42.2 56.4)"/><rect x="55.1" y="64.3" width="2.7" height="1.7" fill="#c02a8a" transform="rotate(84 55.1 64.3)"/><rect x="146.3" y="61.5" width="3.5" height="1.2" fill="#2aa84a" transform="rotate(75 146.3 61.5)"/><rect x="140.4" y="12.9" width="2.0" height="1.4" fill="#40b8e0" transform="rotate(89 140.4 12.9)"/><rect x="63.2" y="58.5" width="3.8" height="1.5" fill="#f2a21a" transform="rotate(65 63.2 58.5)"/><rect x="71.7" y="98.8" width="3.0" height="1.0" fill="#e84a9a" transform="rotate(128 71.7 98.8)"/><rect x="73.8" y="32.8" width="1.8" height="1.6" fill="#c02a8a" transform="rotate(37 73.8 32.8)"/><rect x="95.0" y="32.5" width="2.4" height="1.4" fill="#3a7ae0" transform="rotate(172 95.0 32.5)"/><rect x="116.0" y="58.4" width="1.7" height="1.2" fill="#e84a9a" transform="rotate(132 116.0 58.4)"/><rect x="51.7" y="96.6" width="3.2" height="1.3" fill="#e84a9a" transform="rotate(17 51.7 96.6)"/><rect x="23.3" y="13.3" width="3.1" height="1.1" fill="#e84a9a" transform="rotate(7 23.3 13.3)"/><rect x="71.9" y="73.0" width="1.7" height="1.0" fill="#f2a21a" transform="rotate(78 71.9 73.0)"/><rect x="118.5" y="37.5" width="3.4" height="1.7" fill="#f5d21a" transform="rotate(117 118.5 37.5)"/><rect x="117.8" y="84.5" width="2.4" height="1.3" fill="#e84a9a" transform="rotate(112 117.8 84.5)"/><rect x="111.8" y="64.1" width="2.2" height="1.6" fill="#2aa84a" transform="rotate(119 111.8 64.1)"/><rect x="53.7" y="67.8" width="1.7" height="1.3" fill="#40b8e0" transform="rotate(60 53.7 67.8)"/><rect x="46.3" y="14.1" width="2.1" height="1.4" fill="#3a7ae0" transform="rotate(99 46.3 14.1)"/><rect x="55.2" y="53.0" width="1.8" height="1.6" fill="#40b8e0" transform="rotate(180 55.2 53.0)"/><rect x="108.7" y="95.7" width="1.6" height="1.5" fill="#f2a21a" transform="rotate(25 108.7 95.7)"/>
<rect x="70" y="10" width="16" height="9" fill="#d8d830" transform="rotate(-30 78 14)" filter="url(#u3b)"/>
<rect x="126" y="14" width="17" height="9" fill="#40a040" transform="rotate(20 134 18)" filter="url(#u3b)"/>
<rect x="123" y="34" width="6.5" height="13" fill="#8050b8" transform="rotate(8 126 40)"/>
<path d="M114 81 C116 90 127 91 129 82" stroke="#e8902a" stroke-width="2.5" fill="none"/>
<rect x="14" y="71" width="12" height="5" fill="#3a9a3a" transform="rotate(30 20 73)"/>
<path d="M12 50 C14 55 18 56 19 60" stroke="#3a9a3a" stroke-width="2.4" fill="none"/>
<rect x="8" y="33" width="9" height="5" fill="#f0c040"/>
<path d="M14 28 C16 33 22 33 24 28" stroke="#d8502a" stroke-width="1.8" fill="none"/>
<path d="M91 39 L100 37 L97 45z" fill="#f0c030"/>
<rect x="60" y="83" width="9" height="8" fill="#f0d060" transform="rotate(-25 64 87)" filter="url(#u3b)"/>
<rect x="109" y="22" width="7" height="4" fill="#3a8ae0" transform="rotate(40 112 24)"/>
<rect x="91" y="17" width="9" height="2.5" fill="#c02a8a" transform="rotate(-8 95 18)"/>
<rect x="54" y="75" width="6" height="4" fill="#7a3ab8" transform="rotate(20 57 77)"/>
<path d="M99 69 C96 72 98 77 101 76" stroke="#e8e030" stroke-width="1.6" fill="none"/>
<rect x="52" y="90" width="7" height="3" fill="#c03aa0"/>
<rect x="40" y="88" width="3" height="6" fill="#e84a3a"/>
<rect x="6" y="92" width="5" height="5" fill="#e84a3a"/>
<rect x="120" y="68" width="8" height="3" fill="#c84a9a"/>
</svg></div>
  <div id="u4" class="img" style="left:925px;top:475px;width:110px;height:155px;background:#f6f6f6"><svg width="110" height="155" viewBox="0 0 110 155">
<defs><radialGradient id="u4p" cx="0.5" cy="0.5" r="0.5"><stop offset="0" stop-color="#e8a0b8"/><stop offset="1" stop-color="#d890a8"/></radialGradient></defs>
<rect width="110" height="155" fill="#fbfbfb"/>
<!-- doves -->
<path d="M8 14 C12 12 14 16 15 18 C17 14 20 11 22 10 C21 16 19 22 14 24 L10 25 L12 21 C9 20 8 17 8 14z" fill="#111"/>
<path d="M102 14 C98 12 96 16 95 18 C93 14 90 11 88 10 C89 16 91 22 96 24 L100 25 L98 21 C101 20 102 17 102 14z" fill="#111"/>
<g stroke="#333" stroke-width="0.4"><path d="M19 12 L23 9 M20 15 L24 14 M88 12 L85 9 M89 15 L85 14"/></g>
<!-- logo -->
<path d="M36 17 C36 10 46 10 46 17z" fill="#222"/><circle cx="41" cy="12" r="3" fill="#fff" stroke="#222" stroke-width="0.8"/>
<path d="M34 17 L48 17 L46 20 L36 20z" fill="#111"/>
<rect x="50" y="11" width="6" height="1.2" fill="#333"/><rect x="50" y="13.5" width="9" height="1.2" fill="#333"/><rect x="50" y="16.5" width="33" height="2.2" fill="#222"/>
<text x="27.5" y="35.2" font-family="Liberation Sans" font-style="italic" font-weight="700" font-size="11.5" fill="#111" stroke="#111" stroke-width="0.35" textLength="56.5" lengthAdjust="spacingAndGlyphs">CONDOLENCIAS</text>
<rect x="19" y="40.5" width="71" height="1" fill="#888"/>
<!-- arches -->
<path d="M0 54 C14 58 21 68 21.4 82 V155" fill="none" stroke="#222" stroke-width="0.9"/>
<path d="M0 60 C10 64 16 72 17 84 V155" fill="none" stroke="#222" stroke-width="0.7"/>
<path d="M110 54 C96 58 89 68 88.6 82 V155" fill="none" stroke="#222" stroke-width="0.9"/>
<path d="M110 60 C100 64 94 72 93 84 V155" fill="none" stroke="#222" stroke-width="0.7"/>
<g fill="#111"><rect x="6.5" y="82" width="2" height="6"/><rect x="5" y="84" width="5" height="1.5"/><rect x="6" y="100" width="4" height="5"/><rect x="7" y="104" width="2" height="5"/><rect x="5" y="132" width="5" height="1.5"/><rect x="6.5" y="130" width="2" height="6"/>
<rect x="101.5" y="82" width="2" height="6"/><rect x="100" y="84" width="5" height="1.5"/><rect x="100" y="100" width="4" height="5"/><rect x="101" y="104" width="2" height="5"/><rect x="100" y="132" width="5" height="1.5"/><rect x="101.5" y="130" width="2" height="6"/></g>
<!-- photo -->
<clipPath id="u4c"><circle cx="55.2" cy="61.3" r="17.7"/></clipPath>
<g clip-path="url(#u4c)">
<rect x="37" y="43" width="37" height="37" fill="#e8c8d0"/>
<rect x="37" y="62" width="37" height="18" fill="#f0eaea"/>
<ellipse cx="55" cy="52" rx="12" ry="4.5" fill="#111"/>
<circle cx="55" cy="57" r="3.5" fill="#a06850"/>
<path d="M46 64 L64 64 L66 80 L44 80z" fill="#e83878"/>
<ellipse cx="55" cy="68" rx="6" ry="4" fill="#2a3a2a"/>
</g>
<text x="43" y="86.5" font-family="Liberation Sans" font-weight="700" font-size="7" fill="#111" stroke="#111" stroke-width="0.2" textLength="23.3" lengthAdjust="spacingAndGlyphs">RAMONA</text>
<text x="45" y="92.5" font-family="Liberation Sans" font-weight="700" font-size="7" fill="#111" stroke="#111" stroke-width="0.2" textLength="20" lengthAdjust="spacingAndGlyphs">ORMAZA</text>
<rect x="30" y="95" width="50" height="0.6" fill="#555"/><rect x="53" y="94" width="4" height="2" fill="#222"/>
<g fill="#9a9a9a"><rect x="26" y="98" width="58" height="1"/><rect x="26" y="100.8" width="58" height="1"/><rect x="26" y="103.6" width="56" height="1"/><rect x="38" y="106.4" width="34" height="1"/>
<rect x="28" y="111" width="54" height="1"/><rect x="30" y="113.8" width="50" height="1"/>
<rect x="26" y="118.5" width="58" height="1"/><rect x="28" y="121.3" width="54" height="1"/>
<rect x="40" y="126" width="30" height="0.9"/><rect x="38" y="128.5" width="34" height="0.9"/>
<rect x="38" y="136" width="34" height="0.9"/></g>
<rect x="54.5" y="141" width="1.5" height="10" fill="#111"/><rect x="51" y="144" width="8.5" height="1.4" fill="#111"/>
</svg>
</div>
  <div id="u5" class="img" style="left:1097px;top:484px;width:154px;height:137px;background:#e8f0e8"><svg width="154" height="137" viewBox="0 0 154 137">
<defs>
<linearGradient id="u5g" x1="0" y1="0" x2="0" y2="1"><stop offset="0" stop-color="#6ab840"/><stop offset="1" stop-color="#3a9a30"/></linearGradient>
<linearGradient id="u5w" x1="0" y1="0" x2="1" y2="1"><stop offset="0" stop-color="#fafafa"/><stop offset="1" stop-color="#eeeeee"/></linearGradient>
</defs>
<rect width="154" height="137" fill="#2a8a30"/>
<rect x="1" y="1" width="152" height="115" fill="url(#u5w)"/>
<path d="M1 1 H50.5 L43.5 115 H1z" fill="url(#u5g)"/>
<path d="M44 20 L52 20 L56 115 L44 115z" fill="#e8e8e8" opacity="0.5"/>
<!-- big man -->
<rect x="9" y="21.3" width="40.5" height="84" fill="#f0b030"/>
<rect x="10.2" y="22.3" width="38.3" height="81.7" fill="#e4e8ee"/>
<ellipse cx="29" cy="48" rx="8.5" ry="11" fill="#b88868"/>
<path d="M20 44 C19 33 39 33 38 44 C36 38 22 38 20 44z" fill="#4a4a4a"/>
<path d="M10.2 70 L22 62 L29 68 L36 62 L48.5 70 V104 H10.2z" fill="#7c9ad0"/>
<path d="M23 63 L35 63 L33 104 L25 104z" fill="#2a3a6a"/>
<rect x="13" y="104" width="32" height="3.5" fill="#1a4a3a"/>
<rect x="16" y="109.5" width="28" height="2" fill="#e0c040"/>
<!-- small photos -->
<g>
<rect x="56.6" y="32.4" width="21.2" height="28.3" fill="#e8a030"/><rect x="57.6" y="33.4" width="19.2" height="22" fill="#e8eaf0"/>
<ellipse cx="67" cy="41" rx="4" ry="5" fill="#6a4030"/><path d="M59 55.4 C60 48 74 48 76 55.4z" fill="#303040"/>
<rect x="56" y="55.4" width="22" height="3.5" fill="#1e2a5a"/><rect x="57" y="59.5" width="20" height="1.5" fill="#555"/>
<rect x="84.9" y="32.4" width="20.1" height="28.3" fill="#e8a030"/><rect x="85.9" y="33.4" width="18.1" height="22" fill="#e8eaf0"/>
<ellipse cx="95" cy="41" rx="4" ry="5" fill="#a07060"/><path d="M87 55.4 C88 48 102 48 104 55.4z" fill="#2a2a3a"/><path d="M93 50 L97 50 L98 55 L92 55z" fill="#e04050"/>
<rect x="84" y="55.4" width="22" height="3.5" fill="#1e2a5a"/><rect x="86" y="59.5" width="18" height="1.5" fill="#555"/>
<rect x="54.6" y="73.8" width="21.2" height="29.2" fill="#e8a030"/><rect x="55.6" y="74.8" width="19.2" height="22" fill="#e8eaf0"/>
<ellipse cx="65" cy="83" rx="4" ry="5" fill="#8a6050"/><path d="M57 96.8 C58 90 72 90 74 96.8z" fill="#505560"/>
<rect x="54" y="96.8" width="22" height="3.5" fill="#1e2a5a"/><rect x="56" y="101" width="18" height="1.5" fill="#555"/>
<rect x="83.9" y="73.8" width="20.1" height="29.2" fill="#e8a030"/><rect x="84.9" y="74.8" width="18.1" height="22" fill="#e8eaf0"/>
<ellipse cx="94" cy="83" rx="4.2" ry="5" fill="#9a6a50"/><path d="M86 96.8 C87 90 101 90 103 96.8z" fill="#2a2a40"/>
<rect x="83" y="96.8" width="22" height="3.5" fill="#1e2a5a"/><rect x="85" y="101" width="18" height="1.5" fill="#555"/>
</g>
<text x="80" y="14" font-family="Liberation Sans" font-weight="700" font-size="8" fill="#1a2240" textLength="40" lengthAdjust="spacingAndGlyphs">INVITACIÓN</text>
<text x="80" y="24.5" font-family="Liberation Sans" font-weight="700" font-size="10" fill="#1a2240" textLength="63" lengthAdjust="spacingAndGlyphs">RENDICIÓN</text>
<text x="80" y="33" font-family="Liberation Sans" font-weight="700" font-size="9" fill="#1a2240" textLength="63" lengthAdjust="spacingAndGlyphs">DE CUENTAS</text>
<text x="117" y="41" font-family="Liberation Sans" font-weight="700" font-size="9.5" fill="#1a2240" textLength="26" lengthAdjust="spacingAndGlyphs">2024</text>
<rect x="117" y="41.5" width="26.4" height="1.5" fill="#f0d020"/><rect x="117" y="43" width="26.4" height="1" fill="#2a4aa0"/><rect x="117" y="44" width="26.4" height="1" fill="#d02030"/>
<rect x="120" y="63" width="23" height="2.5" fill="#1a2240"/>
<rect x="119" y="67" width="24" height="1.2" fill="#555"/><rect x="119" y="69.5" width="24" height="1.2" fill="#555"/>
<rect x="120" y="72" width="22" height="3" fill="#888"/>
<rect x="120" y="79.8" width="22" height="21.8" fill="#f4f4f4"/><rect x="120" y="79.8" width="2" height="2" fill="#222"/><rect x="120" y="83.8" width="2" height="2" fill="#222"/><rect x="120" y="89.8" width="2" height="2" fill="#222"/><rect x="120" y="91.8" width="2" height="2" fill="#222"/><rect x="120" y="95.8" width="2" height="2" fill="#222"/><rect x="120" y="97.8" width="2" height="2" fill="#222"/><rect x="122" y="79.8" width="2" height="2" fill="#222"/><rect x="122" y="83.8" width="2" height="2" fill="#222"/><rect x="122" y="87.8" width="2" height="2" fill="#222"/><rect x="122" y="99.8" width="2" height="2" fill="#222"/><rect x="124" y="83.8" width="2" height="2" fill="#222"/><rect x="124" y="85.8" width="2" height="2" fill="#222"/><rect x="124" y="89.8" width="2" height="2" fill="#222"/><rect x="124" y="99.8" width="2" height="2" fill="#222"/><rect x="126" y="81.8" width="2" height="2" fill="#222"/><rect x="126" y="87.8" width="2" height="2" fill="#222"/><rect x="126" y="89.8" width="2" height="2" fill="#222"/><rect x="126" y="91.8" width="2" height="2" fill="#222"/><rect x="126" y="95.8" width="2" height="2" fill="#222"/><rect x="126" y="99.8" width="2" height="2" fill="#222"/><rect x="128" y="81.8" width="2" height="2" fill="#222"/><rect x="128" y="83.8" width="2" height="2" fill="#222"/><rect x="130" y="79.8" width="2" height="2" fill="#222"/><rect x="130" y="91.8" width="2" height="2" fill="#222"/><rect x="130" y="97.8" width="2" height="2" fill="#222"/><rect x="130" y="99.8" width="2" height="2" fill="#222"/><rect x="132" y="83.8" width="2" height="2" fill="#222"/><rect x="132" y="87.8" width="2" height="2" fill="#222"/><rect x="132" y="89.8" width="2" height="2" fill="#222"/><rect x="132" y="91.8" width="2" height="2" fill="#222"/><rect x="132" y="97.8" width="2" height="2" fill="#222"/><rect x="134" y="79.8" width="2" height="2" fill="#222"/><rect x="134" y="83.8" width="2" height="2" fill="#222"/><rect x="134" y="93.8" width="2" height="2" fill="#222"/><rect x="134" y="95.8" width="2" height="2" fill="#222"/><rect x="134" y="99.8" width="2" height="2" fill="#222"/><rect x="136" y="79.8" width="2" height="2" fill="#222"/><rect x="136" y="81.8" width="2" height="2" fill="#222"/><rect x="136" y="85.8" width="2" height="2" fill="#222"/><rect x="136" y="87.8" width="2" height="2" fill="#222"/><rect x="136" y="91.8" width="2" height="2" fill="#222"/><rect x="136" y="97.8" width="2" height="2" fill="#222"/><rect x="136" y="99.8" width="2" height="2" fill="#222"/><rect x="138" y="93.8" width="2" height="2" fill="#222"/><rect x="138" y="97.8" width="2" height="2" fill="#222"/><rect x="138" y="99.8" width="2" height="2" fill="#222"/><rect x="140" y="85.8" width="2" height="2" fill="#222"/><rect x="140" y="87.8" width="2" height="2" fill="#222"/><rect x="140" y="91.8" width="2" height="2" fill="#222"/><rect x="140" y="97.8" width="2" height="2" fill="#222"/><rect x="120.5" y="80.3" width="7" height="7" fill="none" stroke="#222" stroke-width="1.2"/><rect x="122.5" y="82.3" width="3" height="3" fill="#222"/><rect x="134.5" y="80.3" width="7" height="7" fill="none" stroke="#222" stroke-width="1.2"/><rect x="136.5" y="82.3" width="3" height="3" fill="#222"/><rect x="120.5" y="94.3" width="7" height="7" fill="none" stroke="#222" stroke-width="1.2"/><rect x="122.5" y="96.3" width="3" height="3" fill="#222"/><rect x="120" y="103" width="22" height="1.5" fill="#555"/>
<!-- footer -->
<rect x="1" y="117" width="152" height="19" fill="#f8f8f8"/>
<circle cx="22" cy="125" r="6" fill="#d8e0d0" stroke="#607060" stroke-width="0.8"/><circle cx="22" cy="124" r="3" fill="#c03838"/>
<rect x="33" y="121" width="10" height="2" fill="#208040"/><rect x="33" y="124.5" width="18" height="2.5" fill="#e8c020"/><rect x="51" y="124.5" width="25" height="2.5" fill="#303030"/>
<rect x="86" y="121" width="20" height="3" fill="#c04040"/><rect x="85" y="124.5" width="24" height="3.5" fill="#207040"/><rect x="89" y="128.5" width="14" height="2" fill="#3060a0"/>
<circle cx="126" cy="124" r="2.4" fill="#c02020"/><circle cx="131.5" cy="124" r="2.4" fill="#c02020"/><circle cx="137" cy="124" r="2.4" fill="#c02020"/>
<rect x="114" y="128.5" width="38" height="1.5" fill="#4060a0"/>
</svg>
</div>

</div>

<!-- TASKBAR -->
<div id="tb" class="a">
  <!-- start -->
  <svg class="a" style="left:16px;top:11px" width="17" height="17" viewBox="0 0 17 17"><path d="M0 2.3L6.9 1.3V7.9H0z M7.8 1.2L16.5 0V7.9H7.8z M0 8.8H6.9V15.5L0 14.6z M7.8 8.8H16.5V17L7.8 15.7z" fill="#f4f4f4"/></svg>
  <!-- search box -->
  <div class="a" style="left:48px;top:0;width:288px;height:39px;background:#f0f0f0;border-bottom:1px solid #b8b8b8"></div>
  <svg class="a" style="left:60px;top:12px" width="17" height="17" viewBox="0 0 17 17"><circle cx="10.5" cy="6.5" r="5.3" fill="none" stroke="#202020" stroke-width="1.3"/><path d="M6.8 10.2L0.8 16.2" stroke="#202020" stroke-width="1.4"/></svg>
  <!-- bear -->
  <svg class="a" style="left:260px;top:0" width="72" height="40" viewBox="0 0 72 40">
    <defs><radialGradient id="bear" cx="0.5" cy="0.35" r="0.7"><stop offset="0" stop-color="#a08a7a"/><stop offset="1" stop-color="#7a6656"/></radialGradient>
    <radialGradient id="bearb" cx="0.6" cy="0.3" r="0.8"><stop offset="0" stop-color="#9a8474"/><stop offset="1" stop-color="#6e5a4c"/></radialGradient></defs>
    <ellipse cx="21" cy="42" rx="19" ry="15" fill="url(#bearb)"/>
    <circle cx="23" cy="5.5" r="4" fill="#8a7464"/><circle cx="38" cy="8" r="3.6" fill="#8a7464"/>
    <circle cx="25.5" cy="6" r="2" fill="#6a5448"/><circle cx="37.5" cy="8.5" r="1.8" fill="#6a5448"/>
    <ellipse cx="28" cy="20" rx="13" ry="12.5" fill="url(#bear)"/>
    <ellipse cx="37" cy="25" rx="4.5" ry="3.5" fill="#a89080"/>
    <circle cx="30.5" cy="17" r="2.1" fill="#2a2030"/><circle cx="30" cy="16.4" r="0.8" fill="#fff"/>
    <circle cx="40.5" cy="24" r="1.7" fill="#2a1a18"/>
    <path d="M46 40 C47 34 49 30 52 26" stroke="#5a9a20" stroke-width="2" fill="none"/>
    <path d="M52 40 C54 33 58 29 64 26" stroke="#5a9a20" stroke-width="1.6" fill="none"/>
    <path d="M51 29 C50 24 53 21 55 20 C56 24 55 28 51 29z" fill="#8ac838"/>
    <path d="M56 29 C60 24 65 24 68 25 C66 28 61 31 56 29z" fill="#9ad040"/>
    <path d="M50 36 C52 32 56 31 59 32 C57 35 53 37 50 36z" fill="#7ab830"/>
    <path d="M57 37 C60 34 64 34 67 35 C65 38 60 39 57 37z" fill="#8ac838"/>
  </svg>
  <!-- task view -->
  <svg class="a" style="left:351px;top:11px" width="18" height="17" viewBox="0 0 18 17"><path d="M1.5 0V2.5H11.5V0 M1.5 17V14.5H11.5V17" fill="none" stroke="#f0f0f0" stroke-width="1"/><rect x="1.5" y="5.5" width="10" height="6" fill="none" stroke="#f0f0f0" stroke-width="1"/><path d="M15.5 0V17" stroke="#f0f0f0" stroke-width="1"/><rect x="14" y="6" width="3" height="3" fill="#f0f0f0"/></svg>
  <!-- copilot -->
  <svg class="a" style="left:400px;top:9px" width="23" height="22" viewBox="0 0 23 22">
    <defs><linearGradient id="cp1" x1="0" y1="0" x2="0" y2="1"><stop offset="0" stop-color="#30a8f8"/><stop offset="0.55" stop-color="#40c070"/><stop offset="1" stop-color="#f8c820"/></linearGradient>
    <linearGradient id="cp2" x1="0" y1="0" x2="0" y2="1"><stop offset="0" stop-color="#c060f0"/><stop offset="0.5" stop-color="#f05090"/><stop offset="1" stop-color="#f8a040"/></linearGradient></defs>
    <path d="M4.8 1 L14 1 Q16 1 16.8 3 L18 6.5 L12 6.5 L8.5 15.5 L1.5 15.5 Q-0.2 15.5 0.3 13.5 L4 2.5 Q4.3 1 4.8 1z" fill="url(#cp1)"/>
    <path d="M12.5 1 L14.5 1 Q16 1 16.8 3 L18 6.5 L11.5 6.5z" fill="#1a48c8"/>
    <path d="M14 6 L21 6 Q23 6 22.4 8.2 L19 18.8 Q18.4 21 16.4 21 L8 21 Q6.2 21 5.6 19 L5 15.5 L8.5 15.5 L12 6z" fill="url(#cp2)"/>
    <path d="M5 15.5 L8.5 15.5 L7.5 21 Q6 21 5.6 19z" fill="#f06030"/>
  </svg>
  <!-- edge -->
  <svg class="a" style="left:447px;top:8px" width="25" height="24" viewBox="0 0 25 24">
    <defs><linearGradient id="ed1" x1="0" y1="0" x2="1" y2="1"><stop offset="0" stop-color="#38c8e8"/><stop offset="0.6" stop-color="#3aa8d8"/><stop offset="1" stop-color="#58d068"/></linearGradient></defs>
    <circle cx="12.5" cy="12" r="12" fill="url(#ed1)"/>
    <path d="M1 14 C2 20 7 24 13 24 C17 24 20 22 22 19 C18 21 11 20 9 15 C8 12 10 9 13 9 C9 7 3 9 1 14z" fill="#1a5ab8"/>
    <path d="M9 15 C10 18 13 19 16 18.5 C13 17 12 14 13.5 12 C15 10 18 11 19 13 C20 11 19 8 16 7 C12 6 8 10 9 15z" fill="#2a88d8"/>
  </svg>
  <!-- explorer -->
  <svg class="a" style="left:497px;top:10px" width="23" height="19" viewBox="0 0 23 19">
    <path d="M0 1.5 C0 0.7 0.7 0 1.5 0 H8 L10 2 H21.5 C22.3 2 23 2.7 23 3.5 V17.5 C23 18.3 22.3 19 21.5 19 H1.5 C0.7 19 0 18.3 0 17.5z" fill="#f0c040"/>
    <rect x="0" y="4" width="23" height="15" rx="1" fill="#fad870"/>
    <path d="M5 19 V12 H18 V19 H14 V15 H9 V19z" fill="#3aa0e8"/>
  </svg>
  <!-- store -->
  <svg class="a" style="left:545px;top:8px" width="25" height="24" viewBox="0 0 25 24">
    <path d="M7 6 V3 C7 1 9 0 12.5 0 C16 0 18 1 18 3 V6" fill="none" stroke="#3ab0e8" stroke-width="2"/>
    <rect x="0.5" y="5" width="24" height="19" rx="2.5" fill="#f4f4f4"/>
    <rect x="7.5" y="9.5" width="4.5" height="4.5" fill="#f05030"/><rect x="13" y="9.5" width="4.5" height="4.5" fill="#70b830"/><rect x="7.5" y="15" width="4.5" height="4.5" fill="#20a0e8"/><rect x="13" y="15" width="4.5" height="4.5" fill="#f8b820"/>
  </svg>
  <!-- outlook -->
  <svg class="a" style="left:594px;top:9px" width="26" height="22" viewBox="0 0 26 22">
    <path d="M10 3 L18 0 L26 5 V19 C26 20.5 25 22 23 22 H11 C10.5 22 10 21.5 10 21z" fill="#28a8e8"/>
    <path d="M10 8 L26 5 V12 L10 12z" fill="#1470c8"/>
    <path d="M10 14 L26 8 V19 C26 20.5 25 22 23 22 H11z" fill="#50d0f8"/>
    <rect x="0" y="5" width="13" height="13" rx="1.5" fill="#1068c0"/>
    <ellipse cx="6.5" cy="11.5" rx="3.2" ry="3.8" fill="none" stroke="#fff" stroke-width="1.8"/>
  </svg>
  <!-- ps active -->
  <div class="a" style="left:632px;top:0;width:48px;height:40px;background:#5a5650"></div>
  <div class="a" style="left:645px;top:9px;width:21.5px;height:21px;background:#001e36;border-radius:4px"></div>
  <!-- firefox -->
  <svg class="a" style="left:693px;top:8px" width="24" height="24" viewBox="0 0 24 24">
    <defs><linearGradient id="ff1" x1="0.8" y1="0" x2="0.2" y2="1"><stop offset="0" stop-color="#ffd84a"/><stop offset="0.4" stop-color="#ff8a20"/><stop offset="0.8" stop-color="#ff3a58"/><stop offset="1" stop-color="#e02a88"/></linearGradient>
    <radialGradient id="ff2" cx="0.4" cy="0.4" r="0.6"><stop offset="0" stop-color="#9a5af8"/><stop offset="1" stop-color="#6a3ad8"/></radialGradient></defs>
    <path d="M12 24 C5 24 0.5 19 0.5 13 C0.5 9 2 6 3.5 5 C3.5 7 4.5 8 5.5 8.5 C6 6 8 4 10 3.5 C9 5 9.5 6.5 10.5 7 C14 7 17 5 17 0 C21 2 23.5 7 23.5 12.5 C23.5 19 18.5 24 12 24z" fill="url(#ff1)"/>
    <circle cx="12.5" cy="13.5" r="6.2" fill="url(#ff2)"/>
    <path d="M5 10 C7 8 10 8 12 9 C9 10 7 12 7 14z" fill="#ff9a30"/>
  </svg>
  <!-- premiere -->
  <div class="a" style="left:743px;top:9px;width:21px;height:21px;background:#00005b;border-radius:4px"></div>
  <!-- vlc -->
  <svg class="a" style="left:792px;top:8px" width="21" height="24" viewBox="0 0 21 24">
    <path d="M8 0.5 H13 L19 20 H2z" fill="#f08a10"/>
    <path d="M6.5 6 H14.5 L15.5 9 H5.5z M4.6 12 H16.4 L17.5 15.5 H3.5z" fill="#f4f4f4"/>
    <path d="M0.5 20 H20.5 L21 23 C21 23.5 20.5 24 20 24 H1 C0.5 24 0 23.5 0 23z" fill="#f07a10"/>
  </svg>
  <!-- underlines -->
  <div class="a" style="left:489px;top:38px;width:31px;height:2px;background:#70a8d8"></div>
  <div class="a" style="left:521px;top:38px;width:8px;height:2px;background:#5a7a98"></div>
  <div class="a" style="left:632px;top:38px;width:48px;height:2px;background:#76b8f0"></div>
  <div class="a" style="left:685px;top:38px;width:40px;height:2px;background:#70a8d8"></div>
  <div class="a" style="left:734px;top:38px;width:40px;height:2px;background:#70a8d8"></div>
  <div class="a" style="left:783px;top:38px;width:40px;height:2px;background:#70a8d8"></div>

  <!-- weather -->
  <svg class="a" style="left:980px;top:7px" width="28" height="24" viewBox="0 0 28 24">
    <defs><linearGradient id="sun" x1="0" y1="0" x2="0" y2="1"><stop offset="0" stop-color="#f8c020"/><stop offset="1" stop-color="#f08010"/></linearGradient></defs>
    <circle cx="12" cy="13" r="10.5" fill="url(#sun)"/>
    <rect x="4" y="9" width="22" height="2" rx="1" fill="#8a8a8a"/><rect x="1" y="14" width="20" height="2" rx="1" fill="#9a9a9a"/><rect x="1" y="18" width="17" height="2" rx="1" fill="#8a8a8a"/>
    <circle cx="19.5" cy="6" r="5.5" fill="#d82020"/>
    <text x="17.6" y="9" font-family="Liberation Sans" font-weight="700" font-size="8" fill="#fff">1</text>
  </svg>
  <svg class="a" style="left:1122px;top:16px" width="14" height="8" viewBox="0 0 14 8"><path d="M1 7L7 1l6 6" fill="none" stroke="#f0f0f0" stroke-width="1.3"/></svg>
  <svg class="a" style="left:1147px;top:11px" width="13" height="17" viewBox="0 0 13 17"><path d="M2 3 C4 1 7 1 9 3 M2 14 C4 16 7 16 9 14" fill="none" stroke="#f0f0f0" stroke-width="1.1"/><rect x="1" y="5" width="8.5" height="7" rx="1.5" fill="none" stroke="#f0f0f0" stroke-width="1.1"/><path d="M9.5 8 L12.5 6 V11 L9.5 9" fill="none" stroke="#f0f0f0" stroke-width="1.1"/></svg>
  <svg class="a" style="left:1168px;top:13px" width="18" height="14" viewBox="0 0 18 14"><path d="M1 4.5H4L8 1V13L4 9.5H1z" fill="none" stroke="#f0f0f0" stroke-width="1.1"/><path d="M10.5 4.5C11.5 5.5 11.5 8.5 10.5 9.5 M13 3C14.5 5 14.5 9 13 11" fill="none" stroke="#f0f0f0" stroke-width="1.1"/><path d="M15.5 1.5C17.5 4.5 17.5 9.5 15.5 12.5" fill="none" stroke="#a0a0a0" stroke-width="1"/></svg>
  <svg class="a" style="left:1192px;top:13px" width="18" height="14" viewBox="0 0 18 14"><rect x="3" y="1.5" width="14" height="9" fill="none" stroke="#f0f0f0" stroke-width="1.1"/><path d="M10 10.5V13M6.5 13.5H13.5" stroke="#f0f0f0" stroke-width="1.1"/><rect x="0.5" y="0.5" width="4.5" height="5" fill="#38332b" stroke="#f0f0f0" stroke-width="1"/><path d="M2.7 5.5V13" stroke="#f0f0f0" stroke-width="1"/></svg>
  <svg class="a" style="left:1324px;top:11px" width="18" height="16" viewBox="0 0 18 16"><path d="M0.5 0.5H17V12.5H7L3.5 15.5V12.5H0.5z" fill="#f4f4f4"/><path d="M3.5 4H14 M3.5 7H14 M3.5 10H11" stroke="#38332b" stroke-width="1.2"/></svg>
  <div class="a" style="left:1330px;top:17px;width:21px;height:19px;border-radius:10px;background:#38332b;border:1px solid #8a8680"></div>
  <div class="t" style="left:1334px;top:21px;font-size:12px;color:#fff">42</div>
  <div class="a" style="left:1361px;top:0;width:1px;height:40px;background:#8a8680"></div>
</div>

<div class="t" style="left:35.1px;top:6.0px;font-size:12.8px;color:#e6e6e6;transform:scaleX(0.907);z-index:7">Archivo</div>
<div class="t" style="left:86.5px;top:6.0px;font-size:12.8px;color:#e6e6e6;transform:scaleX(0.915);z-index:7">Edición</div>
<div class="t" style="left:136.7px;top:6.0px;font-size:12.8px;color:#e6e6e6;transform:scaleX(0.939);z-index:7">Imagen</div>
<div class="t" style="left:189.3px;top:6.0px;font-size:12.8px;color:#e6e6e6;transform:scaleX(0.832);z-index:7">Capa</div>
<div class="t" style="left:228.2px;top:6.0px;font-size:12.8px;color:#e6e6e6;transform:scaleX(0.881);z-index:7">Texto</div>
<div class="t" style="left:266.9px;top:6.0px;font-size:12.8px;color:#e6e6e6;transform:scaleX(0.918);z-index:7">Selección</div>
<div class="t" style="left:329.8px;top:6.0px;font-size:12.8px;color:#e6e6e6;transform:scaleX(0.952);z-index:7">Filtro</div>
<div class="t" style="left:369.0px;top:6.0px;font-size:12.8px;color:#e6e6e6;transform:scaleX(0.912);z-index:7">3D</div>
<div class="t" style="left:396.3px;top:6.0px;font-size:12.8px;color:#e6e6e6;transform:scaleX(0.879);z-index:7">Vista</div>
<div class="t" style="left:433.3px;top:6.0px;font-size:12.8px;color:#e6e6e6;transform:scaleX(0.917);z-index:7">Plugins</div>
<div class="t" style="left:484.0px;top:6.0px;font-size:12.8px;color:#e6e6e6;transform:scaleX(0.904);z-index:7">Ventana</div>
<div class="t" style="left:538.8px;top:6.0px;font-size:12.8px;color:#e6e6e6;transform:scaleX(0.911);z-index:7">Ayuda</div>
<div class="t" style="left:37.0px;top:134.0px;font-size:15px;color:#ffffff;font-weight:700;transform:scaleX(0.817)">Archivo nuevo</div>
<div class="t" style="left:41.8px;top:174.0px;font-size:15px;color:#e4e4e4;font-weight:700;transform:scaleX(0.833)">Abrir</div>
<div class="t" style="left:61.8px;top:242.1px;font-size:14.8px;color:#f2f2f2;transform:scaleX(0.918)">Inicio</div>
<div class="t" style="left:32.9px;top:290.6px;font-size:12.6px;color:#b2b2b2;font-weight:700;transform:scaleX(0.827)">ARCHIVOS</div>
<div class="t" style="left:62.0px;top:326.0px;font-size:15px;color:#e2e2e2;transform:scaleX(0.832)">Tus archivos</div>
<div class="t" style="left:62.0px;top:362.6px;font-size:15px;color:#e2e2e2;transform:scaleX(0.870)">Compartido contigo</div>
<div class="t" style="left:61.1px;top:398.2px;font-size:15px;color:#e2e2e2;transform:scaleX(0.871)">Fotos de Lightroom</div>
<div class="t" style="left:61.1px;top:433.9px;font-size:15px;color:#e2e2e2;transform:scaleX(0.872)">Eliminados</div>
<div class="t" style="left:308.9px;top:79.8px;font-size:19px;color:#e8e8e8;font-weight:700;transform:scaleX(0.818)">Recientes</div>
<div class="t" style="left:309.1px;top:130.0px;font-size:14.1px;color:#a6a6a6;transform:scaleX(0.900)">Ordenar</div>
<div class="t" style="left:379.6px;top:130.0px;font-size:14.1px;color:#dadada;transform:scaleX(0.893)">Recientes</div>
<div class="t" style="left:1064.8px;top:125.8px;font-size:14.1px;color:#a8a8a8;font-weight:700;transform:scaleX(0.836)">Filtrar</div>
<div class="t" style="left:1113.5px;top:128.9px;font-size:13.8px;color:#8c8c8c;font-style:italic;transform:scaleX(0.865)">Filtrar archivos recientes</div>
<div class="t" style="left:309.3px;top:379.9px;font-size:13.4px;color:#d4d4d4;transform:scaleX(0.942)">WhatsApp Image 2025-09-03</div>
<div class="t" style="left:309.3px;top:401.2px;font-size:13.4px;color:#d4d4d4;transform:scaleX(0.895)">at 2.18.38 PM.jpeg</div>
<div class="t" style="left:503.8px;top:379.8px;font-size:13.4px;color:#d4d4d4;transform:scaleX(0.945)">portada 2026.psd</div>
<div class="t" style="left:698.5px;top:379.8px;font-size:13.4px;color:#d4d4d4;transform:scaleX(0.947)">Plantilla 2025.psd</div>
<div class="t" style="left:893.6px;top:379.8px;font-size:13.4px;color:#d4d4d4;transform:scaleX(0.909)">PORTADA..jpg</div>
<div class="t" style="left:1089.5px;top:379.8px;font-size:13.4px;color:#d4d4d4;transform:scaleX(0.904)">VALLE INVITACIÓN 02.psd</div>
<div class="t" style="left:308.6px;top:663.0px;font-size:13.4px;color:#d4d4d4;transform:scaleX(0.874)">PREGON INTERCULTURAL</div>
<div class="t" style="left:308.6px;top:683.8px;font-size:13.4px;color:#d4d4d4;transform:scaleX(0.879)">FARIAS.psd</div>
<div class="t" style="left:503.6px;top:663.0px;font-size:13.4px;color:#d4d4d4;transform:scaleX(0.889)">PORTADA FACE 2025</div>
<div class="t" style="left:503.6px;top:683.8px;font-size:13.4px;color:#d4d4d4;transform:scaleX(0.862)">FIESTAS.psd</div>
<div class="t" style="left:699.1px;top:662.7px;font-size:13.4px;color:#d4d4d4;transform:scaleX(0.923)">3564236.eps</div>
<div class="t" style="left:894.1px;top:662.7px;font-size:13.4px;color:#d4d4d4;transform:scaleX(0.915)">Condolencias VH. 2025.psd</div>
<div class="t" style="left:1088.6px;top:662.7px;font-size:13.4px;color:#d4d4d4;transform:scaleX(0.899)">RENDICIÓN 2024.psd</div>
<div class="t" style="left:309.0px;top:420.4px;font-size:12.5px;color:#a2a2a2;transform:scaleX(0.832)">ayer</div>
<div class="t" style="left:504.1px;top:399.4px;font-size:12.5px;color:#a2a2a2;transform:scaleX(0.857)">anteayer</div>
<div class="t" style="left:698.8px;top:399.4px;font-size:12.5px;color:#a2a2a2;transform:scaleX(0.865)">anteayer</div>
<div class="t" style="left:893.7px;top:399.8px;font-size:12.5px;color:#a2a2a2;transform:scaleX(0.823)">hace 7 días</div>
<div class="t" style="left:1088.7px;top:399.8px;font-size:12.5px;color:#a2a2a2;transform:scaleX(0.823)">hace 7 días</div>
<div class="t" style="left:308.7px;top:703.6px;font-size:12.5px;color:#a2a2a2;transform:scaleX(0.843)">hace 2 meses</div>
<div class="t" style="left:503.7px;top:703.6px;font-size:12.5px;color:#a2a2a2;transform:scaleX(0.843)">hace 2 meses</div>
<div class="t" style="left:698.1px;top:682.3px;font-size:12.5px;color:#a2a2a2;transform:scaleX(0.849)">hace 2 meses</div>
<div class="t" style="left:893.1px;top:682.3px;font-size:12.5px;color:#a2a2a2;transform:scaleX(0.849)">hace 2 meses</div>
<div class="t" style="left:1088.7px;top:682.3px;font-size:12.5px;color:#a2a2a2;transform:scaleX(0.843)">hace 2 meses</div>
<div class="t" style="left:87.4px;top:740.7px;font-size:15.5px;color:#1c1c1c;transform:scaleX(0.911);z-index:7;-webkit-text-stroke:0;color:#202020">Buscar</div>
<div class="t" style="left:1013.2px;top:739.9px;font-size:15px;color:#f2f2f2;transform:scaleX(0.873);z-index:7">27°C</div>
<div class="t" style="left:1050.4px;top:739.9px;font-size:15px;color:#f2f2f2;transform:scaleX(0.936);z-index:7">Neblina</div>
<div class="t" style="left:1220.9px;top:741.9px;font-size:12.4px;color:#f2f2f2;transform:scaleX(0.733);z-index:7">ESP</div>
<div class="t" style="left:1267.0px;top:732.1px;font-size:13px;color:#f2f2f2;transform:scaleX(0.848);z-index:7">15:58</div>
<div class="t" style="left:1258.0px;top:750.5px;font-size:12.5px;color:#f2f2f2;transform:scaleX(0.937);z-index:7">4/9/2025</div>
<div class="t" style="left:27.8px;top:45.5px;font-size:23px;color:#31a8ff;font-weight:700;transform:scaleX(0.830);z-index:7">Ps</div>
<div class="t" style="left:8.5px;top:7.0px;font-size:10px;color:#31a8ff;font-weight:700;transform:scaleX(0.808);z-index:7">Ps</div>
<div class="t" style="left:648.6px;top:741.0px;font-size:13px;color:#31a8ff;font-weight:700;transform:scaleX(0.887);z-index:7">Ps</div>
<div class="t" style="left:746.5px;top:741.0px;font-size:13px;color:#9999ff;font-weight:700;transform:scaleX(1.023);z-index:7">Pr</div>
</body></html>
